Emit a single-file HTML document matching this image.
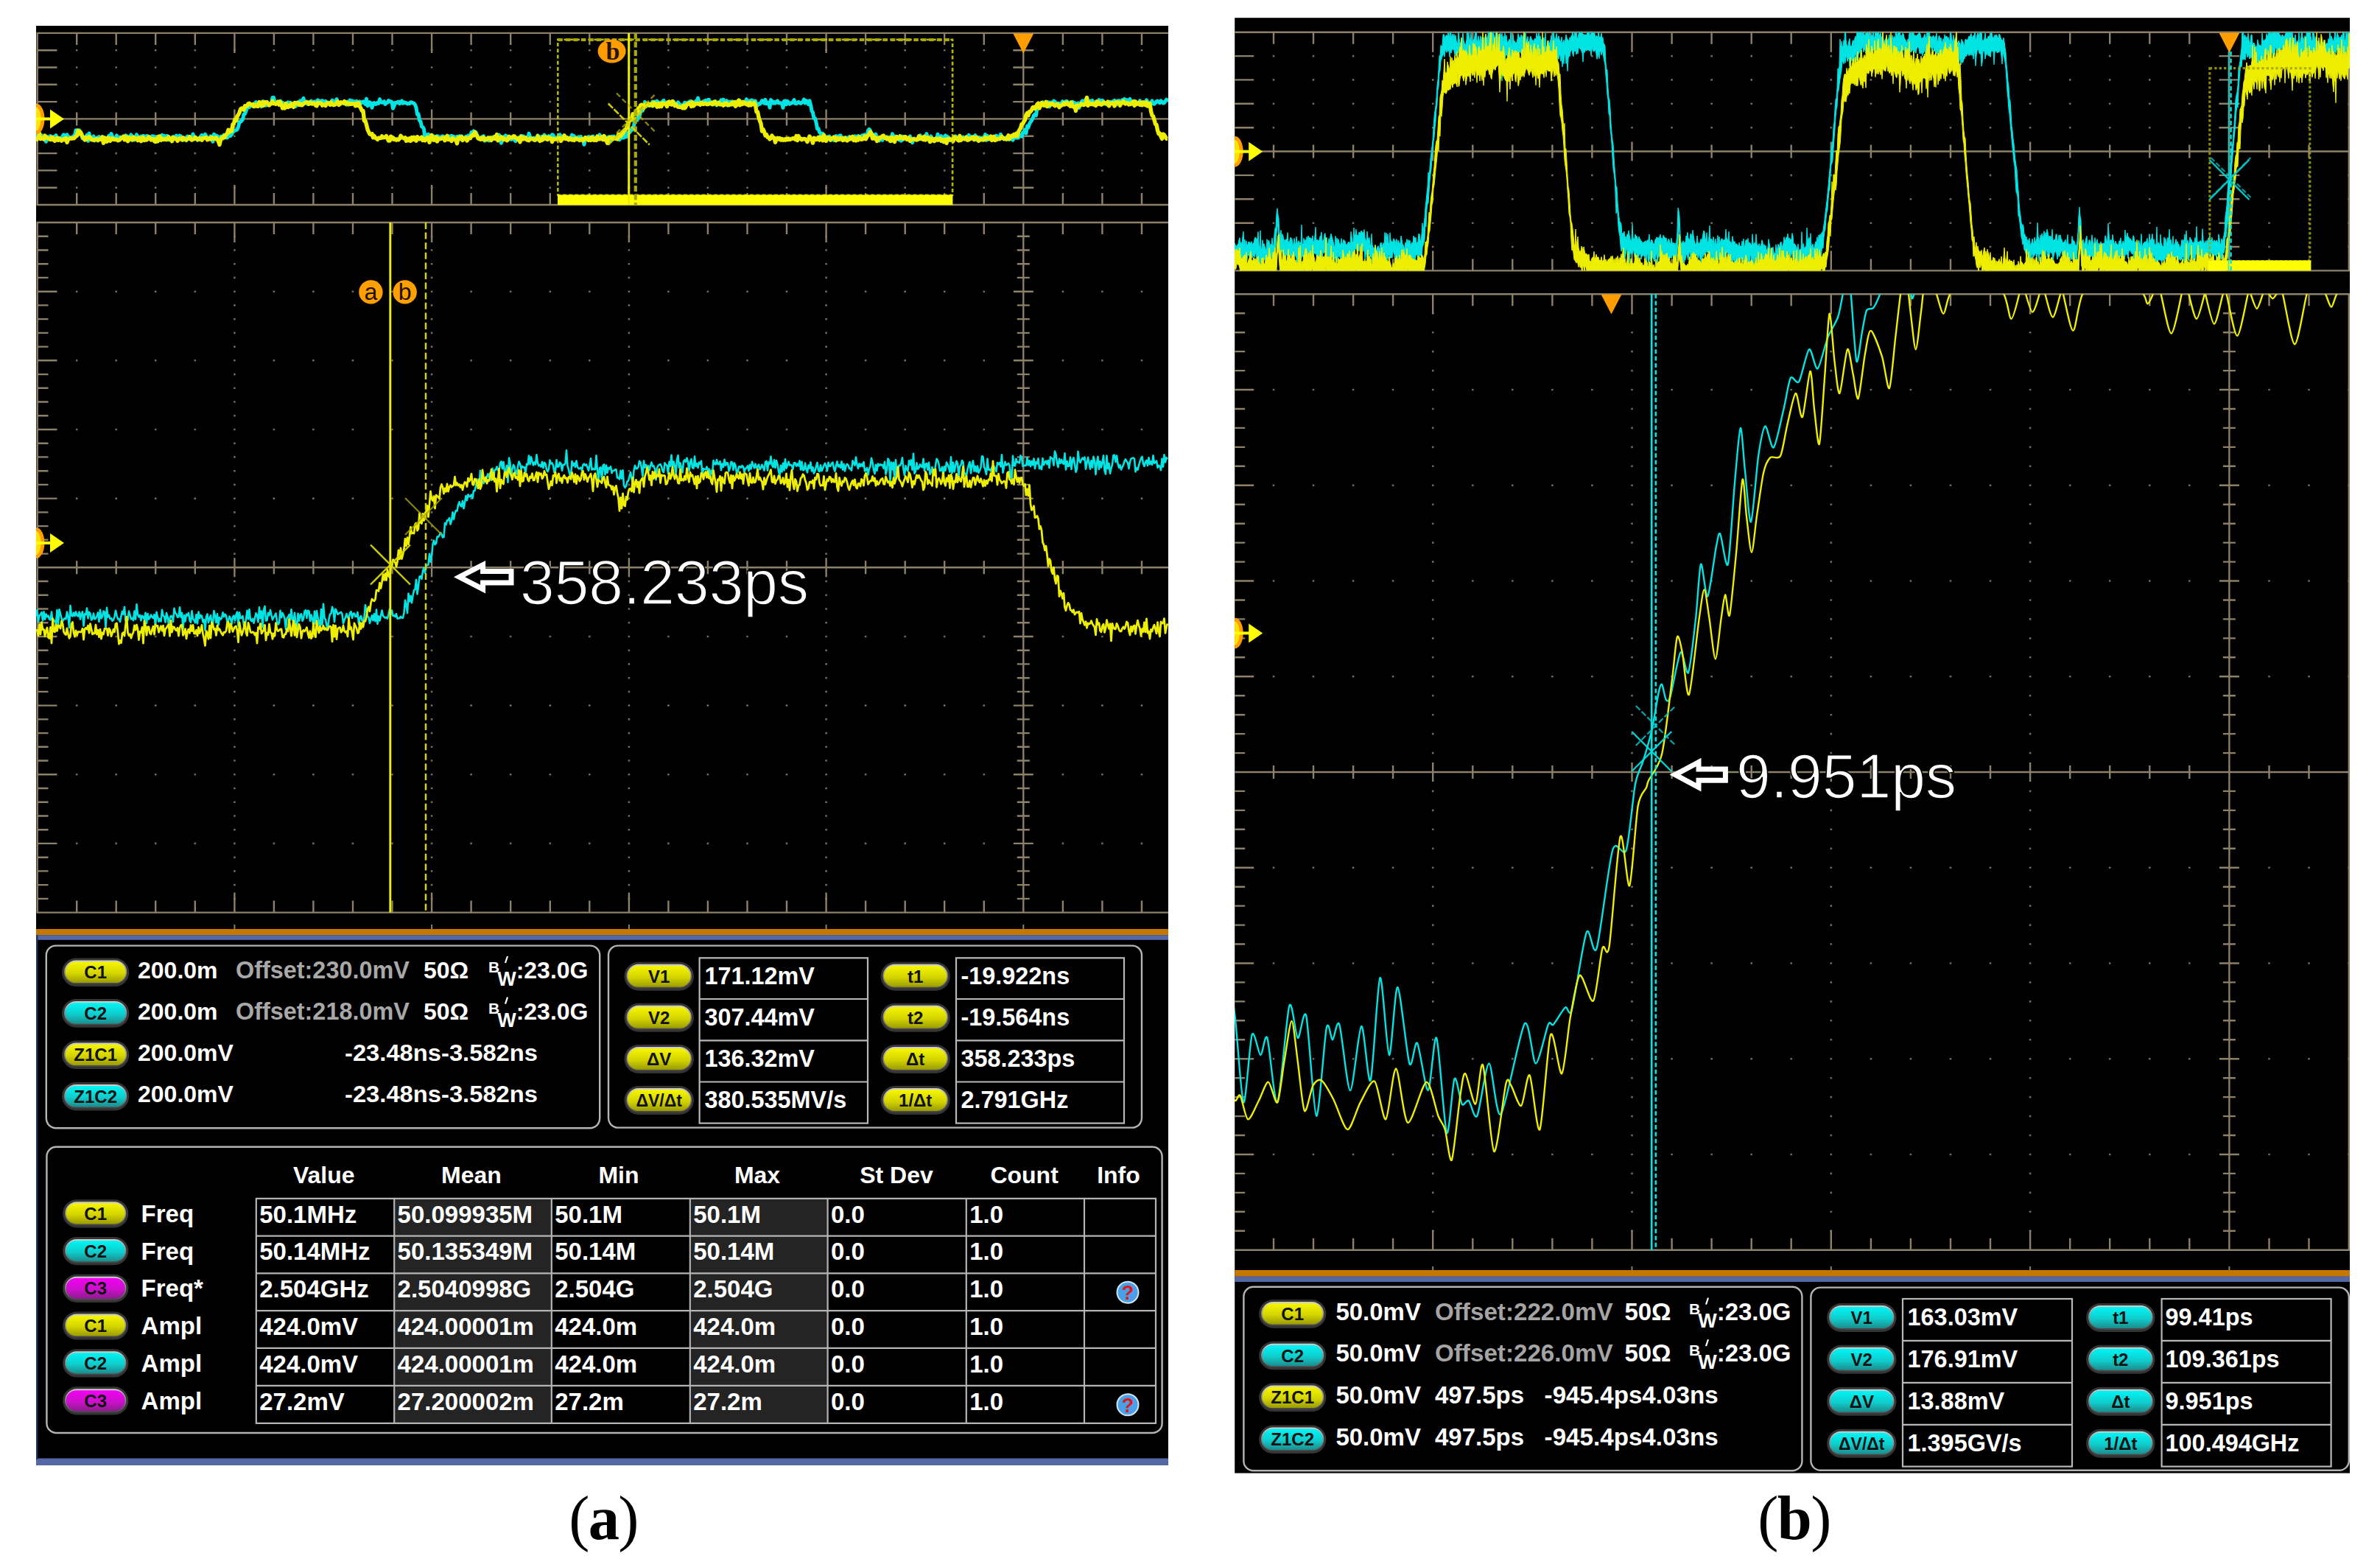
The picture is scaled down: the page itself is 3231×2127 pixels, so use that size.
<!DOCTYPE html><html><head><meta charset="utf-8"><title>Oscilloscope captures</title><style>html,body{margin:0;padding:0;background:#fff;overflow:hidden}svg{display:block}.fs{font-family:"Liberation Sans",Arial,sans-serif}.fr{font-family:"Liberation Serif","DejaVu Serif",serif}</style></head><body>
<svg width="3231" height="2127" viewBox="0 0 3231 2127">
<defs><linearGradient id="gb" x1="0" y1="0" x2="0" y2="1"><stop offset="0" stop-color="#d8d8d8"/><stop offset="0.5" stop-color="#8a8a8a"/><stop offset="1" stop-color="#3c3c3c"/></linearGradient><linearGradient id="gy" x1="0" y1="0" x2="0" y2="1"><stop offset="0" stop-color="#f6f600"/><stop offset="0.55" stop-color="#d4d400"/><stop offset="1" stop-color="#9a9a00"/></linearGradient><linearGradient id="gc" x1="0" y1="0" x2="0" y2="1"><stop offset="0" stop-color="#00f6f6"/><stop offset="0.55" stop-color="#10cccc"/><stop offset="1" stop-color="#1c8c8c"/></linearGradient><linearGradient id="gm" x1="0" y1="0" x2="0" y2="1"><stop offset="0" stop-color="#f400f4"/><stop offset="0.55" stop-color="#cc10cc"/><stop offset="1" stop-color="#8c1c8c"/></linearGradient><clipPath id="cA1"><rect x="49" y="44.9" width="1537" height="233.2"/></clipPath><clipPath id="cA2"><rect x="49" y="302" width="1537" height="936.6"/></clipPath><clipPath id="cB1"><rect x="1676" y="43.7" width="1514" height="323.7"/></clipPath><clipPath id="cB2"><rect x="1676" y="399.3" width="1514" height="1297.4"/></clipPath></defs>
<rect width="3231" height="2127" fill="#fff"/>
<rect x="49" y="35" width="1537" height="1954" fill="#000"/>
<path d="M104.2 66.9v2.6M104.2 90.2v2.6M104.2 113.5v2.6M104.2 136.8v2.6M104.2 183.5v2.6M104.2 206.8v2.6M104.2 230.1v2.6M104.2 253.4v2.6M157.7 66.9v2.6M157.7 90.2v2.6M157.7 113.5v2.6M157.7 136.8v2.6M157.7 183.5v2.6M157.7 206.8v2.6M157.7 230.1v2.6M157.7 253.4v2.6M211.2 66.9v2.6M211.2 90.2v2.6M211.2 113.5v2.6M211.2 136.8v2.6M211.2 183.5v2.6M211.2 206.8v2.6M211.2 230.1v2.6M211.2 253.4v2.6M264.8 66.9v2.6M264.8 90.2v2.6M264.8 113.5v2.6M264.8 136.8v2.6M264.8 183.5v2.6M264.8 206.8v2.6M264.8 230.1v2.6M264.8 253.4v2.6M318.4 66.9v2.6M318.4 90.2v2.6M318.4 113.5v2.6M318.4 136.8v2.6M318.4 183.5v2.6M318.4 206.8v2.6M318.4 230.1v2.6M318.4 253.4v2.6M371.9 66.9v2.6M371.9 90.2v2.6M371.9 113.5v2.6M371.9 136.8v2.6M371.9 183.5v2.6M371.9 206.8v2.6M371.9 230.1v2.6M371.9 253.4v2.6M425.4 66.9v2.6M425.4 90.2v2.6M425.4 113.5v2.6M425.4 136.8v2.6M425.4 183.5v2.6M425.4 206.8v2.6M425.4 230.1v2.6M425.4 253.4v2.6M479 66.9v2.6M479 90.2v2.6M479 113.5v2.6M479 136.8v2.6M479 183.5v2.6M479 206.8v2.6M479 230.1v2.6M479 253.4v2.6M532.5 66.9v2.6M532.5 90.2v2.6M532.5 113.5v2.6M532.5 136.8v2.6M532.5 183.5v2.6M532.5 206.8v2.6M532.5 230.1v2.6M532.5 253.4v2.6M586.1 66.9v2.6M586.1 90.2v2.6M586.1 113.5v2.6M586.1 136.8v2.6M586.1 183.5v2.6M586.1 206.8v2.6M586.1 230.1v2.6M586.1 253.4v2.6M639.6 66.9v2.6M639.6 90.2v2.6M639.6 113.5v2.6M639.6 136.8v2.6M639.6 183.5v2.6M639.6 206.8v2.6M639.6 230.1v2.6M639.6 253.4v2.6M693.2 66.9v2.6M693.2 90.2v2.6M693.2 113.5v2.6M693.2 136.8v2.6M693.2 183.5v2.6M693.2 206.8v2.6M693.2 230.1v2.6M693.2 253.4v2.6M746.8 66.9v2.6M746.8 90.2v2.6M746.8 113.5v2.6M746.8 136.8v2.6M746.8 183.5v2.6M746.8 206.8v2.6M746.8 230.1v2.6M746.8 253.4v2.6M800.3 66.9v2.6M800.3 90.2v2.6M800.3 113.5v2.6M800.3 136.8v2.6M800.3 183.5v2.6M800.3 206.8v2.6M800.3 230.1v2.6M800.3 253.4v2.6M853.9 66.9v2.6M853.9 90.2v2.6M853.9 113.5v2.6M853.9 136.8v2.6M853.9 183.5v2.6M853.9 206.8v2.6M853.9 230.1v2.6M853.9 253.4v2.6M907.4 66.9v2.6M907.4 90.2v2.6M907.4 113.5v2.6M907.4 136.8v2.6M907.4 183.5v2.6M907.4 206.8v2.6M907.4 230.1v2.6M907.4 253.4v2.6M960.9 66.9v2.6M960.9 90.2v2.6M960.9 113.5v2.6M960.9 136.8v2.6M960.9 183.5v2.6M960.9 206.8v2.6M960.9 230.1v2.6M960.9 253.4v2.6M1014.5 66.9v2.6M1014.5 90.2v2.6M1014.5 113.5v2.6M1014.5 136.8v2.6M1014.5 183.5v2.6M1014.5 206.8v2.6M1014.5 230.1v2.6M1014.5 253.4v2.6M1068 66.9v2.6M1068 90.2v2.6M1068 113.5v2.6M1068 136.8v2.6M1068 183.5v2.6M1068 206.8v2.6M1068 230.1v2.6M1068 253.4v2.6M1121.6 66.9v2.6M1121.6 90.2v2.6M1121.6 113.5v2.6M1121.6 136.8v2.6M1121.6 183.5v2.6M1121.6 206.8v2.6M1121.6 230.1v2.6M1121.6 253.4v2.6M1175.1 66.9v2.6M1175.1 90.2v2.6M1175.1 113.5v2.6M1175.1 136.8v2.6M1175.1 183.5v2.6M1175.1 206.8v2.6M1175.1 230.1v2.6M1175.1 253.4v2.6M1228.7 66.9v2.6M1228.7 90.2v2.6M1228.7 113.5v2.6M1228.7 136.8v2.6M1228.7 183.5v2.6M1228.7 206.8v2.6M1228.7 230.1v2.6M1228.7 253.4v2.6M1282.2 66.9v2.6M1282.2 90.2v2.6M1282.2 113.5v2.6M1282.2 136.8v2.6M1282.2 183.5v2.6M1282.2 206.8v2.6M1282.2 230.1v2.6M1282.2 253.4v2.6M1335.8 66.9v2.6M1335.8 90.2v2.6M1335.8 113.5v2.6M1335.8 136.8v2.6M1335.8 183.5v2.6M1335.8 206.8v2.6M1335.8 230.1v2.6M1335.8 253.4v2.6M1442.9 66.9v2.6M1442.9 90.2v2.6M1442.9 113.5v2.6M1442.9 136.8v2.6M1442.9 183.5v2.6M1442.9 206.8v2.6M1442.9 230.1v2.6M1442.9 253.4v2.6M1496.4 66.9v2.6M1496.4 90.2v2.6M1496.4 113.5v2.6M1496.4 136.8v2.6M1496.4 183.5v2.6M1496.4 206.8v2.6M1496.4 230.1v2.6M1496.4 253.4v2.6M1550 66.9v2.6M1550 90.2v2.6M1550 113.5v2.6M1550 136.8v2.6M1550 183.5v2.6M1550 206.8v2.6M1550 230.1v2.6M1550 253.4v2.6" stroke="#8c8068" stroke-width="2.6" fill="none" opacity="0.8"/>
<path d="M49.5 44.9H1586M49.5 278H1586M49.5 161.4H1586M50.7 44.9V278M1389.3 44.9V278M104.2 44.9V60.9M104.2 262V278M104.2 152.4V170.4M157.7 44.9V60.9M157.7 262V278M157.7 152.4V170.4M211.2 44.9V60.9M211.2 262V278M211.2 152.4V170.4M264.8 44.9V60.9M264.8 262V278M264.8 152.4V170.4M318.4 44.9V71.9M318.4 251V278M318.4 148.4V174.4M371.9 44.9V60.9M371.9 262V278M371.9 152.4V170.4M425.4 44.9V60.9M425.4 262V278M425.4 152.4V170.4M479 44.9V60.9M479 262V278M479 152.4V170.4M532.5 44.9V60.9M532.5 262V278M532.5 152.4V170.4M586.1 44.9V71.9M586.1 251V278M586.1 148.4V174.4M639.6 44.9V60.9M639.6 262V278M639.6 152.4V170.4M693.2 44.9V60.9M693.2 262V278M693.2 152.4V170.4M746.8 44.9V60.9M746.8 262V278M746.8 152.4V170.4M800.3 44.9V60.9M800.3 262V278M800.3 152.4V170.4M853.9 44.9V71.9M853.9 251V278M853.9 148.4V174.4M907.4 44.9V60.9M907.4 262V278M907.4 152.4V170.4M960.9 44.9V60.9M960.9 262V278M960.9 152.4V170.4M1014.5 44.9V60.9M1014.5 262V278M1014.5 152.4V170.4M1068 44.9V60.9M1068 262V278M1068 152.4V170.4M1121.6 44.9V71.9M1121.6 251V278M1121.6 148.4V174.4M1175.1 44.9V60.9M1175.1 262V278M1175.1 152.4V170.4M1228.7 44.9V60.9M1228.7 262V278M1228.7 152.4V170.4M1282.2 44.9V60.9M1282.2 262V278M1282.2 152.4V170.4M1335.8 44.9V60.9M1335.8 262V278M1335.8 152.4V170.4M1442.9 44.9V60.9M1442.9 262V278M1442.9 152.4V170.4M1496.4 44.9V60.9M1496.4 262V278M1496.4 152.4V170.4M1550 44.9V60.9M1550 262V278M1550 152.4V170.4M49.5 68.2H77.5M1375.3 68.2H1403.3M49.5 91.5H77.5M1375.3 91.5H1403.3M49.5 114.8H77.5M1375.3 114.8H1403.3M49.5 138.1H77.5M1375.3 138.1H1403.3M49.5 184.8H77.5M1375.3 184.8H1403.3M49.5 208.1H77.5M1375.3 208.1H1403.3M49.5 231.4H77.5M1375.3 231.4H1403.3M49.5 254.7H77.5M1375.3 254.7H1403.3" stroke="#8c8068" stroke-width="2.4" fill="none" />
<path d="M104.2 394.4v2.6M104.2 488v2.6M104.2 581.7v2.6M104.2 675.3v2.6M104.2 862.7v2.6M104.2 956.3v2.6M104.2 1050v2.6M104.2 1143.6v2.6M157.7 394.4v2.6M157.7 488v2.6M157.7 581.7v2.6M157.7 675.3v2.6M157.7 862.7v2.6M157.7 956.3v2.6M157.7 1050v2.6M157.7 1143.6v2.6M211.2 394.4v2.6M211.2 488v2.6M211.2 581.7v2.6M211.2 675.3v2.6M211.2 862.7v2.6M211.2 956.3v2.6M211.2 1050v2.6M211.2 1143.6v2.6M264.8 394.4v2.6M264.8 488v2.6M264.8 581.7v2.6M264.8 675.3v2.6M264.8 862.7v2.6M264.8 956.3v2.6M264.8 1050v2.6M264.8 1143.6v2.6M318.4 319.4v2.6M318.4 338.2v2.6M318.4 356.9v2.6M318.4 375.6v2.6M318.4 394.4v2.6M318.4 413.1v2.6M318.4 431.8v2.6M318.4 450.6v2.6M318.4 469.3v2.6M318.4 488v2.6M318.4 506.8v2.6M318.4 525.5v2.6M318.4 544.2v2.6M318.4 562.9v2.6M318.4 581.7v2.6M318.4 600.4v2.6M318.4 619.1v2.6M318.4 637.9v2.6M318.4 656.6v2.6M318.4 675.3v2.6M318.4 694.1v2.6M318.4 712.8v2.6M318.4 731.5v2.6M318.4 750.3v2.6M318.4 787.7v2.6M318.4 806.5v2.6M318.4 825.2v2.6M318.4 843.9v2.6M318.4 862.7v2.6M318.4 881.4v2.6M318.4 900.1v2.6M318.4 918.9v2.6M318.4 937.6v2.6M318.4 956.3v2.6M318.4 975.1v2.6M318.4 993.8v2.6M318.4 1012.5v2.6M318.4 1031.2v2.6M318.4 1050v2.6M318.4 1068.7v2.6M318.4 1087.4v2.6M318.4 1106.2v2.6M318.4 1124.9v2.6M318.4 1143.6v2.6M318.4 1162.4v2.6M318.4 1181.1v2.6M318.4 1199.8v2.6M318.4 1218.6v2.6M371.9 394.4v2.6M371.9 488v2.6M371.9 581.7v2.6M371.9 675.3v2.6M371.9 862.7v2.6M371.9 956.3v2.6M371.9 1050v2.6M371.9 1143.6v2.6M425.4 394.4v2.6M425.4 488v2.6M425.4 581.7v2.6M425.4 675.3v2.6M425.4 862.7v2.6M425.4 956.3v2.6M425.4 1050v2.6M425.4 1143.6v2.6M479 394.4v2.6M479 488v2.6M479 581.7v2.6M479 675.3v2.6M479 862.7v2.6M479 956.3v2.6M479 1050v2.6M479 1143.6v2.6M532.5 394.4v2.6M532.5 488v2.6M532.5 581.7v2.6M532.5 675.3v2.6M532.5 862.7v2.6M532.5 956.3v2.6M532.5 1050v2.6M532.5 1143.6v2.6M586.1 319.4v2.6M586.1 338.2v2.6M586.1 356.9v2.6M586.1 375.6v2.6M586.1 394.4v2.6M586.1 413.1v2.6M586.1 431.8v2.6M586.1 450.6v2.6M586.1 469.3v2.6M586.1 488v2.6M586.1 506.8v2.6M586.1 525.5v2.6M586.1 544.2v2.6M586.1 562.9v2.6M586.1 581.7v2.6M586.1 600.4v2.6M586.1 619.1v2.6M586.1 637.9v2.6M586.1 656.6v2.6M586.1 675.3v2.6M586.1 694.1v2.6M586.1 712.8v2.6M586.1 731.5v2.6M586.1 750.3v2.6M586.1 787.7v2.6M586.1 806.5v2.6M586.1 825.2v2.6M586.1 843.9v2.6M586.1 862.7v2.6M586.1 881.4v2.6M586.1 900.1v2.6M586.1 918.9v2.6M586.1 937.6v2.6M586.1 956.3v2.6M586.1 975.1v2.6M586.1 993.8v2.6M586.1 1012.5v2.6M586.1 1031.2v2.6M586.1 1050v2.6M586.1 1068.7v2.6M586.1 1087.4v2.6M586.1 1106.2v2.6M586.1 1124.9v2.6M586.1 1143.6v2.6M586.1 1162.4v2.6M586.1 1181.1v2.6M586.1 1199.8v2.6M586.1 1218.6v2.6M639.6 394.4v2.6M639.6 488v2.6M639.6 581.7v2.6M639.6 675.3v2.6M639.6 862.7v2.6M639.6 956.3v2.6M639.6 1050v2.6M639.6 1143.6v2.6M693.2 394.4v2.6M693.2 488v2.6M693.2 581.7v2.6M693.2 675.3v2.6M693.2 862.7v2.6M693.2 956.3v2.6M693.2 1050v2.6M693.2 1143.6v2.6M746.8 394.4v2.6M746.8 488v2.6M746.8 581.7v2.6M746.8 675.3v2.6M746.8 862.7v2.6M746.8 956.3v2.6M746.8 1050v2.6M746.8 1143.6v2.6M800.3 394.4v2.6M800.3 488v2.6M800.3 581.7v2.6M800.3 675.3v2.6M800.3 862.7v2.6M800.3 956.3v2.6M800.3 1050v2.6M800.3 1143.6v2.6M853.9 319.4v2.6M853.9 338.2v2.6M853.9 356.9v2.6M853.9 375.6v2.6M853.9 394.4v2.6M853.9 413.1v2.6M853.9 431.8v2.6M853.9 450.6v2.6M853.9 469.3v2.6M853.9 488v2.6M853.9 506.8v2.6M853.9 525.5v2.6M853.9 544.2v2.6M853.9 562.9v2.6M853.9 581.7v2.6M853.9 600.4v2.6M853.9 619.1v2.6M853.9 637.9v2.6M853.9 656.6v2.6M853.9 675.3v2.6M853.9 694.1v2.6M853.9 712.8v2.6M853.9 731.5v2.6M853.9 750.3v2.6M853.9 787.7v2.6M853.9 806.5v2.6M853.9 825.2v2.6M853.9 843.9v2.6M853.9 862.7v2.6M853.9 881.4v2.6M853.9 900.1v2.6M853.9 918.9v2.6M853.9 937.6v2.6M853.9 956.3v2.6M853.9 975.1v2.6M853.9 993.8v2.6M853.9 1012.5v2.6M853.9 1031.2v2.6M853.9 1050v2.6M853.9 1068.7v2.6M853.9 1087.4v2.6M853.9 1106.2v2.6M853.9 1124.9v2.6M853.9 1143.6v2.6M853.9 1162.4v2.6M853.9 1181.1v2.6M853.9 1199.8v2.6M853.9 1218.6v2.6M907.4 394.4v2.6M907.4 488v2.6M907.4 581.7v2.6M907.4 675.3v2.6M907.4 862.7v2.6M907.4 956.3v2.6M907.4 1050v2.6M907.4 1143.6v2.6M960.9 394.4v2.6M960.9 488v2.6M960.9 581.7v2.6M960.9 675.3v2.6M960.9 862.7v2.6M960.9 956.3v2.6M960.9 1050v2.6M960.9 1143.6v2.6M1014.5 394.4v2.6M1014.5 488v2.6M1014.5 581.7v2.6M1014.5 675.3v2.6M1014.5 862.7v2.6M1014.5 956.3v2.6M1014.5 1050v2.6M1014.5 1143.6v2.6M1068 394.4v2.6M1068 488v2.6M1068 581.7v2.6M1068 675.3v2.6M1068 862.7v2.6M1068 956.3v2.6M1068 1050v2.6M1068 1143.6v2.6M1121.6 319.4v2.6M1121.6 338.2v2.6M1121.6 356.9v2.6M1121.6 375.6v2.6M1121.6 394.4v2.6M1121.6 413.1v2.6M1121.6 431.8v2.6M1121.6 450.6v2.6M1121.6 469.3v2.6M1121.6 488v2.6M1121.6 506.8v2.6M1121.6 525.5v2.6M1121.6 544.2v2.6M1121.6 562.9v2.6M1121.6 581.7v2.6M1121.6 600.4v2.6M1121.6 619.1v2.6M1121.6 637.9v2.6M1121.6 656.6v2.6M1121.6 675.3v2.6M1121.6 694.1v2.6M1121.6 712.8v2.6M1121.6 731.5v2.6M1121.6 750.3v2.6M1121.6 787.7v2.6M1121.6 806.5v2.6M1121.6 825.2v2.6M1121.6 843.9v2.6M1121.6 862.7v2.6M1121.6 881.4v2.6M1121.6 900.1v2.6M1121.6 918.9v2.6M1121.6 937.6v2.6M1121.6 956.3v2.6M1121.6 975.1v2.6M1121.6 993.8v2.6M1121.6 1012.5v2.6M1121.6 1031.2v2.6M1121.6 1050v2.6M1121.6 1068.7v2.6M1121.6 1087.4v2.6M1121.6 1106.2v2.6M1121.6 1124.9v2.6M1121.6 1143.6v2.6M1121.6 1162.4v2.6M1121.6 1181.1v2.6M1121.6 1199.8v2.6M1121.6 1218.6v2.6M1175.1 394.4v2.6M1175.1 488v2.6M1175.1 581.7v2.6M1175.1 675.3v2.6M1175.1 862.7v2.6M1175.1 956.3v2.6M1175.1 1050v2.6M1175.1 1143.6v2.6M1228.7 394.4v2.6M1228.7 488v2.6M1228.7 581.7v2.6M1228.7 675.3v2.6M1228.7 862.7v2.6M1228.7 956.3v2.6M1228.7 1050v2.6M1228.7 1143.6v2.6M1282.2 394.4v2.6M1282.2 488v2.6M1282.2 581.7v2.6M1282.2 675.3v2.6M1282.2 862.7v2.6M1282.2 956.3v2.6M1282.2 1050v2.6M1282.2 1143.6v2.6M1335.8 394.4v2.6M1335.8 488v2.6M1335.8 581.7v2.6M1335.8 675.3v2.6M1335.8 862.7v2.6M1335.8 956.3v2.6M1335.8 1050v2.6M1335.8 1143.6v2.6M1442.9 394.4v2.6M1442.9 488v2.6M1442.9 581.7v2.6M1442.9 675.3v2.6M1442.9 862.7v2.6M1442.9 956.3v2.6M1442.9 1050v2.6M1442.9 1143.6v2.6M1496.4 394.4v2.6M1496.4 488v2.6M1496.4 581.7v2.6M1496.4 675.3v2.6M1496.4 862.7v2.6M1496.4 956.3v2.6M1496.4 1050v2.6M1496.4 1143.6v2.6M1550 394.4v2.6M1550 488v2.6M1550 581.7v2.6M1550 675.3v2.6M1550 862.7v2.6M1550 956.3v2.6M1550 1050v2.6M1550 1143.6v2.6" stroke="#8c8068" stroke-width="2.6" fill="none" opacity="0.8"/>
<path d="M49.5 302H1586M49.5 1238.6H1586M49.5 770.3H1586M50.7 302V1238.6M1389.3 302V1238.6M104.2 302V318M104.2 1222.6V1238.6M104.2 761.3V779.3M157.7 302V318M157.7 1222.6V1238.6M157.7 761.3V779.3M211.2 302V318M211.2 1222.6V1238.6M211.2 761.3V779.3M264.8 302V318M264.8 1222.6V1238.6M264.8 761.3V779.3M318.4 302V329M318.4 1211.6V1238.6M318.4 757.3V783.3M371.9 302V318M371.9 1222.6V1238.6M371.9 761.3V779.3M425.4 302V318M425.4 1222.6V1238.6M425.4 761.3V779.3M479 302V318M479 1222.6V1238.6M479 761.3V779.3M532.5 302V318M532.5 1222.6V1238.6M532.5 761.3V779.3M586.1 302V329M586.1 1211.6V1238.6M586.1 757.3V783.3M639.6 302V318M639.6 1222.6V1238.6M639.6 761.3V779.3M693.2 302V318M693.2 1222.6V1238.6M693.2 761.3V779.3M746.8 302V318M746.8 1222.6V1238.6M746.8 761.3V779.3M800.3 302V318M800.3 1222.6V1238.6M800.3 761.3V779.3M853.9 302V329M853.9 1211.6V1238.6M853.9 757.3V783.3M907.4 302V318M907.4 1222.6V1238.6M907.4 761.3V779.3M960.9 302V318M960.9 1222.6V1238.6M960.9 761.3V779.3M1014.5 302V318M1014.5 1222.6V1238.6M1014.5 761.3V779.3M1068 302V318M1068 1222.6V1238.6M1068 761.3V779.3M1121.6 302V329M1121.6 1211.6V1238.6M1121.6 757.3V783.3M1175.1 302V318M1175.1 1222.6V1238.6M1175.1 761.3V779.3M1228.7 302V318M1228.7 1222.6V1238.6M1228.7 761.3V779.3M1282.2 302V318M1282.2 1222.6V1238.6M1282.2 761.3V779.3M1335.8 302V318M1335.8 1222.6V1238.6M1335.8 761.3V779.3M1442.9 302V318M1442.9 1222.6V1238.6M1442.9 761.3V779.3M1496.4 302V318M1496.4 1222.6V1238.6M1496.4 761.3V779.3M1550 302V318M1550 1222.6V1238.6M1550 761.3V779.3M49.5 320.7H65.5M1380.8 320.7H1397.8M49.5 339.5H65.5M1380.8 339.5H1397.8M49.5 358.2H65.5M1380.8 358.2H1397.8M49.5 376.9H65.5M1380.8 376.9H1397.8M49.5 395.7H77.5M1375.8 395.7H1402.8M49.5 414.4H65.5M1380.8 414.4H1397.8M49.5 433.1H65.5M1380.8 433.1H1397.8M49.5 451.9H65.5M1380.8 451.9H1397.8M49.5 470.6H65.5M1380.8 470.6H1397.8M49.5 489.3H77.5M1375.8 489.3H1402.8M49.5 508.1H65.5M1380.8 508.1H1397.8M49.5 526.8H65.5M1380.8 526.8H1397.8M49.5 545.5H65.5M1380.8 545.5H1397.8M49.5 564.2H65.5M1380.8 564.2H1397.8M49.5 583H77.5M1375.8 583H1402.8M49.5 601.7H65.5M1380.8 601.7H1397.8M49.5 620.4H65.5M1380.8 620.4H1397.8M49.5 639.2H65.5M1380.8 639.2H1397.8M49.5 657.9H65.5M1380.8 657.9H1397.8M49.5 676.6H77.5M1375.8 676.6H1402.8M49.5 695.4H65.5M1380.8 695.4H1397.8M49.5 714.1H65.5M1380.8 714.1H1397.8M49.5 732.8H65.5M1380.8 732.8H1397.8M49.5 751.6H65.5M1380.8 751.6H1397.8M49.5 789H65.5M1380.8 789H1397.8M49.5 807.8H65.5M1380.8 807.8H1397.8M49.5 826.5H65.5M1380.8 826.5H1397.8M49.5 845.2H65.5M1380.8 845.2H1397.8M49.5 864H77.5M1375.8 864H1402.8M49.5 882.7H65.5M1380.8 882.7H1397.8M49.5 901.4H65.5M1380.8 901.4H1397.8M49.5 920.2H65.5M1380.8 920.2H1397.8M49.5 938.9H65.5M1380.8 938.9H1397.8M49.5 957.6H77.5M1375.8 957.6H1402.8M49.5 976.4H65.5M1380.8 976.4H1397.8M49.5 995.1H65.5M1380.8 995.1H1397.8M49.5 1013.8H65.5M1380.8 1013.8H1397.8M49.5 1032.5H65.5M1380.8 1032.5H1397.8M49.5 1051.3H77.5M1375.8 1051.3H1402.8M49.5 1070H65.5M1380.8 1070H1397.8M49.5 1088.7H65.5M1380.8 1088.7H1397.8M49.5 1107.5H65.5M1380.8 1107.5H1397.8M49.5 1126.2H65.5M1380.8 1126.2H1397.8M49.5 1144.9H77.5M1375.8 1144.9H1402.8M49.5 1163.7H65.5M1380.8 1163.7H1397.8M49.5 1182.4H65.5M1380.8 1182.4H1397.8M49.5 1201.1H65.5M1380.8 1201.1H1397.8M49.5 1219.9H65.5M1380.8 1219.9H1397.8" stroke="#8c8068" stroke-width="2.4" fill="none" />
<path d="M318.4 1255V1261M586.1 1255V1261M853.9 1255V1261M1121.6 1255V1261M1389.3 1255V1261" stroke="#8c8068" stroke-width="2" fill="none" />
<g clip-path="url(#cA1)">
<polyline points="49,186.2 50.5,184.1 52,186.3 53.5,182.9 55,187.7 56.5,183.6 58,186.6 59.5,187.4 61,185.2 62.5,192.3 64,185.7 65.5,187.8 67,189 68.5,184.6 70,189.5 71.5,189.9 73,186.6 74.5,185.2 76,183.7 77.5,189.3 79,186.9 80.5,187.3 82,188.2 83.5,188 85,184.8 86.5,182.8 88,183.8 89.5,183.6 91,182.8 92.5,185.8 94,186 95.5,186.5 97,187.2 98.5,185.6 100,184.8 101.5,183.5 103,176.8 104.5,176.7 106,177.1 107.5,176.8 109,179.5 110.5,183.1 112,187.8 113.5,187 115,186.2 116.5,185.8 118,183.4 119.5,191.3 121,181 122.5,188 124,187.4 125.5,188.6 127,184.8 128.5,191 130,188.9 131.5,186.9 133,187.3 134.5,185.6 136,187.1 137.5,186.7 139,188.8 140.5,189.5 142,186.8 143.5,188.3 145,188.1 146.5,187.4 148,184.1 149.5,189 151,181.5 152.5,185.1 154,186.8 155.5,188 157,189.7 158.5,183.8 160,189.8 161.5,190.1 163,186.1 164.5,186.6 166,185.9 167.5,185.9 169,184.5 170.5,183.8 172,184.5 173.5,187.5 175,190.5 176.5,185.1 178,183 179.5,187.3 181,186.1 182.5,190 184,186.2 185.5,182.7 187,185.7 188.5,188.5 190,187.5 191.5,185.2 193,188.7 194.5,184.3 196,186 197.5,187.4 199,184.4 200.5,184.7 202,187 203.5,186.8 205,186.5 206.5,184.8 208,184.9 209.5,185.5 211,192.8 212.5,185.8 214,189.9 215.5,185.9 217,189.6 218.5,190.5 220,183.3 221.5,185.8 223,184.4 224.5,188.8 226,184.6 227.5,184.6 229,189.9 230.5,189.8 232,188.2 233.5,186.5 235,185.7 236.5,187.7 238,186.1 239.5,184.1 241,185.5 242.5,187.5 244,184 245.5,185.1 247,187.2 248.5,190.2 250,187.3 251.5,187.1 253,190.7 254.5,185 256,185.6 257.5,188.6 259,189 260.5,187.9 262,182 263.5,188.4 265,188.3 266.5,187.1 268,190.3 269.5,189.7 271,187.1 272.5,185.2 274,183.5 275.5,187.1 277,185.6 278.5,182.2 280,184.8 281.5,187.5 283,188.4 284.5,187.8 286,184.9 287.5,188.7 289,192.2 290.5,182.2 292,188.1 293.5,183.9 295,184.7 296.5,188.9 298,188.1 299.5,185.5 301,185 302.5,187.2 304,183 305.5,187 307,185.4 308.5,187 310,185 311.5,182.6 313,184.3 314.5,182.4 316,179.2 317.5,178.3 319,176.9 320.5,176.8 322,175.9 323.5,172.2 325,165.3 326.5,165.4 328,164 329.5,161.8 331,155 332.5,154.6 334,150.9 335.5,145.4 337,145.3 338.5,145.6 340,144.1 341.5,143.3 343,142.1 344.5,141.3 346,140.2 347.5,138.6 349,142.2 350.5,139.8 352,142.2 353.5,139.3 355,144.6 356.5,137.8 358,137.7 359.5,141.2 361,143.1 362.5,138.2 364,142.6 365.5,142.4 367,141 368.5,139 370,132.4 371.5,132.3 373,137.8 374.5,140.3 376,139.1 377.5,138.3 379,140 380.5,137 382,141.3 383.5,139.2 385,143.1 386.5,142.1 388,140.6 389.5,141.1 391,138.8 392.5,144.1 394,139.2 395.5,140.4 397,142.3 398.5,141.9 400,140.4 401.5,144.3 403,140.5 404.5,138.6 406,142 407.5,136.8 409,139.5 410.5,136.8 412,133.3 413.5,140.1 415,139.6 416.5,137.9 418,141.5 419.5,139.8 421,138.1 422.5,137.2 424,141.2 425.5,138.2 427,138 428.5,138.1 430,137.5 431.5,135.8 433,137.6 434.5,137.3 436,140.3 437.5,136.5 439,140.3 440.5,138 442,137.4 443.5,138.7 445,139.1 446.5,139.2 448,140.1 449.5,139.4 451,136 452.5,137.7 454,142.1 455.5,138.8 457,134.5 458.5,139.3 460,142.2 461.5,141.2 463,139.1 464.5,139.4 466,140.2 467.5,137.7 469,138.1 470.5,142.1 472,138.2 473.5,140.9 475,136 476.5,137.5 478,136.8 479.5,139.8 481,137.8 482.5,137.8 484,137.2 485.5,139.3 487,140.9 488.5,137.9 490,140.2 491.5,139 493,137.8 494.5,139.7 496,141.5 497.5,134.1 499,143.7 500.5,142.4 502,138.7 503.5,140.5 505,146.2 506.5,140 508,139.5 509.5,141.5 511,141.1 512.5,139.4 514,140.3 515.5,134.6 517,138.7 518.5,139.3 520,138.9 521.5,137.7 523,141.4 524.5,139.7 526,139.2 527.5,136.5 529,138 530.5,137.7 532,138.7 533.5,147.3 535,143.8 536.5,139.4 538,139.7 539.5,138.6 541,138 542.5,140.7 544,138.2 545.5,137 547,140.2 548.5,138.7 550,139.6 551.5,139.6 553,140.9 554.5,140.2 556,140.8 557.5,138.8 559,138.9 560.5,139.8 562,140.1 563.5,142.2 565,146.2 566.5,155.4 568,154.7 569.5,163.5 571,164.9 572.5,172 574,172.5 575.5,175.2 577,189 578.5,183 580,183.2 581.5,182.3 583,186.9 584.5,185.9 586,184.3 587.5,190 589,184.8 590.5,188.9 592,186.1 593.5,184.6 595,185.5 596.5,188.9 598,188 599.5,185.5 601,184.7 602.5,185.8 604,187.5 605.5,186.2 607,185.9 608.5,187 610,185.1 611.5,184.9 613,184.3 614.5,185.2 616,185.2 617.5,187.5 619,187.1 620.5,185.4 622,189.1 623.5,184.7 625,188.8 626.5,184.8 628,186.4 629.5,188.6 631,188.6 632.5,185.3 634,188.1 635.5,184.2 637,184.9 638.5,184.1 640,179.5 641.5,182.8 643,177.9 644.5,179.3 646,179.5 647.5,183.1 649,185.9 650.5,188 652,188.2 653.5,186.2 655,185.4 656.5,184.7 658,191.1 659.5,189.2 661,189.8 662.5,186.7 664,190.9 665.5,188 667,187.5 668.5,186 670,187 671.5,188.3 673,187.1 674.5,184.6 676,184.4 677.5,183.2 679,184.9 680.5,194.3 682,190 683.5,185.8 685,186.4 686.5,184 688,185.1 689.5,190 691,185.5 692.5,187.2 694,189.3 695.5,186.6 697,184.8 698.5,190.2 700,191.5 701.5,187.4 703,187.6 704.5,186.6 706,188.3 707.5,184.4 709,187 710.5,184.8 712,186.9 713.5,188.2 715,186.7 716.5,190.3 718,181.1 719.5,185.7 721,187.6 722.5,187.5 724,187.6 725.5,187.1 727,190.4 728.5,188.8 730,183.9 731.5,188.4 733,185.9 734.5,186.8 736,185.3 737.5,189.4 739,183.1 740.5,184.7 742,186.2 743.5,188.3 745,184.5 746.5,188 748,189.1 749.5,182.7 751,183.5 752.5,188.4 754,186.7 755.5,186.8 757,189 758.5,188.4 760,182.7 761.5,187.3 763,185.3 764.5,187.8 766,186.9 767.5,188 769,185.8 770.5,187.4 772,187.6 773.5,188.1 775,187.2 776.5,183.1 778,188 779.5,184.7 781,188.9 782.5,187 784,188 785.5,185.8 787,190.3 788.5,185.5 790,189.6 791.5,190.1 793,196.1 794.5,189.6 796,186.9 797.5,187.6 799,185.6 800.5,186.1 802,189.7 803.5,187.7 805,185 806.5,188.5 808,187.3 809.5,189.1 811,185 812.5,185 814,182.8 815.5,188.8 817,187.3 818.5,187.3 820,184.7 821.5,185.9 823,187.2 824.5,188.6 826,186 827.5,185.9 829,191.1 830.5,185.2 832,186.5 833.5,185.1 835,186.9 836.5,188.3 838,188.3 839.5,187.3 841,189.6 842.5,186.1 844,187.1 845.5,183.5 847,186.9 848.5,183.1 850,185.9 851.5,180.4 853,181.6 854.5,180 856,178.1 857.5,175 859,175.8 860.5,170.9 862,162.4 863.5,163.1 865,163.2 866.5,156.1 868,158.4 869.5,151.7 871,146.7 872.5,150.1 874,145.1 875.5,138.4 877,144.5 878.5,141.1 880,143.2 881.5,143.6 883,143.3 884.5,140.9 886,138 887.5,143.2 889,138 890.5,140.4 892,137.2 893.5,138.7 895,140.2 896.5,139.4 898,140 899.5,137.7 901,136.3 902.5,140.1 904,139.1 905.5,141.4 907,141.9 908.5,139 910,138.7 911.5,141.9 913,141.3 914.5,138 916,143.6 917.5,140.9 919,140.6 920.5,138.8 922,141 923.5,143.1 925,142.8 926.5,144.7 928,143.6 929.5,139.4 931,140.4 932.5,139.6 934,140.7 935.5,138.2 937,137.6 938.5,137.4 940,138.9 941.5,139.7 943,141.4 944.5,137.4 946,138 947.5,133 949,138.7 950.5,139.3 952,139.7 953.5,139.1 955,137.4 956.5,137.5 958,136.3 959.5,136.9 961,135.4 962.5,135.3 964,140.5 965.5,139.1 967,138.7 968.5,141.8 970,140 971.5,137.7 973,142.9 974.5,139.6 976,139.5 977.5,139.8 979,135.8 980.5,137.5 982,135.2 983.5,139.6 985,138.2 986.5,136.6 988,143.2 989.5,141.5 991,138.1 992.5,140.6 994,137.8 995.5,140.8 997,140.5 998.5,138.1 1000,140.2 1001.5,140.1 1003,141 1004.5,136.8 1006,138.6 1007.5,140.6 1009,139.6 1010.5,139.4 1012,137.9 1013.5,134.7 1015,142.1 1016.5,137.1 1018,139 1019.5,136.3 1021,136 1022.5,137.2 1024,138.6 1025.5,137.2 1027,142 1028.5,142.9 1030,140.7 1031.5,141.2 1033,139.7 1034.5,136.6 1036,137.6 1037.5,140.2 1039,135.3 1040.5,140.8 1042,139.4 1043.5,139.1 1045,146.1 1046.5,135.6 1048,137.3 1049.5,140.2 1051,138.5 1052.5,140.2 1054,138 1055.5,136.9 1057,139.9 1058.5,139.5 1060,140.1 1061.5,140.1 1063,146.3 1064.5,137.2 1066,136.9 1067.5,141.8 1069,137.4 1070.5,139.3 1072,141.2 1073.5,139.8 1075,140 1076.5,138.9 1078,135.6 1079.5,140.4 1081,140.7 1082.5,139.9 1084,138.3 1085.5,139.5 1087,140.4 1088.5,139.4 1090,138.1 1091.5,134.9 1093,139.9 1094.5,136.7 1096,138.1 1097.5,141.6 1099,136.7 1100.5,142.3 1102,150.4 1103.5,152.9 1105,160.5 1106.5,160.8 1108,166.1 1109.5,174.8 1111,174.6 1112.5,179.5 1114,180.6 1115.5,187.6 1117,181.3 1118.5,184.4 1120,186.5 1121.5,187.8 1123,186 1124.5,187.6 1126,185.1 1127.5,190.2 1129,187.6 1130.5,188.3 1132,190.4 1133.5,187.5 1135,184.7 1136.5,188.5 1138,189.7 1139.5,184.2 1141,183.9 1142.5,188.4 1144,186.8 1145.5,189.9 1147,189 1148.5,186.8 1150,187 1151.5,189.5 1153,185.6 1154.5,187.4 1156,186.7 1157.5,187.4 1159,187.6 1160.5,184.8 1162,186.2 1163.5,185.9 1165,184.5 1166.5,187.8 1168,185.8 1169.5,184.7 1171,183.7 1172.5,185.4 1174,183 1175.5,184 1177,185.2 1178.5,177.1 1180,175.5 1181.5,177.2 1183,181.8 1184.5,181.9 1186,186.3 1187.5,185.1 1189,182.2 1190.5,190 1192,188.6 1193.5,190.9 1195,186.4 1196.5,187.3 1198,190.2 1199.5,186.4 1201,187.6 1202.5,186.5 1204,185.9 1205.5,187.9 1207,188 1208.5,186.1 1210,191.6 1211.5,181.6 1213,189.9 1214.5,184.9 1216,185.6 1217.5,188.3 1219,188.9 1220.5,189.7 1222,184.4 1223.5,191.1 1225,185.2 1226.5,189.1 1228,186.3 1229.5,187.3 1231,187.1 1232.5,188.8 1234,187.2 1235.5,185 1237,189.4 1238.5,193.7 1240,188.5 1241.5,188.1 1243,189.5 1244.5,189.3 1246,189.7 1247.5,188.2 1249,183.7 1250.5,188.7 1252,188.7 1253.5,189.1 1255,189.3 1256.5,184.7 1258,181.7 1259.5,189.3 1261,188.7 1262.5,187.4 1264,185 1265.5,190.7 1267,190.5 1268.5,191.4 1270,188 1271.5,189.5 1273,182.3 1274.5,188.4 1276,185.8 1277.5,184.7 1279,186.6 1280.5,192.6 1282,186 1283.5,183.8 1285,189.4 1286.5,185.5 1288,187 1289.5,190.4 1291,189.2 1292.5,188.5 1294,189.4 1295.5,187.1 1297,184.8 1298.5,186.9 1300,186.3 1301.5,187.1 1303,187 1304.5,188.1 1306,189 1307.5,186 1309,186.5 1310.5,187.7 1312,189.4 1313.5,186.4 1315,183.3 1316.5,189 1318,185.4 1319.5,187.5 1321,186.1 1322.5,188.3 1324,183.6 1325.5,189.7 1327,186.3 1328.5,189.4 1330,186.6 1331.5,190.1 1333,187.5 1334.5,186.6 1336,189.3 1337.5,182.5 1339,190.5 1340.5,184.4 1342,187.6 1343.5,188.9 1345,188.7 1346.5,187.1 1348,185.8 1349.5,188.4 1351,187 1352.5,184.1 1354,185.3 1355.5,188.4 1357,188.9 1358.5,182.4 1360,187.7 1361.5,186.6 1363,188.9 1364.5,187.2 1366,186.6 1367.5,188.9 1369,189.2 1370.5,189.2 1372,187 1373.5,187.8 1375,190.2 1376.5,186.4 1378,185 1379.5,187 1381,184 1382.5,187.1 1384,183.1 1385.5,183.3 1387,185.2 1388.5,180 1390,179.6 1391.5,176.4 1393,181 1394.5,171.1 1396,173.1 1397.5,168.1 1399,165.6 1400.5,163.5 1402,160.6 1403.5,156.6 1405,155.2 1406.5,156.5 1408,146.7 1409.5,143.3 1411,144.3 1412.5,143 1414,143.3 1415.5,138.7 1417,142.7 1418.5,143.4 1420,143 1421.5,141.2 1423,138.7 1424.5,144.8 1426,139 1427.5,139.3 1429,140.2 1430.5,137.1 1432,138 1433.5,139.8 1435,141.8 1436.5,140.1 1438,140.4 1439.5,140.6 1441,141 1442.5,137.7 1444,141.4 1445.5,139 1447,137.5 1448.5,137.4 1450,141.6 1451.5,140.2 1453,139 1454.5,142.7 1456,138.2 1457.5,141.7 1459,139.7 1460.5,141.9 1462,145 1463.5,140 1465,146.4 1466.5,140.8 1468,138.5 1469.5,137 1471,141.8 1472.5,139.3 1474,134.7 1475.5,137.8 1477,140.5 1478.5,139.8 1480,137 1481.5,138.2 1483,136.5 1484.5,139.9 1486,139 1487.5,140.8 1489,140.1 1490.5,140.6 1492,135.6 1493.5,137.6 1495,136.8 1496.5,136.2 1498,137.4 1499.5,141 1501,140.6 1502.5,141.9 1504,140.1 1505.5,140 1507,138.1 1508.5,138.4 1510,138.3 1511.5,137.4 1513,136.5 1514.5,139.2 1516,141.6 1517.5,137 1519,136.6 1520.5,139.5 1522,138.7 1523.5,135.8 1525,138.6 1526.5,134.4 1528,139.5 1529.5,135.6 1531,136.5 1532.5,139.3 1534,134.4 1535.5,141.7 1537,137.7 1538.5,139.9 1540,137.1 1541.5,139.8 1543,140.4 1544.5,140.6 1546,140.9 1547.5,136.7 1549,142.6 1550.5,142.3 1552,138.9 1553.5,139.5 1555,140.9 1556.5,135.8 1558,138.6 1559.5,139.9 1561,140 1562.5,140 1564,136.8 1565.5,140.9 1567,141.2 1568.5,139.9 1570,137.8 1571.5,137 1573,138.7 1574.5,139.7 1576,136.8 1577.5,138.1 1579,139.9 1580.5,139.8 1582,137.3 1583.5,135.1 1585,138.4" fill="none" stroke="#00e4e4" stroke-width="5" stroke-linejoin="round" />
<polyline points="49,191.5 50.5,188 52,187.7 53.5,180.9 55,188.5 56.5,188 58,187.6 59.5,189 61,184 62.5,186.7 64,187 65.5,187.7 67,189 68.5,189.5 70,186.3 71.5,186.6 73,189.8 74.5,191.2 76,188.4 77.5,187.3 79,190.4 80.5,188 82,189.7 83.5,191.1 85,189.6 86.5,188.6 88,189.7 89.5,187.4 91,193.3 92.5,189.6 94,188.2 95.5,187.7 97,188.1 98.5,187.6 100,187.9 101.5,186.6 103,184.9 104.5,184.3 106,177.3 107.5,181.8 109,178.9 110.5,181.5 112,185.6 113.5,187.5 115,189.9 116.5,186.6 118,188.8 119.5,186.2 121,185.6 122.5,186.5 124,189.5 125.5,189.7 127,190.3 128.5,189.4 130,189.2 131.5,188.7 133,190.6 134.5,189.5 136,188.3 137.5,189.2 139,185.8 140.5,194.2 142,187.2 143.5,188.4 145,192.2 146.5,187.1 148,187.6 149.5,191.2 151,188.3 152.5,187.8 154,189.4 155.5,189.3 157,189.5 158.5,189.1 160,190.8 161.5,190.2 163,189.5 164.5,187.3 166,187.3 167.5,185.3 169,189.7 170.5,185.4 172,190 173.5,191.6 175,186.7 176.5,187.3 178,187.7 179.5,189.9 181,186.1 182.5,188.3 184,187.6 185.5,188.1 187,190.7 188.5,186.9 190,188.6 191.5,191.6 193,187 194.5,186.4 196,190.4 197.5,189.2 199,190 200.5,188.6 202,185.7 203.5,187.4 205,189.9 206.5,188.6 208,188.4 209.5,191.5 211,192.2 212.5,188.4 214,191.8 215.5,185.1 217,185 218.5,190 220,188.1 221.5,189.5 223,189.4 224.5,188.3 226,189.7 227.5,188.8 229,185.9 230.5,188.9 232,188.8 233.5,191.6 235,186.6 236.5,188.5 238,187.8 239.5,188.3 241,191.3 242.5,189.1 244,187.7 245.5,188.8 247,189.8 248.5,186.8 250,188.1 251.5,189.5 253,190 254.5,188.4 256,187.7 257.5,185.7 259,188.8 260.5,190.1 262,189.1 263.5,188.7 265,186.3 266.5,188 268,189.4 269.5,188.9 271,187.6 272.5,189.4 274,190.1 275.5,187.3 277,187.6 278.5,187 280,186.5 281.5,189.8 283,189.3 284.5,187.5 286,188.9 287.5,186.6 289,188.2 290.5,187.6 292,188.4 293.5,186.9 295,189 296.5,191.9 298,196.4 299.5,189.9 301,186.8 302.5,187.7 304,184.8 305.5,186.1 307,182.7 308.5,181.1 310,176.3 311.5,179.4 313,176.4 314.5,178.2 316,168.7 317.5,167.8 319,162 320.5,163.7 322,158 323.5,155.9 325,152.9 326.5,148.3 328,146.9 329.5,147.8 331,149.1 332.5,143.7 334,143.6 335.5,144 337,140.7 338.5,140.2 340,142 341.5,142.4 343,141.5 344.5,144.6 346,144.2 347.5,142.2 349,144.2 350.5,144.3 352,138.6 353.5,140.5 355,143.1 356.5,138.7 358,143.1 359.5,138.7 361,138.6 362.5,138.9 364,141.1 365.5,142.9 367,140.9 368.5,140.7 370,137.4 371.5,140.6 373,140.2 374.5,141.4 376,140.7 377.5,138.1 379,142.1 380.5,138.4 382,141.3 383.5,146.9 385,144.3 386.5,146.9 388,140.5 389.5,145.1 391,145.5 392.5,143.3 394,144.3 395.5,140.7 397,143.1 398.5,145.3 400,139.5 401.5,139.7 403,140.4 404.5,139.5 406,142.3 407.5,140.8 409,142.8 410.5,142.5 412,140.6 413.5,140.2 415,138.9 416.5,139.1 418,139.1 419.5,141.1 421,139 422.5,140.6 424,140.8 425.5,139.7 427,140.2 428.5,143 430,143.8 431.5,139.2 433,140.2 434.5,139.9 436,140 437.5,143.1 439,141.7 440.5,142.6 442,143.5 443.5,139.8 445,140.2 446.5,140.6 448,142.2 449.5,138.7 451,141.6 452.5,142.5 454,142.5 455.5,141.3 457,139.2 458.5,137.9 460,142.4 461.5,141.3 463,138.9 464.5,139.6 466,139.7 467.5,137.7 469,140.9 470.5,139.2 472,140 473.5,141.8 475,140.3 476.5,141.4 478,140.9 479.5,140.6 481,140.6 482.5,143.7 484,140.2 485.5,143.3 487,139.5 488.5,144.4 490,147.2 491.5,150.5 493,150.5 494.5,164 496,164.1 497.5,169.3 499,175.6 500.5,179.1 502,182 503.5,182.6 505,181.7 506.5,186.7 508,184.4 509.5,186.9 511,187.9 512.5,189.3 514,187.2 515.5,187.2 517,187.5 518.5,184.9 520,186.9 521.5,186.5 523,186.3 524.5,184.5 526,187.8 527.5,191.1 529,191 530.5,185.2 532,188.7 533.5,186.8 535,189.4 536.5,188.7 538,190.1 539.5,189 541,189.8 542.5,188 544,184.2 545.5,186.5 547,187 548.5,187.7 550,186.8 551.5,191.3 553,188.2 554.5,190.7 556,187.9 557.5,191.3 559,186.5 560.5,189.5 562,186.2 563.5,189.3 565,191.2 566.5,185.7 568,187 569.5,188.9 571,188.2 572.5,186.2 574,190.5 575.5,188.6 577,190.7 578.5,189 580,186.5 581.5,187.7 583,193.2 584.5,186.1 586,183.4 587.5,187.3 589,190.2 590.5,189.9 592,186 593.5,192 595,188.2 596.5,188.5 598,188.5 599.5,188.1 601,186.9 602.5,187.9 604,190.7 605.5,186.2 607,184.4 608.5,189.4 610,189.1 611.5,189.7 613,191.4 614.5,187.3 616,188.8 617.5,189.4 619,190.6 620.5,194.8 622,187.1 623.5,186.2 625,188 626.5,185.8 628,190.4 629.5,187.8 631,187.9 632.5,187 634,191 635.5,188.7 637,187 638.5,187.5 640,184.3 641.5,182.9 643,184 644.5,179.2 646,182 647.5,184.4 649,187.8 650.5,188.4 652,189.3 653.5,187.3 655,189 656.5,186.7 658,189.6 659.5,188.6 661,189.4 662.5,187.6 664,187.1 665.5,186.9 667,190.4 668.5,188.1 670,188.1 671.5,185.5 673,188.4 674.5,182.6 676,190.8 677.5,188.1 679,188.5 680.5,186.1 682,186.6 683.5,189.5 685,188.1 686.5,189.2 688,190.7 689.5,189.6 691,185.3 692.5,186.8 694,186.6 695.5,187 697,185 698.5,185 700,187.2 701.5,187.5 703,189.4 704.5,187.9 706,192.8 707.5,185.4 709,186.1 710.5,188.9 712,188 713.5,186.8 715,189.8 716.5,190.3 718,190.7 719.5,187.8 721,188.5 722.5,188.9 724,188.6 725.5,190.2 727,189.1 728.5,189.1 730,184.7 731.5,189.4 733,191.3 734.5,188.5 736,190.3 737.5,185.7 739,187.9 740.5,185.9 742,189 743.5,189.4 745,186.2 746.5,187.1 748,187.5 749.5,192.6 751,188.4 752.5,188.7 754,189.1 755.5,189 757,188.1 758.5,187.1 760,187.3 761.5,191.3 763,188.9 764.5,187.9 766,183.8 767.5,188.4 769,188.6 770.5,187.4 772,190 773.5,187.5 775,188.2 776.5,189.9 778,188.9 779.5,190.4 781,188.1 782.5,187.8 784,189.3 785.5,188.9 787,190.5 788.5,189.2 790,188.5 791.5,190.9 793,189.6 794.5,186.6 796,188.3 797.5,187.9 799,190.5 800.5,187.7 802,190.3 803.5,186.3 805,188.4 806.5,190.3 808,188 809.5,190.4 811,185 812.5,188.5 814,188.8 815.5,188.3 817,185.9 818.5,189.6 820,184.5 821.5,190 823,188.9 824.5,194.3 826,187.8 827.5,186.3 829,187.2 830.5,187.2 832,188.8 833.5,187 835,188 836.5,187.7 838,188.8 839.5,182.3 841,184.2 842.5,185 844,182.7 845.5,181.1 847,178.5 848.5,176.6 850,174.5 851.5,170.7 853,167.6 854.5,163.6 856,161.7 857.5,161.6 859,154.8 860.5,155.5 862,155 863.5,150.2 865,152.3 866.5,147.1 868,148.8 869.5,143 871,142.3 872.5,144.4 874,146.5 875.5,141.9 877,143.4 878.5,140.6 880,140.6 881.5,142.7 883,141.4 884.5,141.1 886,143.6 887.5,139.4 889,140.1 890.5,142.1 892,145.1 893.5,140.5 895,144.8 896.5,140.8 898,144.5 899.5,139.9 901,140.4 902.5,140.9 904,142.1 905.5,144.5 907,138.7 908.5,138 910,141.2 911.5,141.9 913,137.4 914.5,140.4 916,143.5 917.5,141.5 919,143.8 920.5,145.1 922,145.3 923.5,145.3 925,145.1 926.5,146.7 928,143.2 929.5,146.7 931,144.9 932.5,141.4 934,141.2 935.5,140.1 937,139.5 938.5,144.4 940,138.8 941.5,143.9 943,142 944.5,140.8 946,140.2 947.5,141.1 949,140.6 950.5,142.2 952,139.2 953.5,141 955,141.5 956.5,140.3 958,140.3 959.5,141.6 961,141.6 962.5,140.5 964,140.7 965.5,139.7 967,141.6 968.5,140.5 970,138 971.5,140.1 973,141.7 974.5,141.1 976,139.2 977.5,141.9 979,141.7 980.5,141.7 982,143.2 983.5,140.1 985,141.7 986.5,140.2 988,142.3 989.5,142.6 991,141.4 992.5,141.9 994,139.4 995.5,141.7 997,138.6 998.5,144.3 1000,142.6 1001.5,138 1003,136.1 1004.5,142.8 1006,139.1 1007.5,141.5 1009,138.4 1010.5,140.7 1012,139.5 1013.5,141.6 1015,140 1016.5,143.1 1018,139.3 1019.5,142.7 1021,140.5 1022.5,141.4 1024,139.4 1025.5,142.3 1027,151.9 1028.5,151.9 1030,159.1 1031.5,164 1033,167.8 1034.5,178.1 1036,175.6 1037.5,178.9 1039,184.1 1040.5,182.5 1042,186.2 1043.5,186.8 1045,188.9 1046.5,187.6 1048,184.1 1049.5,186.4 1051,187 1052.5,193.2 1054,188.6 1055.5,187.3 1057,188.9 1058.5,187.7 1060,189.9 1061.5,188.6 1063,190.3 1064.5,189 1066,190.1 1067.5,188.4 1069,189.7 1070.5,188.2 1072,189.6 1073.5,188.9 1075,188.3 1076.5,187.8 1078,188 1079.5,189.3 1081,184.6 1082.5,190.6 1084,184.5 1085.5,188.2 1087,187.9 1088.5,189.8 1090,188.9 1091.5,188.4 1093,188.6 1094.5,190.1 1096,192.5 1097.5,189.1 1099,185 1100.5,187.8 1102,189.2 1103.5,194.1 1105,187.2 1106.5,187.9 1108,189.5 1109.5,189 1111,186.2 1112.5,190.1 1114,186.3 1115.5,188 1117,190.8 1118.5,183.3 1120,187.9 1121.5,191.3 1123,188.1 1124.5,186.7 1126,187.5 1127.5,189.9 1129,187.9 1130.5,187.4 1132,186 1133.5,186.5 1135,190.7 1136.5,187.5 1138,187.8 1139.5,189.2 1141,187.3 1142.5,187.6 1144,190.4 1145.5,190 1147,187.1 1148.5,189.7 1150,191 1151.5,189.3 1153,189.4 1154.5,186.4 1156,188.3 1157.5,185.3 1159,190.4 1160.5,188.2 1162,190.8 1163.5,187.2 1165,190 1166.5,185.8 1168,187.8 1169.5,189.4 1171,189 1172.5,188.1 1174,184.9 1175.5,188.7 1177,185.5 1178.5,183.8 1180,181.9 1181.5,179 1183,181.8 1184.5,188.1 1186,184.4 1187.5,188.1 1189,187.2 1190.5,191.4 1192,189.5 1193.5,186.7 1195,187.5 1196.5,186.1 1198,184.6 1199.5,184.1 1201,187.2 1202.5,186.6 1204,188.8 1205.5,187.1 1207,188.9 1208.5,191.5 1210,186.5 1211.5,186.4 1213,190.2 1214.5,192.5 1216,187 1217.5,185.6 1219,188 1220.5,187.8 1222,185.2 1223.5,186.7 1225,188 1226.5,188 1228,185.8 1229.5,185.8 1231,189.3 1232.5,189.4 1234,187.1 1235.5,191.2 1237,190.1 1238.5,189.3 1240,188.4 1241.5,189.1 1243,189.7 1244.5,190 1246,188.6 1247.5,184.9 1249,188.5 1250.5,187.1 1252,186.4 1253.5,189.5 1255,185.4 1256.5,189.9 1258,187.4 1259.5,186.4 1261,187 1262.5,192.5 1264,191 1265.5,188 1267,190.3 1268.5,191.6 1270,188.2 1271.5,188 1273,190.1 1274.5,189.2 1276,187.8 1277.5,191.3 1279,189.4 1280.5,189.9 1282,192.6 1283.5,189.3 1285,194.3 1286.5,189 1288,188.2 1289.5,188.7 1291,190 1292.5,190.1 1294,191.6 1295.5,185.9 1297,186.6 1298.5,188 1300,189.7 1301.5,191 1303,184.3 1304.5,190.4 1306,187.7 1307.5,188.3 1309,188.8 1310.5,188.5 1312,186.2 1313.5,190.2 1315,189.8 1316.5,187.7 1318,188.3 1319.5,187.3 1321,186 1322.5,189.6 1324,187.3 1325.5,186.5 1327,187.4 1328.5,191.3 1330,189.2 1331.5,188.9 1333,188.6 1334.5,190 1336,189.7 1337.5,186.2 1339,188 1340.5,187.3 1342,188.8 1343.5,188.3 1345,185 1346.5,190.4 1348,188.9 1349.5,185.4 1351,190.4 1352.5,188.6 1354,189.2 1355.5,188.4 1357,188.6 1358.5,187.4 1360,185.4 1361.5,187.2 1363,188.5 1364.5,188.1 1366,189.1 1367.5,187.6 1369,183.7 1370.5,188.6 1372,185.5 1373.5,184.1 1375,185.3 1376.5,182.7 1378,184.7 1379.5,181.2 1381,184.7 1382.5,179.1 1384,176.4 1385.5,173.9 1387,168.6 1388.5,168 1390,165.1 1391.5,162.7 1393,156.2 1394.5,153.4 1396,156.8 1397.5,151.5 1399,151.6 1400.5,149.4 1402,145.9 1403.5,145.4 1405,147.5 1406.5,144.8 1408,141.7 1409.5,140.2 1411,146.9 1412.5,143.3 1414,139.5 1415.5,142.3 1417,143 1418.5,141.9 1420,138.3 1421.5,144.5 1423,142.3 1424.5,140.9 1426,142.3 1427.5,140.7 1429,140.4 1430.5,142.5 1432,143.7 1433.5,142.6 1435,141.5 1436.5,142.1 1438,145.7 1439.5,143.4 1441,143.2 1442.5,142.2 1444,140.1 1445.5,141.9 1447,140 1448.5,139.3 1450,142 1451.5,142.2 1453,144.2 1454.5,139 1456,144.3 1457.5,145.1 1459,144.6 1460.5,150.5 1462,143 1463.5,144.8 1465,143.1 1466.5,143.1 1468,140.8 1469.5,141.6 1471,142.6 1472.5,141.3 1474,141.5 1475.5,132.4 1477,143.4 1478.5,139.4 1480,140.6 1481.5,141.6 1483,140.3 1484.5,141.9 1486,140.9 1487.5,143.5 1489,137.8 1490.5,141.3 1492,139.2 1493.5,141.4 1495,142.3 1496.5,141.3 1498,139 1499.5,139.6 1501,140.2 1502.5,140.6 1504,138.2 1505.5,143.8 1507,140.4 1508.5,140.8 1510,139.8 1511.5,140.5 1513,143.9 1514.5,138.9 1516,139.7 1517.5,138.8 1519,139.3 1520.5,143.2 1522,139.5 1523.5,139.8 1525,137.4 1526.5,139.9 1528,140.9 1529.5,139.7 1531,139.8 1532.5,141.9 1534,141.4 1535.5,140.4 1537,139.2 1538.5,138 1540,143.4 1541.5,137.9 1543,141.6 1544.5,140.2 1546,139.3 1547.5,142.1 1549,139.3 1550.5,142.7 1552,138.8 1553.5,141.4 1555,142.7 1556.5,138.9 1558,144.1 1559.5,143.1 1561,140.5 1562.5,150.9 1564,156.6 1565.5,157.7 1567,162.6 1568.5,168.4 1570,169.3 1571.5,177 1573,181.6 1574.5,181.1 1576,185.4 1577.5,188.4 1579,182.1 1580.5,183.1 1582,185.5 1583.5,188.2 1585,188" fill="none" stroke="#eeee00" stroke-width="5.4" stroke-linejoin="round" />
</g>
<rect x="757.3" y="53.7" width="535.8" height="211" fill="none" stroke="#d8d800" stroke-width="2.6" stroke-dasharray="5 3.2" opacity="0.85"/>
<path d="M757.3 54H1293" stroke="#a8a800" stroke-width="4.2" stroke-dasharray="6.5 4" />
<rect x="757" y="264.4" width="536.4" height="13.8" fill="#ffff00"/>
<path d="M853.7 45V278" stroke="#eeee00" stroke-width="3"/>
<path d="M862.8 45V278" stroke="#a8a800" stroke-width="4.2" stroke-dasharray="8 3.5"/>
<path d="M825.7 140.5L881.7 196.5M825.7 196.5L881.7 140.5" stroke="#d6d600" stroke-width="2.6" opacity="0.95" stroke-dasharray="9 2"/>
<path d="M837 126.5L891 180.5M837 180.5L891 126.5" stroke="#b0b000" stroke-width="2.4" opacity="0.75" stroke-dasharray="7 4"/>
<ellipse cx="830.6" cy="69.5" rx="19" ry="16" fill="#ff9c00"/>
<text x="832" y="80.5" font-size="34" fill="#241400" text-anchor="middle" font-weight="bold" class="fr" >b</text>
<polygon points="1375.3,45.5 1403.3,45.5 1389.3,72.5" fill="#ff9c00"/>
<path d="M49 140.4a11.5 21 0 0 1 0 42z" fill="#ff9c00"/>
<path d="M49 145.4a6.5 16 0 0 1 0 32z" fill="#ffe400"/>
<path d="M49 161.4H69" stroke="#ffff00" stroke-width="4"/>
<polygon points="68,148.4 87,161.4 68,174.4" fill="#ffff00"/>
<g clip-path="url(#cA2)">
<polyline points="49,836.4 50.5,828.2 52,843.5 53.5,835.6 55,834.1 56.5,831 58,842.5 59.5,830.4 61,840.8 62.5,833.6 64,837.2 65.5,835.6 67,840.5 68.5,841.5 70,830.6 71.5,843.3 73,841.5 74.5,843.4 76,846.1 77.5,828.1 79,848.2 80.5,827.4 82,833.1 83.5,839 85,843.3 86.5,840.8 88,839.2 89.5,840.3 91,830.5 92.5,837.1 94,852 95.5,822.1 97,835.6 98.5,836.4 100,831.7 101.5,836.2 103,830.4 104.5,835.5 106,836.5 107.5,830.5 109,840.6 110.5,833.2 112,830.4 113.5,849.6 115,833.6 116.5,834.1 118,825.5 119.5,839.4 121,830.7 122.5,832.8 124,841.5 125.5,840.2 127,832.6 128.5,840.3 130,839.6 131.5,836.2 133,831.4 134.5,844 136,827.8 137.5,839.4 139,837.1 140.5,829.6 142,830.7 143.5,852.1 145,824.8 146.5,837.6 148,835.1 149.5,839.9 151,839.1 152.5,842.7 154,841.6 155.5,837.1 157,828.7 158.5,835.4 160,840.3 161.5,840.2 163,844 164.5,836 166,829.9 167.5,833.7 169,823.7 170.5,842.9 172,843 173.5,841.7 175,829.5 176.5,834.5 178,840.3 179.5,839 181,842.2 182.5,829.6 184,840.7 185.5,820.4 187,834 188.5,837.4 190,834.9 191.5,842.2 193,835.7 194.5,837.1 196,841.1 197.5,831.7 199,846 200.5,833.1 202,840.6 203.5,838.3 205,834.5 206.5,837.6 208,838.9 209.5,834.2 211,850.2 212.5,830.9 214,837 215.5,843.8 217,840 218.5,843.5 220,827.8 221.5,835.6 223,837.2 224.5,844.6 226,832.1 227.5,836.7 229,848.3 230.5,839.3 232,836 233.5,836.6 235,844.1 236.5,825.8 238,832.1 239.5,833.6 241,837.8 242.5,837 244,824.2 245.5,837.7 247,831.9 248.5,854 250,835.4 251.5,843.4 253,833.7 254.5,835.5 256,831.9 257.5,842.1 259,845 260.5,829.4 262,840.1 263.5,841.7 265,845.3 266.5,834.2 268,846.5 269.5,830.5 271,839.2 272.5,835 274,836.2 275.5,844.5 277,841.2 278.5,855.5 280,837.5 281.5,833.5 283,845.1 284.5,839.5 286,835.3 287.5,845.9 289,846.8 290.5,829.1 292,835.8 293.5,845.2 295,833.4 296.5,848.3 298,838.1 299.5,840.6 301,839.1 302.5,831.4 304,837.1 305.5,833.8 307,835.5 308.5,844.6 310,842 311.5,836.6 313,839.7 314.5,847.2 316,837.8 317.5,835.6 319,842.4 320.5,834.6 322,830.6 323.5,849.3 325,831.2 326.5,838.9 328,838.8 329.5,836.1 331,849.4 332.5,849.7 334,840.6 335.5,828.7 337,840.3 338.5,827.4 340,841.4 341.5,843.1 343,839.9 344.5,845.7 346,839.1 347.5,832.3 349,835.1 350.5,844.5 352,824.3 353.5,839.1 355,829.5 356.5,851.3 358,827.8 359.5,822.9 361,842.5 362.5,842.1 364,832 365.5,835.3 367,827.9 368.5,835 370,841.3 371.5,837.9 373,835.8 374.5,832.5 376,843.2 377.5,847.7 379,845.6 380.5,828.8 382,838.2 383.5,832 385,835.1 386.5,839.9 388,854.1 389.5,839.4 391,837.6 392.5,834.4 394,841.2 395.5,827.4 397,842 398.5,843.1 400,831.8 401.5,847.6 403,854.2 404.5,832.8 406,842.6 407.5,834.7 409,833.3 410.5,842.8 412,839.8 413.5,829.6 415,828.2 416.5,838.9 418,828.7 419.5,829.6 421,842.9 422.5,834.6 424,840 425.5,850 427,829.7 428.5,846.9 430,829 431.5,837.9 433,844.3 434.5,852.5 436,827.1 437.5,848.2 439,819.7 440.5,838.7 442,841.1 443.5,849.5 445,852.9 446.5,840.3 448,833.9 449.5,832.8 451,823.9 452.5,827.8 454,844.2 455.5,826.7 457,829.7 458.5,833.8 460,832.9 461.5,831.8 463,830.9 464.5,833.5 466,846.4 467.5,841.8 469,838.2 470.5,833 472,838.2 473.5,839.1 475,832 476.5,830.2 478,838.9 479.5,832.7 481,832.5 482.5,837 484,836.7 485.5,831 487,847.2 488.5,839.1 490,836.1 491.5,841.7 493,845.8 494.5,837.3 496,821.2 497.5,829.5 499,836.7 500.5,838 502,845.9 503.5,840.3 505,835.4 506.5,842.3 508,833.3 509.5,843.3 511,827.5 512.5,846.9 514,836.2 515.5,842.5 517,835.8 518.5,828.5 520,835.9 521.5,837.5 523,838.7 524.5,837.9 526,839.7 527.5,833.7 529,826.7 530.5,834.4 532,828.6 533.5,836 535,835.3 536.5,837.2 538,833.2 539.5,839.8 541,839.1 542.5,839.2 544,836.8 545.5,838.6 547,838.7 548.5,831.7 550,814.8 551.5,821.5 553,832.1 554.5,805.6 556,816.4 557.5,808.7 559,818.2 560.5,808.4 562,801.3 563.5,800.1 565,786.8 566.5,806.4 568,795.7 569.5,782.7 571,781.8 572.5,785.9 574,775.1 575.5,770.8 577,777.6 578.5,767.7 580,767.1 581.5,766.5 583,751.9 584.5,762.7 586,755 587.5,738.9 589,733.7 590.5,739.2 592,737.7 593.5,728.6 595,728.9 596.5,726.5 598,723.1 599.5,725 601,729.5 602.5,729.1 604,710.1 605.5,712.1 607,706.3 608.5,706.2 610,703 611.5,711.6 613,706.9 614.5,695.3 616,704.9 617.5,696.9 619,693.1 620.5,693.6 622,685.7 623.5,681.3 625,686.1 626.5,687.5 628,680.1 629.5,690.3 631,682.2 632.5,673 634,679.1 635.5,671.2 637,674.3 638.5,674 640,671.5 641.5,676.3 643,666.2 644.5,666.3 646,659.7 647.5,650.6 649,654.5 650.5,657 652,638.8 653.5,654.7 655,653.4 656.5,656.2 658,650.6 659.5,654.2 661,646.7 662.5,643.3 664,648.5 665.5,641.9 667,651.8 668.5,635.9 670,651.1 671.5,638 673,637.8 674.5,633.5 676,637.9 677.5,639.1 679,628.7 680.5,626.3 682,636.2 683.5,627 685,639.6 686.5,642.7 688,632.1 689.5,654.6 691,621.6 692.5,628.2 694,645.9 695.5,637.1 697,630.9 698.5,633.6 700,642.2 701.5,643.4 703,633.2 704.5,626.6 706,629.6 707.5,637 709,632.8 710.5,634.4 712,634.3 713.5,641.6 715,629.7 716.5,630.8 718,618.5 719.5,630.2 721,620.4 722.5,626.4 724,631.5 725.5,627.4 727,630.4 728.5,617.4 730,628.6 731.5,632.2 733,631.2 734.5,633.7 736,626.9 737.5,635.3 739,627.8 740.5,629.6 742,637.4 743.5,640.1 745,636.5 746.5,624.6 748,629.4 749.5,628.5 751,632 752.5,641.3 754,638.5 755.5,624.3 757,633.7 758.5,633.2 760,627.6 761.5,629.3 763,638.8 764.5,630.8 766,630.8 767.5,629 769,611.3 770.5,632.5 772,637.4 773.5,644.3 775,646.3 776.5,626 778,632 779.5,628.8 781,633.9 782.5,625.6 784,633.8 785.5,636.1 787,636 788.5,634.6 790,638.4 791.5,630.9 793,629.6 794.5,631.9 796,630.5 797.5,634.6 799,638.7 800.5,631.8 802,622.3 803.5,637.7 805,635.9 806.5,637.3 808,637.2 809.5,618.4 811,639.4 812.5,651.7 814,635.2 815.5,634.3 817,652.2 818.5,632 820,630.3 821.5,644.3 823,631.6 824.5,641.8 826,634.8 827.5,636.5 829,633.2 830.5,642.1 832,639 833.5,638.7 835,637.4 836.5,637.4 838,648.6 839.5,648.2 841,650.4 842.5,638.8 844,649.7 845.5,638.2 847,659.1 848.5,661.8 850,659.8 851.5,653.7 853,652.7 854.5,646.7 856,641.2 857.5,650 859,655.4 860.5,639 862,631.9 863.5,636.1 865,636.1 866.5,633.7 868,625.9 869.5,627.5 871,635.9 872.5,646.4 874,625.6 875.5,634.7 877,631 878.5,634.3 880,632.3 881.5,638.5 883,632 884.5,627.6 886,633 887.5,632.4 889,636.9 890.5,651.3 892,635.4 893.5,632 895,630.8 896.5,630.2 898,633.1 899.5,639.3 901,641.1 902.5,628.3 904,630.8 905.5,631.9 907,643.2 908.5,626.9 910,632.7 911.5,617.9 913,634.4 914.5,626.5 916,632.2 917.5,643.5 919,623.9 920.5,618.1 922,634.7 923.5,628.4 925,635.4 926.5,641.4 928,626.3 929.5,624.3 931,627 932.5,621.7 934,627.3 935.5,638.9 937,627.3 938.5,623.1 940,634.8 941.5,635.6 943,619.5 944.5,632.9 946,629.3 947.5,634.9 949,627.6 950.5,629.7 952,625.6 953.5,646.1 955,636.1 956.5,637.3 958,637.2 959.5,633.6 961,640.9 962.5,636.4 964,649 965.5,638.5 967,643 968.5,625 970,629.8 971.5,630.4 973,624.1 974.5,629.9 976,630.1 977.5,626.2 979,638.1 980.5,629.6 982,633.8 983.5,623.8 985,631.8 986.5,628.4 988,628.5 989.5,639.5 991,635.6 992.5,626.9 994,627.5 995.5,638 997,628.5 998.5,632 1000,641.8 1001.5,640.9 1003,633.5 1004.5,633.1 1006,634.8 1007.5,632.2 1009,633.6 1010.5,640.9 1012,635.9 1013.5,635 1015,632.4 1016.5,639.2 1018,630.7 1019.5,636.5 1021,626.9 1022.5,631.5 1024,635.3 1025.5,629.7 1027,635 1028.5,634 1030,630.5 1031.5,637.3 1033,635 1034.5,630.8 1036,634.4 1037.5,638.6 1039,627.3 1040.5,625.9 1042,638.7 1043.5,627.3 1045,629.7 1046.5,619.6 1048,631.2 1049.5,634.2 1051,624.2 1052.5,635 1054,625 1055.5,630.2 1057,639.7 1058.5,645.2 1060,631.9 1061.5,640.5 1063,628.9 1064.5,638.4 1066,623.2 1067.5,635.6 1069,631.3 1070.5,626.7 1072,631.6 1073.5,630.8 1075,632 1076.5,636.8 1078,628.2 1079.5,628.3 1081,632.6 1082.5,629.5 1084,632.4 1085.5,625.4 1087,637.6 1088.5,626.9 1090,638.2 1091.5,637.9 1093,628.6 1094.5,636.9 1096,641.2 1097.5,631.5 1099,635.6 1100.5,627.6 1102,639.5 1103.5,634.3 1105,642.6 1106.5,638.9 1108,633.2 1109.5,627.9 1111,638.6 1112.5,640.1 1114,631.4 1115.5,639.1 1117,636 1118.5,631.8 1120,628.9 1121.5,632.9 1123,639.2 1124.5,627.7 1126,632.6 1127.5,632.7 1129,629.1 1130.5,627.6 1132,635.8 1133.5,639.7 1135,631.8 1136.5,626.4 1138,633.4 1139.5,631.2 1141,634.7 1142.5,626.6 1144,637.7 1145.5,629.9 1147,639.4 1148.5,632.4 1150,629.8 1151.5,631.4 1153,636 1154.5,635.9 1156,638.7 1157.5,625.2 1159,628.9 1160.5,631.7 1162,620.5 1163.5,630.7 1165,635.9 1166.5,629.2 1168,633 1169.5,629.8 1171,633 1172.5,627.1 1174,639.4 1175.5,638.5 1177,635 1178.5,644.4 1180,636.5 1181.5,632.9 1183,621.7 1184.5,627.6 1186,637.7 1187.5,643 1189,630.7 1190.5,638.9 1192,629.6 1193.5,632.1 1195,630 1196.5,631.6 1198,631 1199.5,635.6 1201,626.8 1202.5,643.6 1204,637.9 1205.5,622.6 1207,624.9 1208.5,652.4 1210,627.6 1211.5,637.3 1213,627.8 1214.5,652.3 1216,624.4 1217.5,644.1 1219,636.6 1220.5,631.6 1222,631.9 1223.5,628.2 1225,621.2 1226.5,637.2 1228,645.5 1229.5,632.2 1231,636.8 1232.5,639.4 1234,625.2 1235.5,631 1237,624.4 1238.5,637.8 1240,615.8 1241.5,642.8 1243,639.6 1244.5,628.4 1246,636.7 1247.5,635.2 1249,630.3 1250.5,632.9 1252,634.4 1253.5,622.8 1255,638.9 1256.5,630 1258,629 1259.5,637.7 1261,627.9 1262.5,643.7 1264,640.8 1265.5,634.1 1267,642.5 1268.5,643.6 1270,631.8 1271.5,622.9 1273,624.8 1274.5,630 1276,639.1 1277.5,638.1 1279,634 1280.5,646.6 1282,633.2 1283.5,638.7 1285,627.6 1286.5,630.5 1288,634.7 1289.5,640.6 1291,620.4 1292.5,642.2 1294,627.7 1295.5,640.4 1297,633 1298.5,625.8 1300,628.9 1301.5,646.6 1303,633.2 1304.5,631.2 1306,625 1307.5,627.3 1309,641.6 1310.5,643.2 1312,646 1313.5,637 1315,631.2 1316.5,627 1318,642.4 1319.5,630.8 1321,625.4 1322.5,639.5 1324,632.9 1325.5,640.3 1327,632.5 1328.5,641.8 1330,638.6 1331.5,634.6 1333,619.3 1334.5,620 1336,633.7 1337.5,637.6 1339,643.9 1340.5,622.9 1342,637.6 1343.5,637 1345,639.5 1346.5,634.5 1348,632.2 1349.5,633.1 1351,635.6 1352.5,640.2 1354,628.1 1355.5,630.1 1357,628.1 1358.5,633.4 1360,617.4 1361.5,641.6 1363,633.8 1364.5,626.7 1366,631.4 1367.5,630.6 1369,628.8 1370.5,631.7 1372,647.9 1373.5,649.5 1375,618.9 1376.5,631.9 1378,632.3 1379.5,622.7 1381,627.6 1382.5,627.2 1384,628.4 1385.5,618.4 1387,620.5 1388.5,633 1390,631.5 1391.5,632.1 1393,631.8 1394.5,621.2 1396,631.4 1397.5,625.3 1399,633.1 1400.5,625.9 1402,631.1 1403.5,622.6 1405,636 1406.5,627 1408,629.4 1409.5,622.2 1411,636 1412.5,633.2 1414,637.1 1415.5,622 1417,631.2 1418.5,627.1 1420,625.7 1421.5,630.1 1423,624.9 1424.5,635 1426,620.2 1427.5,622.1 1429,622.4 1430.5,631.6 1432,612.5 1433.5,616.8 1435,628.9 1436.5,634.2 1438,622.7 1439.5,628.8 1441,624 1442.5,628.5 1444,629.7 1445.5,615.3 1447,637.4 1448.5,626.1 1450,633 1451.5,632.3 1453,620.5 1454.5,636.8 1456,624.6 1457.5,621.3 1459,630.3 1460.5,640.8 1462,636.8 1463.5,612.7 1465,624.9 1466.5,627.9 1468,624.1 1469.5,621.6 1471,623.6 1472.5,620.5 1474,636.7 1475.5,628.5 1477,620.9 1478.5,628.5 1480,636.6 1481.5,625.2 1483,634.5 1484.5,619.8 1486,625.3 1487.5,643.9 1489,628.1 1490.5,619.8 1492,637 1493.5,626.4 1495,634.5 1496.5,627.6 1498,618.4 1499.5,638.9 1501,643.4 1502.5,618.5 1504,636 1505.5,629.1 1507,642.7 1508.5,635.8 1510,630.3 1511.5,618 1513,617.9 1514.5,627.1 1516,618.5 1517.5,628.9 1519,634.7 1520.5,631.2 1522,637.4 1523.5,634.3 1525,631.1 1526.5,625.9 1528,623.4 1529.5,626.4 1531,628.3 1532.5,636.1 1534,626.6 1535.5,622.6 1537,622 1538.5,621.5 1540,622.6 1541.5,640.3 1543,635.3 1544.5,637.7 1546,631.7 1547.5,626.7 1549,622.1 1550.5,619.9 1552,629.4 1553.5,633 1555,627.1 1556.5,624.8 1558,631.9 1559.5,621.2 1561,630.1 1562.5,626.4 1564,630.8 1565.5,618.4 1567,628.8 1568.5,627.6 1570,625.5 1571.5,634.7 1573,631.9 1574.5,633.1 1576,638.2 1577.5,622.8 1579,633.7 1580.5,617.4 1582,627.5 1583.5,621.1 1585,623.4" fill="none" stroke="#00e4e4" stroke-width="2.6" stroke-linejoin="round" />
<polyline points="49,855.7 50.5,855.3 52,862.9 53.5,847.7 55,860.9 56.5,844.7 58,854.6 59.5,854.5 61,863.4 62.5,855.9 64,852 65.5,865.1 67,866.6 68.5,851.5 70,873 71.5,839.7 73,857.1 74.5,857.7 76,847.6 77.5,856.4 79,849 80.5,849.5 82,853 83.5,842.9 85,846.3 86.5,857.5 88,860.3 89.5,861.6 91,852.9 92.5,860.6 94,866.3 95.5,863.8 97,846.9 98.5,844.5 100,858.7 101.5,864.2 103,855.8 104.5,862.3 106,857.6 107.5,857.5 109,858 110.5,857.5 112,853.2 113.5,868.2 115,854 116.5,852.3 118,854.1 119.5,849.1 121,859.2 122.5,846.6 124,853.8 125.5,860.9 127,859.7 128.5,859.8 130,848.2 131.5,861 133,855.1 134.5,864.7 136,854.2 137.5,867.1 139,858.7 140.5,860.9 142,853.4 143.5,853.3 145,853.5 146.5,862.6 148,853 149.5,855.2 151,863.7 152.5,859.4 154,854.3 155.5,857.9 157,846.7 158.5,846 160,858.9 161.5,874.2 163,869.3 164.5,872.6 166,859.8 167.5,858.6 169,863.1 170.5,848.1 172,837.1 173.5,858.8 175,862.8 176.5,860.7 178,866.2 179.5,861.1 181,858.3 182.5,849 184,855.1 185.5,848.2 187,853.6 188.5,868.6 190,857.4 191.5,858.5 193,851.4 194.5,873.2 196,842.9 197.5,849.9 199,862.2 200.5,851 202,850.8 203.5,859.4 205,860.9 206.5,854.2 208,850.3 209.5,861 211,848 212.5,849.9 214,849.4 215.5,858.2 217,853.7 218.5,849.7 220,856.2 221.5,849.2 223,862.8 224.5,853.9 226,852.3 227.5,849.4 229,847.8 230.5,863.3 232,842.4 233.5,858 235,850.7 236.5,851.3 238,854.7 239.5,855.8 241,852.3 242.5,863 244,852.3 245.5,848.8 247,848.1 248.5,862.3 250,859.7 251.5,853.7 253,866.9 254.5,857.8 256,854.1 257.5,859.4 259,848.7 260.5,856.7 262,848.5 263.5,859.8 265,860.2 266.5,855.3 268,863.1 269.5,851.4 271,859.6 272.5,855.2 274,848.4 275.5,860.5 277,867.2 278.5,876.4 280,856.6 281.5,859.2 283,867.3 284.5,849.1 286,866 287.5,845 289,848.4 290.5,854.5 292,853.5 293.5,862.4 295,849 296.5,855.2 298,853.7 299.5,857.1 301,860 302.5,862.2 304,858.1 305.5,858.5 307,856.3 308.5,845.7 310,843.9 311.5,858.4 313,846.8 314.5,850.8 316,857.4 317.5,853.7 319,850.7 320.5,850 322,856.2 323.5,871.6 325,844.8 326.5,854.4 328,862.3 329.5,857.7 331,852.1 332.5,844.4 334,858.7 335.5,862.7 337,845.5 338.5,850.3 340,857.8 341.5,858.9 343,857.6 344.5,858.7 346,861.8 347.5,859 349,873 350.5,851.6 352,853.6 353.5,846.4 355,859.9 356.5,857.6 358,855 359.5,848.4 361,869 362.5,858.8 364,861.5 365.5,847.1 367,858.2 368.5,859.3 370,867.4 371.5,859.9 373,863.1 374.5,845.7 376,854.6 377.5,856.6 379,855.4 380.5,854.1 382,853.9 383.5,864.6 385,865.3 386.5,860.9 388,860.6 389.5,853.7 391,856.9 392.5,840.3 394,852 395.5,863.2 397,851.8 398.5,842.4 400,862.4 401.5,847.4 403,864.9 404.5,855.8 406,847.4 407.5,851.4 409,866.3 410.5,857.2 412,855.4 413.5,857 415,854.8 416.5,851.7 418,860.1 419.5,865.7 421,856.6 422.5,866.5 424,863.3 425.5,846 427,860.6 428.5,864.8 430,842.7 431.5,852.3 433,859 434.5,850.1 436,855.9 437.5,853.7 439,849.4 440.5,854.6 442,852.6 443.5,855 445,855.1 446.5,850.7 448,849.9 449.5,851.1 451,870.8 452.5,848.4 454,864 455.5,849.2 457,867.6 458.5,853.6 460,852.1 461.5,851.6 463,858.3 464.5,856.4 466,849.2 467.5,856.5 469,858.5 470.5,856.7 472,864 473.5,839 475,854 476.5,851.3 478,858.5 479.5,868.1 481,846 482.5,849.4 484,852.8 485.5,859.5 487,858.5 488.5,845 490,853.6 491.5,845.8 493,851.1 494.5,842.8 496,843.2 497.5,836.6 499,827.4 500.5,823.7 502,829.8 503.5,818.4 505,813.1 506.5,814.8 508,815.8 509.5,813.5 511,801.1 512.5,801.2 514,802.4 515.5,791.1 517,798.5 518.5,790.2 520,779.6 521.5,787.4 523,778.4 524.5,787.7 526,773.4 527.5,781.5 529,783.7 530.5,770.1 532,767.5 533.5,759.7 535,760.9 536.5,763.5 538,769.5 539.5,762.4 541,747 542.5,758.8 544,743.8 545.5,758.5 547,752.3 548.5,745.3 550,731.4 551.5,741 553,729.7 554.5,738.7 556,728 557.5,715.5 559,724 560.5,723.3 562,724 563.5,711.6 565,710.1 566.5,720.2 568,717.7 569.5,696.5 571,709.4 572.5,710.5 574,697.4 575.5,706.6 577,696.6 578.5,693.8 580,686.4 581.5,701.5 583,684 584.5,667 586,677.1 587.5,679.6 589,673.7 590.5,690.2 592,672.1 593.5,673.4 595,675 596.5,677 598,661.6 599.5,657.4 601,661.4 602.5,670 604,662.9 605.5,667.4 607,656.9 608.5,667.1 610,661.2 611.5,658.8 613,661.3 614.5,659.8 616,658.9 617.5,647.1 619,658.7 620.5,655.5 622,659 623.5,657.4 625,661.4 626.5,658.2 628,665 629.5,658.2 631,654.5 632.5,654.9 634,660.6 635.5,649.1 637,653.4 638.5,650.6 640,643.1 641.5,657.4 643,658.2 644.5,649.9 646,650.7 647.5,655.5 649,662.9 650.5,650.5 652,663.5 653.5,659.6 655,638 656.5,649.2 658,653 659.5,647.8 661,656.2 662.5,651.5 664,652.5 665.5,647.4 667,637.2 668.5,651 670,641.5 671.5,653.7 673,649.7 674.5,667.1 676,650.5 677.5,636.1 679,662.7 680.5,651.1 682,655.4 683.5,656.9 685,641.4 686.5,640.7 688,647.6 689.5,640.1 691,634.9 692.5,642.3 694,645.3 695.5,650.8 697,643.3 698.5,641.7 700,648.9 701.5,647 703,651.3 704.5,638.1 706,659.9 707.5,638.9 709,653.6 710.5,652.7 712,641.6 713.5,646.2 715,643.4 716.5,651.2 718,653.2 719.5,647 721,648.6 722.5,642.7 724,652 725.5,651.7 727,646 728.5,641 730,654.3 731.5,641.6 733,644.2 734.5,642.7 736,649.7 737.5,647.5 739,639.4 740.5,644.7 742,644.1 743.5,654.1 745,663.7 746.5,659.4 748,653.1 749.5,658.8 751,645.5 752.5,646.3 754,641 755.5,655.6 757,645.8 758.5,643 760,652.4 761.5,648.9 763,655.5 764.5,647.8 766,645.3 767.5,649.4 769,648.8 770.5,655.2 772,647.5 773.5,646.7 775,650.4 776.5,641.5 778,646.2 779.5,654.4 781,643.6 782.5,656.5 784,645.7 785.5,648.1 787,653.1 788.5,650.5 790,641.6 791.5,639.3 793,651.2 794.5,643.5 796,647.8 797.5,653.9 799,648.5 800.5,646.5 802,643.1 803.5,651.7 805,666.6 806.5,645.6 808,642.6 809.5,650 811,660.9 812.5,651.5 814,653 815.5,653.7 817,655.7 818.5,648.8 820,647.2 821.5,655.8 823,661.7 824.5,647.2 826,657.8 827.5,659 829,659.2 830.5,664.3 832,660.3 833.5,671.4 835,662.1 836.5,659.3 838,669 839.5,676.1 841,693.4 842.5,675.5 844,690 845.5,670 847,685.7 848.5,687 850,674.4 851.5,678.3 853,667.6 854.5,663.6 856,663.3 857.5,666.9 859,648.4 860.5,668.1 862,655.5 863.5,651.4 865,661.2 866.5,654 868,669.1 869.5,652.8 871,650.6 872.5,648.7 874,660.6 875.5,646.6 877,642 878.5,634.7 880,640.9 881.5,651.2 883,645.5 884.5,658.7 886,640.3 887.5,649.5 889,640.7 890.5,648.8 892,644.8 893.5,646.4 895,637 896.5,655.5 898,644.7 899.5,645.8 901,645.3 902.5,645.7 904,657.4 905.5,656.3 907,650.5 908.5,642.2 910,650.2 911.5,646.2 913,633.9 914.5,644.8 916,650.2 917.5,644.4 919,646.9 920.5,655.6 922,656.2 923.5,637 925,652 926.5,650.5 928,652.2 929.5,646.1 931,651.1 932.5,635.6 934,647.3 935.5,654.4 937,641.2 938.5,646.2 940,644.7 941.5,650.9 943,657.2 944.5,646.7 946,662.9 947.5,646.2 949,655.5 950.5,653.6 952,642.2 953.5,643.8 955,650.4 956.5,642.7 958,640.5 959.5,648.2 961,640 962.5,649.1 964,646.9 965.5,653.6 967,657.1 968.5,638.6 970,647.7 971.5,655.2 973,667.6 974.5,650.6 976,651.6 977.5,646.3 979,666.2 980.5,647.8 982,653.9 983.5,656.2 985,641.7 986.5,641.1 988,641.8 989.5,650.3 991,655.4 992.5,645.2 994,662.8 995.5,645.7 997,652.4 998.5,649.1 1000,643.2 1001.5,647.8 1003,649.5 1004.5,641 1006,649.6 1007.5,643.6 1009,656.7 1010.5,642.8 1012,642.7 1013.5,644 1015,652.8 1016.5,659.1 1018,642.3 1019.5,654.6 1021,655.4 1022.5,648 1024,655 1025.5,654.3 1027,647.1 1028.5,637 1030,651.2 1031.5,647.9 1033,651.6 1034.5,654.2 1036,664.2 1037.5,648.6 1039,657.5 1040.5,652.5 1042,647.6 1043.5,644.7 1045,641.8 1046.5,637.6 1048,654 1049.5,654.7 1051,646 1052.5,656.5 1054,652 1055.5,650.8 1057,645.7 1058.5,646.5 1060,656.1 1061.5,654.4 1063,648.5 1064.5,657.3 1066,654.5 1067.5,642.9 1069,661.1 1070.5,651.1 1072,665.3 1073.5,646.6 1075,637.9 1076.5,656.2 1078,663.8 1079.5,650.5 1081,653.5 1082.5,666.5 1084,659.1 1085.5,658 1087,649.2 1088.5,648 1090,643.8 1091.5,645.4 1093,651.7 1094.5,655.8 1096,664.9 1097.5,662.8 1099,654.4 1100.5,653.9 1102,655.6 1103.5,651.9 1105,663.1 1106.5,648.3 1108,650.7 1109.5,643.2 1111,643.6 1112.5,655.5 1114,659.3 1115.5,658.7 1117,659 1118.5,646.4 1120,665 1121.5,656.3 1123,650.5 1124.5,652.8 1126,647.1 1127.5,647.9 1129,654.5 1130.5,650.2 1132,654 1133.5,654.1 1135,642.3 1136.5,661.4 1138,666.4 1139.5,648.3 1141,656 1142.5,659.4 1144,653 1145.5,654.3 1147,648.5 1148.5,649.8 1150,654.8 1151.5,661.4 1153,665 1154.5,659.7 1156,655.1 1157.5,652.3 1159,658.6 1160.5,650.8 1162,660.9 1163.5,663.1 1165,656.5 1166.5,656.5 1168,660 1169.5,650.4 1171,651.8 1172.5,659.2 1174,645.8 1175.5,642.2 1177,647.3 1178.5,657.3 1180,654.9 1181.5,652.6 1183,653 1184.5,646.6 1186,653 1187.5,648.9 1189,659.3 1190.5,653 1192,657.6 1193.5,656.3 1195,652.4 1196.5,650.4 1198,649.3 1199.5,657.1 1201,657.3 1202.5,646.9 1204,650.9 1205.5,654.9 1207,653.4 1208.5,659.3 1210,654.1 1211.5,661.8 1213,648.7 1214.5,656.5 1216,651 1217.5,647 1219,633.6 1220.5,650.7 1222,652.9 1223.5,655.4 1225,660.2 1226.5,654.8 1228,650.7 1229.5,646.5 1231,649.4 1232.5,654.5 1234,641.5 1235.5,644 1237,651.8 1238.5,661.6 1240,653.1 1241.5,657.4 1243,650.5 1244.5,644.9 1246,648.6 1247.5,645.2 1249,648.7 1250.5,652.2 1252,653.7 1253.5,665 1255,661.3 1256.5,640.2 1258,643.7 1259.5,656.8 1261,651.6 1262.5,655.2 1264,656.4 1265.5,659.4 1267,637.3 1268.5,645.1 1270,637 1271.5,661.3 1273,652.3 1274.5,649.1 1276,651.9 1277.5,657.1 1279,653 1280.5,641.7 1282,655.2 1283.5,659.4 1285,649 1286.5,653.4 1288,645.2 1289.5,662.5 1291,644.2 1292.5,648.7 1294,663.5 1295.5,652.9 1297,654.5 1298.5,643.5 1300,654.5 1301.5,647.2 1303,651.2 1304.5,653.6 1306,646.3 1307.5,633.1 1309,660.8 1310.5,650.2 1312,646.1 1313.5,660.5 1315,660.5 1316.5,652.5 1318,661.4 1319.5,654.2 1321,648.4 1322.5,648.6 1324,658 1325.5,651.3 1327,645.9 1328.5,652.8 1330,654.7 1331.5,649.7 1333,654.1 1334.5,660.1 1336,651.7 1337.5,659.5 1339,652.4 1340.5,656.5 1342,650.9 1343.5,651.3 1345,642.6 1346.5,653 1348,625.9 1349.5,645.6 1351,645.9 1352.5,645.9 1354,658.2 1355.5,643.2 1357,651 1358.5,653 1360,656 1361.5,654.1 1363,653.1 1364.5,653.9 1366,662.4 1367.5,642 1369,640.6 1370.5,651 1372,651.5 1373.5,656.4 1375,650.7 1376.5,657.6 1378,637.7 1379.5,646.6 1381,654.2 1382.5,648.6 1384,655.5 1385.5,648.6 1387,648.4 1388.5,657.7 1390,659.5 1391.5,657.2 1393,672 1394.5,664 1396,672.9 1397.5,658.4 1399,683.9 1400.5,692.3 1402,690.9 1403.5,686.8 1405,702.6 1406.5,702.1 1408,700.3 1409.5,704.2 1411,718 1412.5,714.4 1414,719.8 1415.5,736.2 1417,739.3 1418.5,746.9 1420,741.2 1421.5,752.8 1423,768.3 1424.5,758.6 1426,761.5 1427.5,774.9 1429,778.8 1430.5,770.1 1432,786 1433.5,792.2 1435,781.4 1436.5,782.5 1438,809.5 1439.5,801.9 1441,805.6 1442.5,812.5 1444,805.2 1445.5,824.6 1447,828.7 1448.5,822.2 1450,818.4 1451.5,820.1 1453,827.8 1454.5,828.3 1456,831 1457.5,827.7 1459,834.2 1460.5,832 1462,830.7 1463.5,831.5 1465,830.2 1466.5,846.1 1468,832.4 1469.5,840.7 1471,844.6 1472.5,848.4 1474,843.6 1475.5,852.3 1477,845.9 1478.5,847 1480,846 1481.5,842.7 1483,846.8 1484.5,849.1 1486,851.3 1487.5,861.9 1489,840.4 1490.5,847.7 1492,845.7 1493.5,856.1 1495,857.9 1496.5,849.7 1498,847.3 1499.5,858.4 1501,853 1502.5,841.7 1504,848.1 1505.5,853.4 1507,846.7 1508.5,869.8 1510,846.4 1511.5,851.4 1513,853.6 1514.5,853.8 1516,846.4 1517.5,849.3 1519,854.4 1520.5,856.8 1522,856.9 1523.5,853.1 1525,851 1526.5,853.6 1528,850.2 1529.5,844 1531,845.4 1532.5,856.4 1534,862 1535.5,850.5 1537,857.2 1538.5,850.1 1540,848.9 1541.5,860.3 1543,849.1 1544.5,842.1 1546,848.6 1547.5,853.3 1549,863.2 1550.5,853.6 1552,857.6 1553.5,844.9 1555,857.8 1556.5,839.9 1558,859.1 1559.5,857 1561,867.1 1562.5,854.3 1564,857.1 1565.5,851.6 1567,848.1 1568.5,854.2 1570,859.8 1571.5,844.7 1573,856.6 1574.5,864 1576,844 1577.5,846 1579,845.8 1580.5,839.6 1582,859.4 1583.5,850.9 1585,846.5" fill="none" stroke="#eeee00" stroke-width="2.8" stroke-linejoin="round" />
</g>
<path d="M529.8 302V1238.6" stroke="#eeee00" stroke-width="2.9"/>
<path d="M578 302V1238.6" stroke="#d4d400" stroke-width="2.5" stroke-dasharray="9 4.6"/>
<path d="M503 739.5L557 793.5M503 793.5L557 739.5" stroke="#d8d800" stroke-width="2.4" opacity="0.95" />
<path d="M550 676L600 726M550 726L600 676" stroke="#a8a800" stroke-width="2.2" opacity="0.8" />
<circle cx="503.4" cy="396.4" r="16.2" fill="#ffa000"/>
<text x="503.4" y="407" font-size="32" fill="#1c1000" text-anchor="middle" font-weight="normal" class="fs" >a</text>
<circle cx="549.7" cy="396.4" r="16.2" fill="#ffa000"/>
<text x="549.7" y="407" font-size="32" fill="#1c1000" text-anchor="middle" font-weight="normal" class="fs" >b</text>
<path d="M49 716a11.5 21 0 0 1 0 42z" fill="#ff9c00"/>
<path d="M49 721a6.5 16 0 0 1 0 32z" fill="#ffe400"/>
<path d="M49 737H69" stroke="#ffff00" stroke-width="4"/>
<polygon points="68,724 87,737 68,750" fill="#ffff00"/>
<polygon points="623.6,783.2 655.6,766.7 655.6,775.5 694,775.5 694,790.9 655.6,790.9 655.6,799.7" fill="#000" stroke="#fff" stroke-width="7" stroke-linejoin="miter"/>
<text x="706" y="819.8" font-size="86" fill="#fff" text-anchor="start" font-weight="normal" class="fs" textLength="392" lengthAdjust="spacingAndGlyphs" stroke="#000" stroke-width="1.6">358.233ps</text>
<rect x="49" y="1261" width="1537" height="8.4" fill="#c47800"/>
<rect x="49" y="1269.2" width="1537" height="6.6" fill="#5468a8"/>
<rect x="49" y="1979.5" width="1537" height="9.5" fill="#5468a8"/>
<rect x="49" y="1269" width="2.4" height="712" fill="#26315e"/>
<rect x="62.8" y="1283.6" width="751.4" height="247.6" rx="13" fill="none" stroke="#b4b4b4" stroke-width="2.4"/>
<rect x="85.6" y="1302" width="88.2" height="35.6" rx="17.8" fill="url(#gb)" stroke="#343434" stroke-width="3"/>
<rect x="88.6" y="1305.5" width="82.2" height="28.6" rx="14.3" fill="url(#gy)"/>
<text x="129.7" y="1328.4" font-size="24" fill="#111" text-anchor="middle" font-weight="bold" class="fs" >C1</text>
<rect x="85.6" y="1357.6" width="88.2" height="35.6" rx="17.8" fill="url(#gb)" stroke="#343434" stroke-width="3"/>
<rect x="88.6" y="1361.1" width="82.2" height="28.6" rx="14.3" fill="url(#gc)"/>
<text x="129.7" y="1384" font-size="24" fill="#111" text-anchor="middle" font-weight="bold" class="fs" >C2</text>
<rect x="85.6" y="1414" width="88.2" height="35.6" rx="17.8" fill="url(#gb)" stroke="#343434" stroke-width="3"/>
<rect x="88.6" y="1417.5" width="82.2" height="28.6" rx="14.3" fill="url(#gy)"/>
<text x="129.7" y="1440.4" font-size="24" fill="#111" text-anchor="middle" font-weight="bold" class="fs" >Z1C1</text>
<rect x="85.6" y="1470.4" width="88.2" height="35.6" rx="17.8" fill="url(#gb)" stroke="#343434" stroke-width="3"/>
<rect x="88.6" y="1473.9" width="82.2" height="28.6" rx="14.3" fill="url(#gc)"/>
<text x="129.7" y="1496.8" font-size="24" fill="#111" text-anchor="middle" font-weight="bold" class="fs" >Z1C2</text>
<text x="187" y="1328" font-size="32" fill="#fff" text-anchor="start" font-weight="bold" class="fs" >200.0m</text>
<text x="320" y="1328" font-size="32.4" fill="#a8a8a8" text-anchor="start" font-weight="bold" class="fs" >Offset:230.0mV</text>
<text x="575" y="1328" font-size="32" fill="#fff" text-anchor="start" font-weight="bold" class="fs" >50Ω</text>
<text x="663" y="1328" font-size="32" fill="#fff" font-weight="bold" class="fs"><tspan font-size="21" dy="-8">B</tspan><tspan font-size="27" dy="18" dx="-3">W</tspan><tspan dy="-10">:23.0G</tspan></text>
<path d="M689 1298l-3 9" stroke="#fff" stroke-width="2.2"/>
<text x="187" y="1383.6" font-size="32" fill="#fff" text-anchor="start" font-weight="bold" class="fs" >200.0m</text>
<text x="320" y="1383.6" font-size="32.4" fill="#a8a8a8" text-anchor="start" font-weight="bold" class="fs" >Offset:218.0mV</text>
<text x="575" y="1383.6" font-size="32" fill="#fff" text-anchor="start" font-weight="bold" class="fs" >50Ω</text>
<text x="663" y="1383.6" font-size="32" fill="#fff" font-weight="bold" class="fs"><tspan font-size="21" dy="-8">B</tspan><tspan font-size="27" dy="18" dx="-3">W</tspan><tspan dy="-10">:23.0G</tspan></text>
<path d="M689 1353.6l-3 9" stroke="#fff" stroke-width="2.2"/>
<text x="187" y="1440" font-size="32" fill="#fff" text-anchor="start" font-weight="bold" class="fs" >200.0mV</text>
<text x="468" y="1440" font-size="32" fill="#fff" text-anchor="start" font-weight="bold" class="fs" textLength="262" lengthAdjust="spacingAndGlyphs">-23.48ns-3.582ns</text>
<text x="187" y="1496.4" font-size="32" fill="#fff" text-anchor="start" font-weight="bold" class="fs" >200.0mV</text>
<text x="468" y="1496.4" font-size="32" fill="#fff" text-anchor="start" font-weight="bold" class="fs" textLength="262" lengthAdjust="spacingAndGlyphs">-23.48ns-3.582ns</text>
<rect x="826" y="1283.6" width="724" height="247" rx="13" fill="none" stroke="#b4b4b4" stroke-width="2.4"/>
<rect x="949.6" y="1300.3" width="228.4" height="224.3" fill="none" stroke="#b8b8b8" stroke-width="2.2"/>
<path d="M949.6 1356H1178M949.6 1412.3H1178M949.6 1468.5H1178" stroke="#b8b8b8" stroke-width="2.2" fill="none" />
<rect x="1298" y="1300.3" width="228" height="224.3" fill="none" stroke="#b8b8b8" stroke-width="2.2"/>
<path d="M1298 1356H1526M1298 1412.3H1526M1298 1468.5H1526" stroke="#b8b8b8" stroke-width="2.2" fill="none" />
<rect x="849" y="1307.2" width="91.4" height="36" rx="18" fill="url(#gb)" stroke="#343434" stroke-width="3"/>
<rect x="852" y="1310.7" width="85.4" height="29" rx="14.5" fill="url(#gy)"/>
<text x="894.7" y="1333.8" font-size="24" fill="#111" text-anchor="middle" font-weight="bold" class="fs" >V1</text>
<rect x="1197" y="1307.2" width="91.4" height="36" rx="18" fill="url(#gb)" stroke="#343434" stroke-width="3"/>
<rect x="1200" y="1310.7" width="85.4" height="29" rx="14.5" fill="url(#gy)"/>
<text x="1242.7" y="1333.8" font-size="24" fill="#111" text-anchor="middle" font-weight="bold" class="fs" >t1</text>
<text x="956.5" y="1335.6" font-size="32.4" fill="#fff" text-anchor="start" font-weight="bold" class="fs" >171.12mV</text>
<text x="1304.5" y="1335.6" font-size="32.4" fill="#fff" text-anchor="start" font-weight="bold" class="fs" >-19.922ns</text>
<rect x="849" y="1363.2" width="91.4" height="36" rx="18" fill="url(#gb)" stroke="#343434" stroke-width="3"/>
<rect x="852" y="1366.7" width="85.4" height="29" rx="14.5" fill="url(#gy)"/>
<text x="894.7" y="1389.8" font-size="24" fill="#111" text-anchor="middle" font-weight="bold" class="fs" >V2</text>
<rect x="1197" y="1363.2" width="91.4" height="36" rx="18" fill="url(#gb)" stroke="#343434" stroke-width="3"/>
<rect x="1200" y="1366.7" width="85.4" height="29" rx="14.5" fill="url(#gy)"/>
<text x="1242.7" y="1389.8" font-size="24" fill="#111" text-anchor="middle" font-weight="bold" class="fs" >t2</text>
<text x="956.5" y="1391.6" font-size="32.4" fill="#fff" text-anchor="start" font-weight="bold" class="fs" >307.44mV</text>
<text x="1304.5" y="1391.6" font-size="32.4" fill="#fff" text-anchor="start" font-weight="bold" class="fs" >-19.564ns</text>
<rect x="849" y="1419.4" width="91.4" height="36" rx="18" fill="url(#gb)" stroke="#343434" stroke-width="3"/>
<rect x="852" y="1422.9" width="85.4" height="29" rx="14.5" fill="url(#gy)"/>
<text x="894.7" y="1446" font-size="24" fill="#111" text-anchor="middle" font-weight="bold" class="fs" >ΔV</text>
<rect x="1197" y="1419.4" width="91.4" height="36" rx="18" fill="url(#gb)" stroke="#343434" stroke-width="3"/>
<rect x="1200" y="1422.9" width="85.4" height="29" rx="14.5" fill="url(#gy)"/>
<text x="1242.7" y="1446" font-size="24" fill="#111" text-anchor="middle" font-weight="bold" class="fs" >Δt</text>
<text x="956.5" y="1447.8" font-size="32.4" fill="#fff" text-anchor="start" font-weight="bold" class="fs" >136.32mV</text>
<text x="1304.5" y="1447.8" font-size="32.4" fill="#fff" text-anchor="start" font-weight="bold" class="fs" >358.233ps</text>
<rect x="849" y="1475.5" width="91.4" height="36" rx="18" fill="url(#gb)" stroke="#343434" stroke-width="3"/>
<rect x="852" y="1479" width="85.4" height="29" rx="14.5" fill="url(#gy)"/>
<text x="894.7" y="1501.8" font-size="23" fill="#111" text-anchor="middle" font-weight="bold" class="fs" >ΔV/Δt</text>
<rect x="1197" y="1475.5" width="91.4" height="36" rx="18" fill="url(#gb)" stroke="#343434" stroke-width="3"/>
<rect x="1200" y="1479" width="85.4" height="29" rx="14.5" fill="url(#gy)"/>
<text x="1242.7" y="1502.2" font-size="24" fill="#111" text-anchor="middle" font-weight="bold" class="fs" >1/Δt</text>
<text x="956.5" y="1504" font-size="32.4" fill="#fff" text-anchor="start" font-weight="bold" class="fs" >380.535MV/s</text>
<text x="1304.5" y="1504" font-size="32.4" fill="#fff" text-anchor="start" font-weight="bold" class="fs" >2.791GHz</text>
<rect x="63.4" y="1556.8" width="1514.2" height="388.2" rx="13" fill="none" stroke="#b4b4b4" stroke-width="2.4"/>
<rect x="535.2" y="1626.8" width="213.6" height="305" fill="#242424"/>
<rect x="936.8" y="1626.8" width="186.8" height="305" fill="#242424"/>
<path d="M346.8 1626.8H1570M346.8 1677.7H1570M346.8 1728.4H1570M346.8 1779.1H1570M346.8 1829.9H1570M346.8 1880.8H1570M346.8 1931.8H1570M347.8 1626.8V1931.8M535.2 1626.8V1931.8M748.8 1626.8V1931.8M936.8 1626.8V1931.8M1123.6 1626.8V1931.8M1311.8 1626.8V1931.8M1472 1626.8V1931.8M1569 1626.8V1931.8" stroke="#b4b4b4" stroke-width="2.2" fill="none" />
<text x="439.7" y="1606" font-size="32" fill="#fff" text-anchor="middle" font-weight="bold" class="fs" >Value</text>
<text x="640" y="1606" font-size="32" fill="#fff" text-anchor="middle" font-weight="bold" class="fs" >Mean</text>
<text x="840" y="1606" font-size="32" fill="#fff" text-anchor="middle" font-weight="bold" class="fs" >Min</text>
<text x="1028" y="1606" font-size="32" fill="#fff" text-anchor="middle" font-weight="bold" class="fs" >Max</text>
<text x="1217" y="1606" font-size="32" fill="#fff" text-anchor="middle" font-weight="bold" class="fs" >St Dev</text>
<text x="1390.6" y="1606" font-size="32" fill="#fff" text-anchor="middle" font-weight="bold" class="fs" >Count</text>
<text x="1518.5" y="1606" font-size="32" fill="#fff" text-anchor="middle" font-weight="bold" class="fs" >Info</text>
<rect x="86.6" y="1629.7" width="86.2" height="35.2" rx="17.6" fill="url(#gb)" stroke="#343434" stroke-width="3"/>
<rect x="89.6" y="1633.2" width="80.2" height="28.2" rx="14.1" fill="url(#gy)"/>
<text x="129.7" y="1655.9" font-size="24" fill="#111" text-anchor="middle" font-weight="bold" class="fs" >C1</text>
<text x="191.6" y="1658.9" font-size="33" fill="#fff" text-anchor="start" font-weight="bold" class="fs" >Freq</text>
<text x="352.2" y="1659.5" font-size="33" fill="#fff" text-anchor="start" font-weight="bold" class="fs" >50.1MHz</text>
<text x="539.6" y="1659.5" font-size="33" fill="#fff" text-anchor="start" font-weight="bold" class="fs" >50.099935M</text>
<text x="753.2" y="1659.5" font-size="33" fill="#fff" text-anchor="start" font-weight="bold" class="fs" >50.1M</text>
<text x="941.2" y="1659.5" font-size="33" fill="#fff" text-anchor="start" font-weight="bold" class="fs" >50.1M</text>
<text x="1128" y="1659.5" font-size="33" fill="#fff" text-anchor="start" font-weight="bold" class="fs" >0.0</text>
<text x="1316.2" y="1659.5" font-size="33" fill="#fff" text-anchor="start" font-weight="bold" class="fs" >1.0</text>
<rect x="86.6" y="1680.5" width="86.2" height="35.2" rx="17.6" fill="url(#gb)" stroke="#343434" stroke-width="3"/>
<rect x="89.6" y="1684" width="80.2" height="28.2" rx="14.1" fill="url(#gc)"/>
<text x="129.7" y="1706.7" font-size="24" fill="#111" text-anchor="middle" font-weight="bold" class="fs" >C2</text>
<text x="191.6" y="1709.7" font-size="33" fill="#fff" text-anchor="start" font-weight="bold" class="fs" >Freq</text>
<text x="352.2" y="1710.3" font-size="33" fill="#fff" text-anchor="start" font-weight="bold" class="fs" >50.14MHz</text>
<text x="539.6" y="1710.3" font-size="33" fill="#fff" text-anchor="start" font-weight="bold" class="fs" >50.135349M</text>
<text x="753.2" y="1710.3" font-size="33" fill="#fff" text-anchor="start" font-weight="bold" class="fs" >50.14M</text>
<text x="941.2" y="1710.3" font-size="33" fill="#fff" text-anchor="start" font-weight="bold" class="fs" >50.14M</text>
<text x="1128" y="1710.3" font-size="33" fill="#fff" text-anchor="start" font-weight="bold" class="fs" >0.0</text>
<text x="1316.2" y="1710.3" font-size="33" fill="#fff" text-anchor="start" font-weight="bold" class="fs" >1.0</text>
<rect x="86.6" y="1731.2" width="86.2" height="35.2" rx="17.6" fill="url(#gb)" stroke="#343434" stroke-width="3"/>
<rect x="89.6" y="1734.7" width="80.2" height="28.2" rx="14.1" fill="url(#gm)"/>
<text x="129.7" y="1757.4" font-size="24" fill="#111" text-anchor="middle" font-weight="bold" class="fs" >C3</text>
<text x="191.6" y="1760.4" font-size="33" fill="#fff" text-anchor="start" font-weight="bold" class="fs" >Freq*</text>
<text x="352.2" y="1761" font-size="33" fill="#fff" text-anchor="start" font-weight="bold" class="fs" >2.504GHz</text>
<text x="539.6" y="1761" font-size="33" fill="#fff" text-anchor="start" font-weight="bold" class="fs" >2.5040998G</text>
<text x="753.2" y="1761" font-size="33" fill="#fff" text-anchor="start" font-weight="bold" class="fs" >2.504G</text>
<text x="941.2" y="1761" font-size="33" fill="#fff" text-anchor="start" font-weight="bold" class="fs" >2.504G</text>
<text x="1128" y="1761" font-size="33" fill="#fff" text-anchor="start" font-weight="bold" class="fs" >0.0</text>
<text x="1316.2" y="1761" font-size="33" fill="#fff" text-anchor="start" font-weight="bold" class="fs" >1.0</text>
<circle cx="1531" cy="1754.2" r="14.5" fill="#4aa0e8" stroke="#d0e4f4" stroke-width="2"/>
<text x="1531" y="1764.2" font-size="27" fill="#e01818" text-anchor="middle" font-weight="bold" class="fs" >?</text>
<rect x="86.6" y="1781.9" width="86.2" height="35.2" rx="17.6" fill="url(#gb)" stroke="#343434" stroke-width="3"/>
<rect x="89.6" y="1785.4" width="80.2" height="28.2" rx="14.1" fill="url(#gy)"/>
<text x="129.7" y="1808.1" font-size="24" fill="#111" text-anchor="middle" font-weight="bold" class="fs" >C1</text>
<text x="191.6" y="1811.1" font-size="33" fill="#fff" text-anchor="start" font-weight="bold" class="fs" >Ampl</text>
<text x="352.2" y="1811.7" font-size="33" fill="#fff" text-anchor="start" font-weight="bold" class="fs" >424.0mV</text>
<text x="539.6" y="1811.7" font-size="33" fill="#fff" text-anchor="start" font-weight="bold" class="fs" >424.00001m</text>
<text x="753.2" y="1811.7" font-size="33" fill="#fff" text-anchor="start" font-weight="bold" class="fs" >424.0m</text>
<text x="941.2" y="1811.7" font-size="33" fill="#fff" text-anchor="start" font-weight="bold" class="fs" >424.0m</text>
<text x="1128" y="1811.7" font-size="33" fill="#fff" text-anchor="start" font-weight="bold" class="fs" >0.0</text>
<text x="1316.2" y="1811.7" font-size="33" fill="#fff" text-anchor="start" font-weight="bold" class="fs" >1.0</text>
<rect x="86.6" y="1832.8" width="86.2" height="35.2" rx="17.6" fill="url(#gb)" stroke="#343434" stroke-width="3"/>
<rect x="89.6" y="1836.2" width="80.2" height="28.2" rx="14.1" fill="url(#gc)"/>
<text x="129.7" y="1859" font-size="24" fill="#111" text-anchor="middle" font-weight="bold" class="fs" >C2</text>
<text x="191.6" y="1862" font-size="33" fill="#fff" text-anchor="start" font-weight="bold" class="fs" >Ampl</text>
<text x="352.2" y="1862.5" font-size="33" fill="#fff" text-anchor="start" font-weight="bold" class="fs" >424.0mV</text>
<text x="539.6" y="1862.5" font-size="33" fill="#fff" text-anchor="start" font-weight="bold" class="fs" >424.00001m</text>
<text x="753.2" y="1862.5" font-size="33" fill="#fff" text-anchor="start" font-weight="bold" class="fs" >424.0m</text>
<text x="941.2" y="1862.5" font-size="33" fill="#fff" text-anchor="start" font-weight="bold" class="fs" >424.0m</text>
<text x="1128" y="1862.5" font-size="33" fill="#fff" text-anchor="start" font-weight="bold" class="fs" >0.0</text>
<text x="1316.2" y="1862.5" font-size="33" fill="#fff" text-anchor="start" font-weight="bold" class="fs" >1.0</text>
<rect x="86.6" y="1883.7" width="86.2" height="35.2" rx="17.6" fill="url(#gb)" stroke="#343434" stroke-width="3"/>
<rect x="89.6" y="1887.2" width="80.2" height="28.2" rx="14.1" fill="url(#gm)"/>
<text x="129.7" y="1909.9" font-size="24" fill="#111" text-anchor="middle" font-weight="bold" class="fs" >C3</text>
<text x="191.6" y="1912.9" font-size="33" fill="#fff" text-anchor="start" font-weight="bold" class="fs" >Ampl</text>
<text x="352.2" y="1913.5" font-size="33" fill="#fff" text-anchor="start" font-weight="bold" class="fs" >27.2mV</text>
<text x="539.6" y="1913.5" font-size="33" fill="#fff" text-anchor="start" font-weight="bold" class="fs" >27.200002m</text>
<text x="753.2" y="1913.5" font-size="33" fill="#fff" text-anchor="start" font-weight="bold" class="fs" >27.2m</text>
<text x="941.2" y="1913.5" font-size="33" fill="#fff" text-anchor="start" font-weight="bold" class="fs" >27.2m</text>
<text x="1128" y="1913.5" font-size="33" fill="#fff" text-anchor="start" font-weight="bold" class="fs" >0.0</text>
<text x="1316.2" y="1913.5" font-size="33" fill="#fff" text-anchor="start" font-weight="bold" class="fs" >1.0</text>
<circle cx="1531" cy="1906.8" r="14.5" fill="#4aa0e8" stroke="#d0e4f4" stroke-width="2"/>
<text x="1531" y="1916.8" font-size="27" fill="#e01818" text-anchor="middle" font-weight="bold" class="fs" >?</text>
<text x="819" y="2088.8" font-size="84.5" letter-spacing="-1.6" text-anchor="middle" class="fr" fill="#000">(<tspan font-weight="bold">a</tspan>)</text>
<rect x="1676.2" y="24.2" width="1513.8" height="1975.4" fill="#000"/>
<path d="M1729 74.8v2.6M1729 107.1v2.6M1729 139.5v2.6M1729 171.9v2.6M1729 236.6v2.6M1729 269v2.6M1729 301.4v2.6M1729 333.7v2.6M1783 74.8v2.6M1783 107.1v2.6M1783 139.5v2.6M1783 171.9v2.6M1783 236.6v2.6M1783 269v2.6M1783 301.4v2.6M1783 333.7v2.6M1837.1 74.8v2.6M1837.1 107.1v2.6M1837.1 139.5v2.6M1837.1 171.9v2.6M1837.1 236.6v2.6M1837.1 269v2.6M1837.1 301.4v2.6M1837.1 333.7v2.6M1891.1 74.8v2.6M1891.1 107.1v2.6M1891.1 139.5v2.6M1891.1 171.9v2.6M1891.1 236.6v2.6M1891.1 269v2.6M1891.1 301.4v2.6M1891.1 333.7v2.6M1945.2 74.8v2.6M1945.2 107.1v2.6M1945.2 139.5v2.6M1945.2 171.9v2.6M1945.2 236.6v2.6M1945.2 269v2.6M1945.2 301.4v2.6M1945.2 333.7v2.6M1999.3 74.8v2.6M1999.3 107.1v2.6M1999.3 139.5v2.6M1999.3 171.9v2.6M1999.3 236.6v2.6M1999.3 269v2.6M1999.3 301.4v2.6M1999.3 333.7v2.6M2053.3 74.8v2.6M2053.3 107.1v2.6M2053.3 139.5v2.6M2053.3 171.9v2.6M2053.3 236.6v2.6M2053.3 269v2.6M2053.3 301.4v2.6M2053.3 333.7v2.6M2107.4 74.8v2.6M2107.4 107.1v2.6M2107.4 139.5v2.6M2107.4 171.9v2.6M2107.4 236.6v2.6M2107.4 269v2.6M2107.4 301.4v2.6M2107.4 333.7v2.6M2161.4 74.8v2.6M2161.4 107.1v2.6M2161.4 139.5v2.6M2161.4 171.9v2.6M2161.4 236.6v2.6M2161.4 269v2.6M2161.4 301.4v2.6M2161.4 333.7v2.6M2215.5 74.8v2.6M2215.5 107.1v2.6M2215.5 139.5v2.6M2215.5 171.9v2.6M2215.5 236.6v2.6M2215.5 269v2.6M2215.5 301.4v2.6M2215.5 333.7v2.6M2269.6 74.8v2.6M2269.6 107.1v2.6M2269.6 139.5v2.6M2269.6 171.9v2.6M2269.6 236.6v2.6M2269.6 269v2.6M2269.6 301.4v2.6M2269.6 333.7v2.6M2323.6 74.8v2.6M2323.6 107.1v2.6M2323.6 139.5v2.6M2323.6 171.9v2.6M2323.6 236.6v2.6M2323.6 269v2.6M2323.6 301.4v2.6M2323.6 333.7v2.6M2377.7 74.8v2.6M2377.7 107.1v2.6M2377.7 139.5v2.6M2377.7 171.9v2.6M2377.7 236.6v2.6M2377.7 269v2.6M2377.7 301.4v2.6M2377.7 333.7v2.6M2431.7 74.8v2.6M2431.7 107.1v2.6M2431.7 139.5v2.6M2431.7 171.9v2.6M2431.7 236.6v2.6M2431.7 269v2.6M2431.7 301.4v2.6M2431.7 333.7v2.6M2485.8 74.8v2.6M2485.8 107.1v2.6M2485.8 139.5v2.6M2485.8 171.9v2.6M2485.8 236.6v2.6M2485.8 269v2.6M2485.8 301.4v2.6M2485.8 333.7v2.6M2539.9 74.8v2.6M2539.9 107.1v2.6M2539.9 139.5v2.6M2539.9 171.9v2.6M2539.9 236.6v2.6M2539.9 269v2.6M2539.9 301.4v2.6M2539.9 333.7v2.6M2593.9 74.8v2.6M2593.9 107.1v2.6M2593.9 139.5v2.6M2593.9 171.9v2.6M2593.9 236.6v2.6M2593.9 269v2.6M2593.9 301.4v2.6M2593.9 333.7v2.6M2648 74.8v2.6M2648 107.1v2.6M2648 139.5v2.6M2648 171.9v2.6M2648 236.6v2.6M2648 269v2.6M2648 301.4v2.6M2648 333.7v2.6M2702 74.8v2.6M2702 107.1v2.6M2702 139.5v2.6M2702 171.9v2.6M2702 236.6v2.6M2702 269v2.6M2702 301.4v2.6M2702 333.7v2.6M2756.1 74.8v2.6M2756.1 107.1v2.6M2756.1 139.5v2.6M2756.1 171.9v2.6M2756.1 236.6v2.6M2756.1 269v2.6M2756.1 301.4v2.6M2756.1 333.7v2.6M2810.2 74.8v2.6M2810.2 107.1v2.6M2810.2 139.5v2.6M2810.2 171.9v2.6M2810.2 236.6v2.6M2810.2 269v2.6M2810.2 301.4v2.6M2810.2 333.7v2.6M2864.2 74.8v2.6M2864.2 107.1v2.6M2864.2 139.5v2.6M2864.2 171.9v2.6M2864.2 236.6v2.6M2864.2 269v2.6M2864.2 301.4v2.6M2864.2 333.7v2.6M2918.3 74.8v2.6M2918.3 107.1v2.6M2918.3 139.5v2.6M2918.3 171.9v2.6M2918.3 236.6v2.6M2918.3 269v2.6M2918.3 301.4v2.6M2918.3 333.7v2.6M2972.3 74.8v2.6M2972.3 107.1v2.6M2972.3 139.5v2.6M2972.3 171.9v2.6M2972.3 236.6v2.6M2972.3 269v2.6M2972.3 301.4v2.6M2972.3 333.7v2.6M3080.5 74.8v2.6M3080.5 107.1v2.6M3080.5 139.5v2.6M3080.5 171.9v2.6M3080.5 236.6v2.6M3080.5 269v2.6M3080.5 301.4v2.6M3080.5 333.7v2.6M3134.5 74.8v2.6M3134.5 107.1v2.6M3134.5 139.5v2.6M3134.5 171.9v2.6M3134.5 236.6v2.6M3134.5 269v2.6M3134.5 301.4v2.6M3134.5 333.7v2.6M3188.6 74.8v2.6M3188.6 107.1v2.6M3188.6 139.5v2.6M3188.6 171.9v2.6M3188.6 236.6v2.6M3188.6 269v2.6M3188.6 301.4v2.6M3188.6 333.7v2.6" stroke="#8c8068" stroke-width="2.6" fill="none" opacity="0.8"/>
<path d="M1676.2 43.7H3190M1676.2 367.4H3190M1676.2 205.5H3190M3188.8 43.7V367.4M3026.4 43.7V367.4M1729 43.7V59.7M1729 351.4V367.4M1729 196.5V214.5M1783 43.7V59.7M1783 351.4V367.4M1783 196.5V214.5M1837.1 43.7V59.7M1837.1 351.4V367.4M1837.1 196.5V214.5M1891.1 43.7V59.7M1891.1 351.4V367.4M1891.1 196.5V214.5M1945.2 43.7V70.7M1945.2 340.4V367.4M1945.2 192.5V218.5M1999.3 43.7V59.7M1999.3 351.4V367.4M1999.3 196.5V214.5M2053.3 43.7V59.7M2053.3 351.4V367.4M2053.3 196.5V214.5M2107.4 43.7V59.7M2107.4 351.4V367.4M2107.4 196.5V214.5M2161.4 43.7V59.7M2161.4 351.4V367.4M2161.4 196.5V214.5M2215.5 43.7V70.7M2215.5 340.4V367.4M2215.5 192.5V218.5M2269.6 43.7V59.7M2269.6 351.4V367.4M2269.6 196.5V214.5M2323.6 43.7V59.7M2323.6 351.4V367.4M2323.6 196.5V214.5M2377.7 43.7V59.7M2377.7 351.4V367.4M2377.7 196.5V214.5M2431.7 43.7V59.7M2431.7 351.4V367.4M2431.7 196.5V214.5M2485.8 43.7V70.7M2485.8 340.4V367.4M2485.8 192.5V218.5M2539.9 43.7V59.7M2539.9 351.4V367.4M2539.9 196.5V214.5M2593.9 43.7V59.7M2593.9 351.4V367.4M2593.9 196.5V214.5M2648 43.7V59.7M2648 351.4V367.4M2648 196.5V214.5M2702 43.7V59.7M2702 351.4V367.4M2702 196.5V214.5M2756.1 43.7V70.7M2756.1 340.4V367.4M2756.1 192.5V218.5M2810.2 43.7V59.7M2810.2 351.4V367.4M2810.2 196.5V214.5M2864.2 43.7V59.7M2864.2 351.4V367.4M2864.2 196.5V214.5M2918.3 43.7V59.7M2918.3 351.4V367.4M2918.3 196.5V214.5M2972.3 43.7V59.7M2972.3 351.4V367.4M2972.3 196.5V214.5M3080.5 43.7V59.7M3080.5 351.4V367.4M3080.5 196.5V214.5M3134.5 43.7V59.7M3134.5 351.4V367.4M3134.5 196.5V214.5M1676.2 76.1H1702.2M3012.4 76.1H3040.4M1676.2 108.4H1702.2M3012.4 108.4H3040.4M1676.2 140.8H1702.2M3012.4 140.8H3040.4M1676.2 173.2H1702.2M3012.4 173.2H3040.4M1676.2 237.9H1702.2M3012.4 237.9H3040.4M1676.2 270.3H1702.2M3012.4 270.3H3040.4M1676.2 302.7H1702.2M3012.4 302.7H3040.4M1676.2 335H1702.2M3012.4 335H3040.4" stroke="#8c8068" stroke-width="2.4" fill="none" />
<path d="M1729 527.7v2.6M1729 657.5v2.6M1729 787.2v2.6M1729 917v2.6M1729 1176.4v2.6M1729 1306.2v2.6M1729 1435.9v2.6M1729 1565.7v2.6M1783 527.7v2.6M1783 657.5v2.6M1783 787.2v2.6M1783 917v2.6M1783 1176.4v2.6M1783 1306.2v2.6M1783 1435.9v2.6M1783 1565.7v2.6M1837.1 527.7v2.6M1837.1 657.5v2.6M1837.1 787.2v2.6M1837.1 917v2.6M1837.1 1176.4v2.6M1837.1 1306.2v2.6M1837.1 1435.9v2.6M1837.1 1565.7v2.6M1891.1 527.7v2.6M1891.1 657.5v2.6M1891.1 787.2v2.6M1891.1 917v2.6M1891.1 1176.4v2.6M1891.1 1306.2v2.6M1891.1 1435.9v2.6M1891.1 1565.7v2.6M1945.2 423.9v2.6M1945.2 449.9v2.6M1945.2 475.8v2.6M1945.2 501.8v2.6M1945.2 527.7v2.6M1945.2 553.7v2.6M1945.2 579.6v2.6M1945.2 605.6v2.6M1945.2 631.5v2.6M1945.2 657.5v2.6M1945.2 683.4v2.6M1945.2 709.4v2.6M1945.2 735.3v2.6M1945.2 761.3v2.6M1945.2 787.2v2.6M1945.2 813.2v2.6M1945.2 839.1v2.6M1945.2 865.1v2.6M1945.2 891v2.6M1945.2 917v2.6M1945.2 942.9v2.6M1945.2 968.9v2.6M1945.2 994.8v2.6M1945.2 1020.8v2.6M1945.2 1072.6v2.6M1945.2 1098.6v2.6M1945.2 1124.5v2.6M1945.2 1150.5v2.6M1945.2 1176.4v2.6M1945.2 1202.4v2.6M1945.2 1228.3v2.6M1945.2 1254.3v2.6M1945.2 1280.2v2.6M1945.2 1306.2v2.6M1945.2 1332.1v2.6M1945.2 1358.1v2.6M1945.2 1384v2.6M1945.2 1410v2.6M1945.2 1435.9v2.6M1945.2 1461.9v2.6M1945.2 1487.8v2.6M1945.2 1513.8v2.6M1945.2 1539.7v2.6M1945.2 1565.7v2.6M1945.2 1591.6v2.6M1945.2 1617.6v2.6M1945.2 1643.5v2.6M1945.2 1669.5v2.6M1999.3 527.7v2.6M1999.3 657.5v2.6M1999.3 787.2v2.6M1999.3 917v2.6M1999.3 1176.4v2.6M1999.3 1306.2v2.6M1999.3 1435.9v2.6M1999.3 1565.7v2.6M2053.3 527.7v2.6M2053.3 657.5v2.6M2053.3 787.2v2.6M2053.3 917v2.6M2053.3 1176.4v2.6M2053.3 1306.2v2.6M2053.3 1435.9v2.6M2053.3 1565.7v2.6M2107.4 527.7v2.6M2107.4 657.5v2.6M2107.4 787.2v2.6M2107.4 917v2.6M2107.4 1176.4v2.6M2107.4 1306.2v2.6M2107.4 1435.9v2.6M2107.4 1565.7v2.6M2161.4 527.7v2.6M2161.4 657.5v2.6M2161.4 787.2v2.6M2161.4 917v2.6M2161.4 1176.4v2.6M2161.4 1306.2v2.6M2161.4 1435.9v2.6M2161.4 1565.7v2.6M2215.5 423.9v2.6M2215.5 449.9v2.6M2215.5 475.8v2.6M2215.5 501.8v2.6M2215.5 527.7v2.6M2215.5 553.7v2.6M2215.5 579.6v2.6M2215.5 605.6v2.6M2215.5 631.5v2.6M2215.5 657.5v2.6M2215.5 683.4v2.6M2215.5 709.4v2.6M2215.5 735.3v2.6M2215.5 761.3v2.6M2215.5 787.2v2.6M2215.5 813.2v2.6M2215.5 839.1v2.6M2215.5 865.1v2.6M2215.5 891v2.6M2215.5 917v2.6M2215.5 942.9v2.6M2215.5 968.9v2.6M2215.5 994.8v2.6M2215.5 1020.8v2.6M2215.5 1072.6v2.6M2215.5 1098.6v2.6M2215.5 1124.5v2.6M2215.5 1150.5v2.6M2215.5 1176.4v2.6M2215.5 1202.4v2.6M2215.5 1228.3v2.6M2215.5 1254.3v2.6M2215.5 1280.2v2.6M2215.5 1306.2v2.6M2215.5 1332.1v2.6M2215.5 1358.1v2.6M2215.5 1384v2.6M2215.5 1410v2.6M2215.5 1435.9v2.6M2215.5 1461.9v2.6M2215.5 1487.8v2.6M2215.5 1513.8v2.6M2215.5 1539.7v2.6M2215.5 1565.7v2.6M2215.5 1591.6v2.6M2215.5 1617.6v2.6M2215.5 1643.5v2.6M2215.5 1669.5v2.6M2269.6 527.7v2.6M2269.6 657.5v2.6M2269.6 787.2v2.6M2269.6 917v2.6M2269.6 1176.4v2.6M2269.6 1306.2v2.6M2269.6 1435.9v2.6M2269.6 1565.7v2.6M2323.6 527.7v2.6M2323.6 657.5v2.6M2323.6 787.2v2.6M2323.6 917v2.6M2323.6 1176.4v2.6M2323.6 1306.2v2.6M2323.6 1435.9v2.6M2323.6 1565.7v2.6M2377.7 527.7v2.6M2377.7 657.5v2.6M2377.7 787.2v2.6M2377.7 917v2.6M2377.7 1176.4v2.6M2377.7 1306.2v2.6M2377.7 1435.9v2.6M2377.7 1565.7v2.6M2431.7 527.7v2.6M2431.7 657.5v2.6M2431.7 787.2v2.6M2431.7 917v2.6M2431.7 1176.4v2.6M2431.7 1306.2v2.6M2431.7 1435.9v2.6M2431.7 1565.7v2.6M2485.8 423.9v2.6M2485.8 449.9v2.6M2485.8 475.8v2.6M2485.8 501.8v2.6M2485.8 527.7v2.6M2485.8 553.7v2.6M2485.8 579.6v2.6M2485.8 605.6v2.6M2485.8 631.5v2.6M2485.8 657.5v2.6M2485.8 683.4v2.6M2485.8 709.4v2.6M2485.8 735.3v2.6M2485.8 761.3v2.6M2485.8 787.2v2.6M2485.8 813.2v2.6M2485.8 839.1v2.6M2485.8 865.1v2.6M2485.8 891v2.6M2485.8 917v2.6M2485.8 942.9v2.6M2485.8 968.9v2.6M2485.8 994.8v2.6M2485.8 1020.8v2.6M2485.8 1072.6v2.6M2485.8 1098.6v2.6M2485.8 1124.5v2.6M2485.8 1150.5v2.6M2485.8 1176.4v2.6M2485.8 1202.4v2.6M2485.8 1228.3v2.6M2485.8 1254.3v2.6M2485.8 1280.2v2.6M2485.8 1306.2v2.6M2485.8 1332.1v2.6M2485.8 1358.1v2.6M2485.8 1384v2.6M2485.8 1410v2.6M2485.8 1435.9v2.6M2485.8 1461.9v2.6M2485.8 1487.8v2.6M2485.8 1513.8v2.6M2485.8 1539.7v2.6M2485.8 1565.7v2.6M2485.8 1591.6v2.6M2485.8 1617.6v2.6M2485.8 1643.5v2.6M2485.8 1669.5v2.6M2539.9 527.7v2.6M2539.9 657.5v2.6M2539.9 787.2v2.6M2539.9 917v2.6M2539.9 1176.4v2.6M2539.9 1306.2v2.6M2539.9 1435.9v2.6M2539.9 1565.7v2.6M2593.9 527.7v2.6M2593.9 657.5v2.6M2593.9 787.2v2.6M2593.9 917v2.6M2593.9 1176.4v2.6M2593.9 1306.2v2.6M2593.9 1435.9v2.6M2593.9 1565.7v2.6M2648 527.7v2.6M2648 657.5v2.6M2648 787.2v2.6M2648 917v2.6M2648 1176.4v2.6M2648 1306.2v2.6M2648 1435.9v2.6M2648 1565.7v2.6M2702 527.7v2.6M2702 657.5v2.6M2702 787.2v2.6M2702 917v2.6M2702 1176.4v2.6M2702 1306.2v2.6M2702 1435.9v2.6M2702 1565.7v2.6M2756.1 423.9v2.6M2756.1 449.9v2.6M2756.1 475.8v2.6M2756.1 501.8v2.6M2756.1 527.7v2.6M2756.1 553.7v2.6M2756.1 579.6v2.6M2756.1 605.6v2.6M2756.1 631.5v2.6M2756.1 657.5v2.6M2756.1 683.4v2.6M2756.1 709.4v2.6M2756.1 735.3v2.6M2756.1 761.3v2.6M2756.1 787.2v2.6M2756.1 813.2v2.6M2756.1 839.1v2.6M2756.1 865.1v2.6M2756.1 891v2.6M2756.1 917v2.6M2756.1 942.9v2.6M2756.1 968.9v2.6M2756.1 994.8v2.6M2756.1 1020.8v2.6M2756.1 1072.6v2.6M2756.1 1098.6v2.6M2756.1 1124.5v2.6M2756.1 1150.5v2.6M2756.1 1176.4v2.6M2756.1 1202.4v2.6M2756.1 1228.3v2.6M2756.1 1254.3v2.6M2756.1 1280.2v2.6M2756.1 1306.2v2.6M2756.1 1332.1v2.6M2756.1 1358.1v2.6M2756.1 1384v2.6M2756.1 1410v2.6M2756.1 1435.9v2.6M2756.1 1461.9v2.6M2756.1 1487.8v2.6M2756.1 1513.8v2.6M2756.1 1539.7v2.6M2756.1 1565.7v2.6M2756.1 1591.6v2.6M2756.1 1617.6v2.6M2756.1 1643.5v2.6M2756.1 1669.5v2.6M2810.2 527.7v2.6M2810.2 657.5v2.6M2810.2 787.2v2.6M2810.2 917v2.6M2810.2 1176.4v2.6M2810.2 1306.2v2.6M2810.2 1435.9v2.6M2810.2 1565.7v2.6M2864.2 527.7v2.6M2864.2 657.5v2.6M2864.2 787.2v2.6M2864.2 917v2.6M2864.2 1176.4v2.6M2864.2 1306.2v2.6M2864.2 1435.9v2.6M2864.2 1565.7v2.6M2918.3 527.7v2.6M2918.3 657.5v2.6M2918.3 787.2v2.6M2918.3 917v2.6M2918.3 1176.4v2.6M2918.3 1306.2v2.6M2918.3 1435.9v2.6M2918.3 1565.7v2.6M2972.3 527.7v2.6M2972.3 657.5v2.6M2972.3 787.2v2.6M2972.3 917v2.6M2972.3 1176.4v2.6M2972.3 1306.2v2.6M2972.3 1435.9v2.6M2972.3 1565.7v2.6M3080.5 527.7v2.6M3080.5 657.5v2.6M3080.5 787.2v2.6M3080.5 917v2.6M3080.5 1176.4v2.6M3080.5 1306.2v2.6M3080.5 1435.9v2.6M3080.5 1565.7v2.6M3134.5 527.7v2.6M3134.5 657.5v2.6M3134.5 787.2v2.6M3134.5 917v2.6M3134.5 1176.4v2.6M3134.5 1306.2v2.6M3134.5 1435.9v2.6M3134.5 1565.7v2.6M3188.6 527.7v2.6M3188.6 657.5v2.6M3188.6 787.2v2.6M3188.6 917v2.6M3188.6 1176.4v2.6M3188.6 1306.2v2.6M3188.6 1435.9v2.6M3188.6 1565.7v2.6" stroke="#8c8068" stroke-width="2.6" fill="none" opacity="0.8"/>
<path d="M1676.2 399.3H3190M1676.2 1696.7H3190M1676.2 1048H3190M3188.8 399.3V1696.7M3026.4 399.3V1696.7M1729 399.3V415.3M1729 1680.7V1696.7M1729 1039V1057M1783 399.3V415.3M1783 1680.7V1696.7M1783 1039V1057M1837.1 399.3V415.3M1837.1 1680.7V1696.7M1837.1 1039V1057M1891.1 399.3V415.3M1891.1 1680.7V1696.7M1891.1 1039V1057M1945.2 399.3V426.3M1945.2 1669.7V1696.7M1945.2 1035V1061M1999.3 399.3V415.3M1999.3 1680.7V1696.7M1999.3 1039V1057M2053.3 399.3V415.3M2053.3 1680.7V1696.7M2053.3 1039V1057M2107.4 399.3V415.3M2107.4 1680.7V1696.7M2107.4 1039V1057M2161.4 399.3V415.3M2161.4 1680.7V1696.7M2161.4 1039V1057M2215.5 399.3V426.3M2215.5 1669.7V1696.7M2215.5 1035V1061M2269.6 399.3V415.3M2269.6 1680.7V1696.7M2269.6 1039V1057M2323.6 399.3V415.3M2323.6 1680.7V1696.7M2323.6 1039V1057M2377.7 399.3V415.3M2377.7 1680.7V1696.7M2377.7 1039V1057M2431.7 399.3V415.3M2431.7 1680.7V1696.7M2431.7 1039V1057M2485.8 399.3V426.3M2485.8 1669.7V1696.7M2485.8 1035V1061M2539.9 399.3V415.3M2539.9 1680.7V1696.7M2539.9 1039V1057M2593.9 399.3V415.3M2593.9 1680.7V1696.7M2593.9 1039V1057M2648 399.3V415.3M2648 1680.7V1696.7M2648 1039V1057M2702 399.3V415.3M2702 1680.7V1696.7M2702 1039V1057M2756.1 399.3V426.3M2756.1 1669.7V1696.7M2756.1 1035V1061M2810.2 399.3V415.3M2810.2 1680.7V1696.7M2810.2 1039V1057M2864.2 399.3V415.3M2864.2 1680.7V1696.7M2864.2 1039V1057M2918.3 399.3V415.3M2918.3 1680.7V1696.7M2918.3 1039V1057M2972.3 399.3V415.3M2972.3 1680.7V1696.7M2972.3 1039V1057M3080.5 399.3V415.3M3080.5 1680.7V1696.7M3080.5 1039V1057M3134.5 399.3V415.3M3134.5 1680.7V1696.7M3134.5 1039V1057M1676.2 425.2H1690.2M3017.9 425.2H3034.9M1676.2 451.2H1690.2M3017.9 451.2H3034.9M1676.2 477.1H1690.2M3017.9 477.1H3034.9M1676.2 503.1H1690.2M3017.9 503.1H3034.9M1676.2 529H1702.2M3012.9 529H3039.9M1676.2 555H1690.2M3017.9 555H3034.9M1676.2 580.9H1690.2M3017.9 580.9H3034.9M1676.2 606.9H1690.2M3017.9 606.9H3034.9M1676.2 632.8H1690.2M3017.9 632.8H3034.9M1676.2 658.8H1702.2M3012.9 658.8H3039.9M1676.2 684.7H1690.2M3017.9 684.7H3034.9M1676.2 710.7H1690.2M3017.9 710.7H3034.9M1676.2 736.6H1690.2M3017.9 736.6H3034.9M1676.2 762.6H1690.2M3017.9 762.6H3034.9M1676.2 788.5H1702.2M3012.9 788.5H3039.9M1676.2 814.5H1690.2M3017.9 814.5H3034.9M1676.2 840.4H1690.2M3017.9 840.4H3034.9M1676.2 866.4H1690.2M3017.9 866.4H3034.9M1676.2 892.3H1690.2M3017.9 892.3H3034.9M1676.2 918.3H1702.2M3012.9 918.3H3039.9M1676.2 944.2H1690.2M3017.9 944.2H3034.9M1676.2 970.2H1690.2M3017.9 970.2H3034.9M1676.2 996.1H1690.2M3017.9 996.1H3034.9M1676.2 1022.1H1690.2M3017.9 1022.1H3034.9M1676.2 1073.9H1690.2M3017.9 1073.9H3034.9M1676.2 1099.9H1690.2M3017.9 1099.9H3034.9M1676.2 1125.8H1690.2M3017.9 1125.8H3034.9M1676.2 1151.8H1690.2M3017.9 1151.8H3034.9M1676.2 1177.7H1702.2M3012.9 1177.7H3039.9M1676.2 1203.7H1690.2M3017.9 1203.7H3034.9M1676.2 1229.6H1690.2M3017.9 1229.6H3034.9M1676.2 1255.6H1690.2M3017.9 1255.6H3034.9M1676.2 1281.5H1690.2M3017.9 1281.5H3034.9M1676.2 1307.5H1702.2M3012.9 1307.5H3039.9M1676.2 1333.4H1690.2M3017.9 1333.4H3034.9M1676.2 1359.4H1690.2M3017.9 1359.4H3034.9M1676.2 1385.3H1690.2M3017.9 1385.3H3034.9M1676.2 1411.3H1690.2M3017.9 1411.3H3034.9M1676.2 1437.2H1702.2M3012.9 1437.2H3039.9M1676.2 1463.2H1690.2M3017.9 1463.2H3034.9M1676.2 1489.1H1690.2M3017.9 1489.1H3034.9M1676.2 1515.1H1690.2M3017.9 1515.1H3034.9M1676.2 1541H1690.2M3017.9 1541H3034.9M1676.2 1567H1702.2M3012.9 1567H3039.9M1676.2 1592.9H1690.2M3017.9 1592.9H3034.9M1676.2 1618.9H1690.2M3017.9 1618.9H3034.9M1676.2 1644.8H1690.2M3017.9 1644.8H3034.9M1676.2 1670.8H1690.2M3017.9 1670.8H3034.9" stroke="#8c8068" stroke-width="2.4" fill="none" />
<path d="M1945.2 1719V1724M2215.5 1719V1724M2485.8 1719V1724M2756.1 1719V1724M3026.4 1719V1724" stroke="#8c8068" stroke-width="2" fill="none" />
<g clip-path="url(#cB1)">
<polygon points="1676,330 1677,332.2 1678,333.4 1679,336.1 1680,331.9 1681,331.2 1682,325.3 1683,322.6 1684,331.9 1685,328.7 1686,331.2 1687,320.8 1688,314.1 1689,332.9 1690,325.1 1691,338.2 1692,326.8 1693,333.3 1694,331.8 1695,328 1696,328.7 1697,329.1 1698,331.7 1699,327.5 1700,334.6 1701,330.3 1702,330.1 1703,325 1704,321.8 1705,323.2 1706,325.5 1707,324 1708,314.5 1709,332.3 1710,337.4 1711,312.9 1712,339.3 1713,336.7 1714,325.7 1715,333 1716,330.6 1717,334.8 1718,337.9 1719,339.4 1720,324.6 1721,335 1722,325.9 1723,327.3 1724,334.5 1725,331.3 1726,332.3 1727,323.1 1728,333.6 1729,332.3 1730,318.2 1731,310 1732,308.5 1733,289.8 1734,282.8 1735,291.7 1736,296.6 1737,323.1 1738,316.4 1739,312.4 1740,325 1741,317.7 1742,320.3 1743,331 1744,325 1745,327.8 1746,324.7 1747,324.3 1748,315.6 1749,329.3 1750,328.5 1751,326.9 1752,322.1 1753,323.6 1754,324.6 1755,332.7 1756,331.4 1757,323.4 1758,330.1 1759,331.3 1760,321.3 1761,329 1762,330.8 1763,326.7 1764,332.9 1765,328.6 1766,333.5 1767,305.3 1768,331 1769,332.1 1770,323.4 1771,331.6 1772,325.2 1773,330.8 1774,321.5 1775,327.3 1776,320 1777,323.3 1778,322.4 1779,322.7 1780,324.1 1781,324.7 1782,319.7 1783,329.4 1784,327.2 1785,320 1786,308.3 1787,328.6 1788,324.9 1789,327.3 1790,326.2 1791,326.3 1792,321 1793,319.7 1794,315 1795,328.3 1796,325.9 1797,325.7 1798,317.9 1799,316.5 1800,328 1801,322 1802,330.4 1803,331.1 1804,323.6 1805,331.7 1806,321.1 1807,317.2 1808,320.7 1809,324.7 1810,327.9 1811,333.9 1812,334.9 1813,320.4 1814,331.6 1815,323 1816,329 1817,324.5 1818,329.3 1819,332.3 1820,331.2 1821,323.6 1822,330 1823,331 1824,325 1825,327.2 1826,327.1 1827,332.2 1828,331.2 1829,334.2 1830,328.9 1831,328.7 1832,329.1 1833,333.7 1834,314.4 1835,320.3 1836,329.2 1837,327.8 1838,309.1 1839,321.4 1840,317.9 1841,311.2 1842,319.6 1843,319 1844,320.6 1845,314.9 1846,316.5 1847,315.8 1848,313 1849,314.5 1850,316.4 1851,315.8 1852,311.5 1853,322.7 1854,326.1 1855,327.7 1856,314 1857,323.1 1858,325.5 1859,322.4 1860,333.1 1861,332.3 1862,317.3 1863,332.3 1864,335.2 1865,337.1 1866,336.6 1867,332.2 1868,339.7 1869,338 1870,335 1871,333.6 1872,337.7 1873,336.9 1874,329.9 1875,329 1876,333 1877,333.2 1878,329.4 1879,335.7 1880,315.4 1881,329 1882,316.2 1883,330.1 1884,317.6 1885,330.6 1886,330.8 1887,315.8 1888,325.8 1889,327.6 1890,329.2 1891,327.4 1892,323.7 1893,325.4 1894,332.4 1895,326.9 1896,324.3 1897,335.6 1898,326.1 1899,328.4 1900,331.3 1901,330.1 1902,320.2 1903,325.2 1904,331.6 1905,332.3 1906,335.6 1907,337.1 1908,328.8 1909,330.6 1910,324.5 1911,331.2 1912,325.5 1913,330.6 1914,326.2 1915,333.5 1916,330.7 1917,328.7 1918,332.4 1919,320.1 1920,322 1921,325.3 1922,322.1 1923,331.5 1924,328.9 1925,327.5 1926,317.2 1927,317.7 1928,325.4 1929,328.3 1930,318 1931,302.8 1932,319.1 1933,305.5 1934,295.3 1935,281.7 1936,272.7 1937,262.3 1938,253.7 1939,233.9 1940,239.5 1941,229 1942,215.4 1943,207.3 1944,199.2 1945,189.7 1946,173.8 1947,158.4 1948,150.6 1949,143.9 1950,132.7 1951,116.6 1952,108.4 1953,94.7 1954,75.4 1955,75.7 1956,61.4 1957,63.1 1958,61.7 1959,47.4 1960,46.2 1961,49.3 1962,53.1 1963,47.9 1964,47.9 1965,49 1966,44.2 1967,47.3 1968,52.7 1969,19.9 1970,51.8 1971,48.3 1972,46.1 1973,53.2 1974,46.4 1975,55.6 1976,47.8 1977,55.1 1978,58.6 1979,58.6 1980,40.3 1981,52.3 1982,58.2 1983,58.3 1984,53.9 1985,53 1986,44.7 1987,54.5 1988,58.1 1989,62.2 1990,59.5 1991,53.8 1992,27 1993,55.8 1994,44.5 1995,59.7 1996,51 1997,45.1 1998,57.6 1999,55.9 2000,53 2001,56.1 2002,48.7 2003,44 2004,40 2005,55.7 2006,56.6 2007,48.7 2008,58 2009,54.2 2010,48.7 2011,59.5 2012,50.1 2013,53 2014,50.8 2015,54.3 2016,49.7 2017,46.1 2018,52.7 2019,50.6 2020,47.8 2021,22.2 2022,38.1 2023,48.4 2024,47.7 2025,39.8 2026,48.1 2027,41.2 2028,46.8 2029,52.9 2030,48.9 2031,42.3 2032,43.5 2033,45.6 2034,58.4 2035,50.3 2036,45.3 2037,45.4 2038,54 2039,45.2 2040,56.8 2041,48.8 2042,56.9 2043,44.6 2044,55.7 2045,47.8 2046,57.3 2047,57.5 2048,55.3 2049,53.1 2050,56.7 2051,42.9 2052,59.3 2053,60.9 2054,47.1 2055,54.7 2056,55.5 2057,58 2058,58.1 2059,58.1 2060,53.3 2061,45.7 2062,49.6 2063,50.4 2064,52.3 2065,47.1 2066,48.1 2067,54.4 2068,48.1 2069,43.9 2070,53.8 2071,42.9 2072,55.2 2073,53.2 2074,49.6 2075,60.9 2076,58.4 2077,52 2078,49.2 2079,52.3 2080,54.8 2081,54.5 2082,58.4 2083,53.1 2084,52 2085,54.7 2086,45 2087,49.5 2088,50 2089,44.5 2090,49.7 2091,48.9 2092,56.5 2093,53 2094,56.6 2095,52.4 2096,50.9 2097,57.9 2098,44.9 2099,63.3 2100,64.2 2101,59.2 2102,54.9 2103,59.5 2104,57.4 2105,54.2 2106,48.2 2107,58 2108,57.3 2109,35.3 2110,51.1 2111,56.3 2112,51 2113,45.5 2114,51.9 2115,53.5 2116,48.7 2117,53.3 2118,54.9 2119,58.9 2120,50.1 2121,59.1 2122,57 2123,54.1 2124,61.2 2125,53.6 2126,46.9 2127,50.9 2128,53.7 2129,54.1 2130,59 2131,50.7 2132,54.5 2133,48.7 2134,47.8 2135,42.6 2136,50.2 2137,48.7 2138,42.7 2139,49.6 2140,43 2141,53.1 2142,50.9 2143,46.4 2144,44.3 2145,42 2146,47.2 2147,42.9 2148,43.7 2149,50.8 2150,46 2151,48.5 2152,47 2153,46.9 2154,49 2155,42.4 2156,45.8 2157,39.7 2158,46.9 2159,48.8 2160,45 2161,43.4 2162,44.4 2163,44.2 2164,43.9 2165,45.5 2166,53.3 2167,48.5 2168,48.6 2169,53.4 2170,40.8 2171,50 2172,51 2173,50.1 2174,45.1 2175,52.4 2176,50.7 2177,59 2178,60 2179,62.4 2180,85.5 2181,94.1 2182,95 2183,119.3 2184,132.4 2185,135.7 2186,147.4 2187,167.2 2188,180.3 2189,189.8 2190,195.1 2191,212.8 2192,227.8 2193,240.8 2194,252.6 2195,253.9 2196,273.9 2197,286.2 2198,295 2199,301.5 2200,301.7 2201,304.7 2202,321.3 2203,316 2204,317.1 2205,314.1 2206,321.6 2207,321 2208,324.5 2209,317.8 2210,318.5 2211,312.9 2212,319 2213,324 2214,328.3 2215,325.3 2216,304.3 2217,322.7 2218,324.5 2219,323.9 2220,317.9 2221,320.5 2222,320.5 2223,323.1 2224,329.2 2225,320.9 2226,323.8 2227,325.4 2228,326.7 2229,328.6 2230,331.5 2231,328.5 2232,329.5 2233,327.3 2234,327.1 2235,330.3 2236,325.9 2237,326.5 2238,325.2 2239,318 2240,332 2241,328.2 2242,325.2 2243,326.1 2244,330.5 2245,331.1 2246,331 2247,325.2 2248,324.4 2249,321.8 2250,324.2 2251,322.1 2252,327.2 2253,320.9 2254,318.2 2255,324.3 2256,322.9 2257,328 2258,319.1 2259,321.4 2260,322.1 2261,324.3 2262,322.8 2263,327.2 2264,332.8 2265,324.2 2266,325.3 2267,329.4 2268,331.8 2269,323.2 2270,330.4 2271,329.5 2272,329.9 2273,331.9 2274,329.7 2275,337.3 2276,326.9 2277,315 2278,282.1 2279,285.8 2280,293.5 2281,317 2282,328.8 2283,331.3 2284,329 2285,326.8 2286,332.1 2287,328.5 2288,330.4 2289,319.9 2290,320.8 2291,315.3 2292,323.7 2293,324.3 2294,326.2 2295,317.1 2296,317.5 2297,326.3 2298,312.4 2299,319.3 2300,326.2 2301,330.9 2302,331.4 2303,329.9 2304,319.9 2305,328.6 2306,330.8 2307,330.4 2308,328.9 2309,324.3 2310,328.7 2311,323.8 2312,317.5 2313,313 2314,314.4 2315,325.5 2316,323.3 2317,315.7 2318,329.2 2319,328.4 2320,320.6 2321,306.2 2322,326.8 2323,324 2324,325 2325,332.3 2326,321.4 2327,327.6 2328,336.1 2329,324 2330,331.4 2331,331.4 2332,319.4 2333,330.3 2334,321.3 2335,332.1 2336,326.5 2337,324.2 2338,323.9 2339,327.1 2340,325.7 2341,325.8 2342,324.3 2343,311.1 2344,322.8 2345,326 2346,325.2 2347,314.2 2348,327.9 2349,327.8 2350,331.2 2351,328.8 2352,320.6 2353,326.9 2354,329.3 2355,327.6 2356,333.2 2357,330.5 2358,332.3 2359,331.9 2360,338.7 2361,329.1 2362,334.2 2363,334.1 2364,335.1 2365,327.2 2366,334.8 2367,324 2368,336.7 2369,332.6 2370,326 2371,325 2372,331.5 2373,323.4 2374,332.7 2375,328.9 2376,329.7 2377,333.1 2378,332.7 2379,317.7 2380,330.5 2381,333.8 2382,329.1 2383,332.6 2384,317.7 2385,330.9 2386,332.7 2387,335.4 2388,330.5 2389,334.8 2390,334.2 2391,331.2 2392,325.7 2393,329.2 2394,336.6 2395,331.7 2396,335.9 2397,333.1 2398,339.1 2399,340.1 2400,335.2 2401,324.6 2402,330.4 2403,336.4 2404,341.9 2405,336.4 2406,338.8 2407,335.3 2408,343 2409,343.4 2410,344.5 2411,331.8 2412,341.9 2413,336.1 2414,331.2 2415,337.2 2416,333.1 2417,329.3 2418,328 2419,335 2420,333.9 2421,330.5 2422,321.7 2423,326.4 2424,325.7 2425,321.8 2426,323.2 2427,317.2 2428,326.6 2429,322.7 2430,325.2 2431,324.8 2432,325.3 2433,316.5 2434,320 2435,332 2436,330.5 2437,331.9 2438,333.2 2439,337.6 2440,336.2 2441,331.2 2442,341.9 2443,338.4 2444,338.4 2445,338.8 2446,314.8 2447,336.6 2448,330.4 2449,335.6 2450,339 2451,334.9 2452,334 2453,309.1 2454,326.6 2455,325 2456,322.3 2457,330 2458,316.8 2459,334 2460,333.9 2461,331.1 2462,336.4 2463,336.5 2464,331.2 2465,327.8 2466,328.5 2467,321.6 2468,332.7 2469,318.9 2470,322.9 2471,317.7 2472,322.9 2473,315.8 2474,315.7 2475,312.9 2476,305.3 2477,298.3 2478,289 2479,281.2 2480,272.5 2481,263 2482,252.7 2483,240.4 2484,229.6 2485,219.4 2486,202.7 2487,197.3 2488,190.8 2489,173.8 2490,166 2491,148.4 2492,135 2493,133 2494,119.5 2495,92.7 2496,100.1 2497,89 2498,53.1 2499,72.6 2500,56.1 2501,63.5 2502,63.8 2503,54.6 2504,56.9 2505,22 2506,54 2507,60.4 2508,64.4 2509,61.9 2510,55.5 2511,52.4 2512,63 2513,62.5 2514,63.1 2515,55.8 2516,54.4 2517,61.4 2518,51.6 2519,49 2520,57.4 2521,41.2 2522,45.7 2523,42.7 2524,49.3 2525,41.9 2526,29 2527,49.8 2528,43.7 2529,49.2 2530,42.9 2531,47.3 2532,48.3 2533,44.8 2534,46.3 2535,43.7 2536,45.1 2537,46.7 2538,35.4 2539,50.5 2540,50.3 2541,47.5 2542,49.5 2543,43.4 2544,51 2545,50.8 2546,43 2547,41.8 2548,44.3 2549,38.9 2550,41.4 2551,47.8 2552,47.3 2553,44.6 2554,51.1 2555,50.2 2556,45.6 2557,55.3 2558,56.4 2559,54.2 2560,52.2 2561,49.2 2562,53.6 2563,55.6 2564,51.8 2565,47 2566,58.8 2567,59.2 2568,57.4 2569,47.6 2570,56.9 2571,49.8 2572,49.9 2573,53.8 2574,17.2 2575,46.4 2576,50.8 2577,43.6 2578,43.4 2579,39 2580,51.2 2581,47.5 2582,50 2583,45.2 2584,45.8 2585,50.7 2586,54.2 2587,53.8 2588,58 2589,57 2590,53.2 2591,53.5 2592,45.3 2593,41.7 2594,49.1 2595,50.5 2596,40.6 2597,40.5 2598,45.4 2599,48.3 2600,48.6 2601,47.8 2602,49.8 2603,46.9 2604,47 2605,44.5 2606,44 2607,46.6 2608,51.3 2609,52.8 2610,50.8 2611,52.8 2612,48.4 2613,46.2 2614,52.1 2615,50.2 2616,43.6 2617,41.6 2618,47.9 2619,34.2 2620,50.8 2621,49.2 2622,50.1 2623,51.6 2624,48.6 2625,48.2 2626,53.8 2627,50.2 2628,49 2629,45.1 2630,54.6 2631,57.4 2632,48.7 2633,48.7 2634,55.4 2635,51.1 2636,56 2637,59.2 2638,52.5 2639,57.2 2640,46.8 2641,50.1 2642,49.3 2643,49.2 2644,51.8 2645,50.6 2646,55.4 2647,53.7 2648,40.4 2649,48.4 2650,56 2651,55.3 2652,47.4 2653,52.9 2654,56.5 2655,51 2656,55.5 2657,58.2 2658,57.6 2659,55.1 2660,57.8 2661,58.5 2662,65.1 2663,53.2 2664,55.6 2665,56.9 2666,63 2667,60 2668,53.2 2669,53.4 2670,54.5 2671,54 2672,52 2673,49 2674,50.4 2675,47.4 2676,45.5 2677,50.8 2678,51.1 2679,47.9 2680,48.8 2681,40.2 2682,54.2 2683,52.1 2684,47.5 2685,44.8 2686,45.9 2687,53.6 2688,36.1 2689,39.1 2690,41.5 2691,56.5 2692,54.2 2693,55.8 2694,52.1 2695,44.5 2696,53.6 2697,52.4 2698,53.3 2699,49.2 2700,49.5 2701,48.4 2702,53.5 2703,40.6 2704,44.5 2705,50.9 2706,50.9 2707,50.4 2708,47.2 2709,51.3 2710,46.7 2711,48.3 2712,52.3 2713,50.5 2714,46 2715,47.4 2716,50.7 2717,53.9 2718,54.2 2719,55.3 2720,51.2 2721,56.9 2722,64.6 2723,71 2724,87.7 2725,97.3 2726,110.2 2727,117.4 2728,134.4 2729,137.1 2730,152.2 2731,170.7 2732,177.4 2733,188.5 2734,195 2735,207.6 2736,217.5 2737,224.6 2738,230.1 2739,245.8 2740,258.2 2741,274.6 2742,285.9 2743,292.7 2744,301.2 2745,307.2 2746,304.5 2747,307.3 2748,318 2749,318.2 2750,323.5 2751,321.1 2752,330.4 2753,325.2 2754,332.2 2755,323.4 2756,331.1 2757,333.4 2758,329 2759,324.1 2760,329.3 2761,331.7 2762,322.1 2763,327.1 2764,329 2765,323.1 2766,302.3 2767,321.2 2768,323.9 2769,331.4 2770,319 2771,324.7 2772,316.8 2773,325.4 2774,319.4 2775,313.7 2776,324.1 2777,315.7 2778,319.7 2779,311.3 2780,315.3 2781,324.6 2782,320 2783,321 2784,320.8 2785,324.3 2786,311.3 2787,327.3 2788,325.9 2789,325.3 2790,325.5 2791,318.6 2792,317.5 2793,326.7 2794,327.3 2795,319 2796,324.9 2797,318.7 2798,323.9 2799,325.1 2800,329.7 2801,329.1 2802,329.1 2803,327.3 2804,325.1 2805,336.2 2806,327.6 2807,318.4 2808,333.4 2809,331 2810,334.1 2811,330.5 2812,335.5 2813,320.6 2814,325.4 2815,327.1 2816,327.4 2817,331.3 2818,334.3 2819,332.6 2820,327 2821,314.7 2822,292.4 2823,281.1 2824,293.3 2825,298.1 2826,330.5 2827,327 2828,325.1 2829,329.8 2830,332.6 2831,327.8 2832,323.1 2833,320.2 2834,334.8 2835,331.6 2836,325.5 2837,326.1 2838,334.1 2839,327.8 2840,318.9 2841,326.9 2842,333.3 2843,330 2844,322.6 2845,327.9 2846,331.7 2847,324.7 2848,330.2 2849,331.7 2850,330.1 2851,334.5 2852,327.8 2853,332.2 2854,330.9 2855,330.3 2856,330 2857,330.4 2858,319.7 2859,322.8 2860,332.7 2861,324.6 2862,303.2 2863,316.7 2864,329.5 2865,325.6 2866,325.4 2867,329.2 2868,318.5 2869,325.2 2870,329.7 2871,332.2 2872,327.2 2873,330.5 2874,331.1 2875,333.1 2876,331.4 2877,326.8 2878,327.6 2879,322.8 2880,332.8 2881,330.6 2882,327.1 2883,329.8 2884,328.6 2885,312.1 2886,323.2 2887,320.6 2888,316 2889,321.9 2890,321.8 2891,325.7 2892,323.7 2893,325.4 2894,326.7 2895,327.7 2896,319.5 2897,321.8 2898,330.8 2899,327.6 2900,330.5 2901,329 2902,334.7 2903,326.5 2904,327 2905,335.2 2906,330.6 2907,317.5 2908,334.8 2909,332.9 2910,330.1 2911,329.1 2912,327.9 2913,330 2914,326.9 2915,323.4 2916,330.7 2917,331.1 2918,317.5 2919,328.1 2920,325.3 2921,323.5 2922,317.4 2923,330.8 2924,324.5 2925,334.1 2926,331.1 2927,333 2928,307.9 2929,334.4 2930,328.8 2931,330.2 2932,335.6 2933,318.3 2934,329.3 2935,333.1 2936,334.5 2937,335.4 2938,321.9 2939,330.7 2940,323.6 2941,334.7 2942,327.2 2943,322.3 2944,328.6 2945,311.2 2946,329.7 2947,325.1 2948,332 2949,331.9 2950,320.5 2951,334.6 2952,331.9 2953,329.6 2954,324.6 2955,330.4 2956,327.7 2957,331.2 2958,331.5 2959,337.8 2960,334.9 2961,332.9 2962,325.2 2963,331.7 2964,325.3 2965,330.8 2966,318.1 2967,332.7 2968,313.1 2969,329.3 2970,326.2 2971,331.2 2972,329.7 2973,321.9 2974,324.5 2975,325.3 2976,328.9 2977,329.6 2978,329.2 2979,328.5 2980,322.4 2981,328.4 2982,307.5 2983,327.8 2984,330.1 2985,328 2986,329.2 2987,326.4 2988,327.7 2989,330.9 2990,310.6 2991,325.4 2992,331.1 2993,329.4 2994,327.1 2995,334.1 2996,325.9 2997,329.5 2998,322.8 2999,323.3 3000,318.2 3001,327.9 3002,325.6 3003,322.2 3004,330.4 3005,327.3 3006,325.8 3007,327.8 3008,328.3 3009,326 3010,328.1 3011,330.4 3012,317.9 3013,323.8 3014,332 3015,331.7 3016,323.8 3017,329.4 3018,325.3 3019,319.8 3020,314.2 3021,294 3022,287 3023,279.1 3024,260.9 3025,249 3026,243.9 3027,238.1 3028,224.3 3029,208.5 3030,197.9 3031,194.3 3032,178.2 3033,170.3 3034,153.2 3035,134.9 3036,128.8 3037,124.8 3038,116.1 3039,93.2 3040,88.9 3041,83 3042,73 3043,65.1 3044,41.1 3045,25.2 3046,55.7 3047,47.9 3048,47.8 3049,55.9 3050,49.8 3051,55.5 3052,45.2 3053,53.4 3054,60.2 3055,56.6 3056,47.3 3057,47 3058,59.3 3059,58.9 3060,58.1 3061,60.9 3062,64.9 3063,62.7 3064,63 3065,53.8 3066,59.6 3067,61.3 3068,62.2 3069,61.2 3070,66.1 3071,45.2 3072,55.4 3073,54.8 3074,55.3 3075,53.6 3076,53.1 3077,45.7 3078,47.8 3079,50 3080,42.6 3081,48.7 3082,43.3 3083,49.4 3084,44.3 3085,47 3086,41.8 3087,46.4 3088,35 3089,40.9 3090,47.9 3091,44.4 3092,40.8 3093,39 3094,45.8 3095,46.7 3096,49.1 3097,50.9 3098,47.1 3099,47.6 3100,49.6 3101,49.9 3102,47.9 3103,45.3 3104,42.3 3105,16.1 3106,47.4 3107,37.7 3108,49.4 3109,41.1 3110,51 3111,36.3 3112,43.2 3113,55.4 3114,51.6 3115,53.5 3116,46.8 3117,57.7 3118,57.7 3119,55.2 3120,58.7 3121,41.9 3122,57.9 3123,56.9 3124,49.7 3125,41.6 3126,50.4 3127,51.9 3128,54.5 3129,48.5 3130,53.9 3131,48 3132,36 3133,31.8 3134,44.9 3135,44.7 3136,42.1 3137,49.4 3138,55.2 3139,56 3140,38.2 3141,44.5 3142,49.4 3143,57.9 3144,49.8 3145,55.9 3146,59 3147,55.2 3148,56.6 3149,61.3 3150,64.8 3151,62.2 3152,60.6 3153,57.1 3154,57.4 3155,61.9 3156,53.9 3157,62.1 3158,59.2 3159,58.4 3160,59.4 3161,52.5 3162,56.2 3163,41.3 3164,55.1 3165,48.8 3166,52 3167,55.7 3168,55.2 3169,50.8 3170,40.3 3171,50.6 3172,53.7 3173,44.3 3174,47.2 3175,51.3 3176,51.1 3177,50.5 3178,50.5 3179,47.2 3180,53.5 3181,38.3 3182,38.7 3183,55.9 3184,53.8 3185,43.3 3186,49.6 3187,45 3188,43.7 3189,43.1 3190,39.4 3190,70.7 3189,60.2 3188,64.5 3187,64.5 3186,67.9 3185,72.4 3184,73 3183,76.8 3182,69 3181,87.8 3180,72.5 3179,76.8 3178,71.5 3177,67 3176,69.1 3175,70.1 3174,76 3173,66.9 3172,67.9 3171,72.3 3170,64.8 3169,72.6 3168,70.4 3167,73.1 3166,69.3 3165,71.4 3164,72 3163,82.4 3162,69.5 3161,79.6 3160,74.6 3159,77.6 3158,76.8 3157,91.2 3156,88 3155,84.1 3154,77.9 3153,81.2 3152,77.3 3151,80.9 3150,90.4 3149,87.2 3148,83.3 3147,84.3 3146,77.7 3145,81.2 3144,76.4 3143,85.1 3142,84.1 3141,70.4 3140,71.8 3139,73.8 3138,76.7 3137,72.7 3136,66.6 3135,71.6 3134,74.8 3133,69.9 3132,65.4 3131,68 3130,74.9 3129,65.7 3128,73.7 3127,79.7 3126,77.4 3125,75.3 3124,77.2 3123,83.6 3122,80.4 3121,77.1 3120,81.4 3119,82 3118,74 3117,73.4 3116,82.8 3115,70.7 3114,77.3 3113,70 3112,75 3111,73.6 3110,72.9 3109,64 3108,69.7 3107,79.8 3106,66.1 3105,67.1 3104,64.6 3103,64 3102,70.4 3101,66.3 3100,74.1 3099,72.6 3098,66.1 3097,64.7 3096,67.6 3095,66.3 3094,80.6 3093,69.9 3092,68.1 3091,68.1 3090,65.4 3089,63.4 3088,74.5 3087,74.6 3086,84.6 3085,72.9 3084,66.4 3083,71.3 3082,80.7 3081,82 3080,76.2 3079,79.5 3078,73.6 3077,73.3 3076,78.3 3075,72.6 3074,73.4 3073,84.2 3072,80.3 3071,80.9 3070,88.4 3069,79.1 3068,82.2 3067,78.4 3066,93.1 3065,80 3064,88.3 3063,84.9 3062,80.9 3061,82.8 3060,76.8 3059,83.9 3058,74.7 3057,75.9 3056,78.7 3055,76 3054,80 3053,75.9 3052,71.7 3051,78 3050,72.8 3049,71.3 3048,81.4 3047,78.2 3046,80.9 3045,80.8 3044,79.4 3043,91.1 3042,88.7 3041,96.1 3040,108.4 3039,122.8 3038,146.1 3037,143.2 3036,150.8 3035,163.4 3034,178.3 3033,186.9 3032,198.6 3031,211.9 3030,222.8 3029,236.9 3028,246.8 3027,252.2 3026,271.4 3025,297.8 3024,301.2 3023,309.5 3022,322.2 3021,320.5 3020,339.4 3019,343.9 3018,342.5 3017,346.7 3016,352.5 3015,350.9 3014,349.4 3013,355 3012,347 3011,344.9 3010,344.1 3009,352.9 3008,345.3 3007,347.2 3006,342.3 3005,348.6 3004,361.1 3003,343.9 3002,343.2 3001,347.1 3000,351 2999,342.1 2998,347.6 2997,348.2 2996,362.2 2995,356.3 2994,358.3 2993,356.8 2992,350.7 2991,355.5 2990,350.5 2989,351.2 2988,350.4 2987,353.6 2986,353.7 2985,347.3 2984,347.1 2983,347.6 2982,341.7 2981,345.7 2980,352.8 2979,348.7 2978,352.7 2977,351.9 2976,349.4 2975,345 2974,346.3 2973,342.5 2972,349.6 2971,353.9 2970,349.8 2969,351.9 2968,351.7 2967,347.4 2966,355.9 2965,355.2 2964,348.4 2963,348.1 2962,352 2961,351.3 2960,353.8 2959,352.4 2958,350.4 2957,353.6 2956,353 2955,347.6 2954,349.9 2953,345.4 2952,355.1 2951,359.8 2950,352.3 2949,362.5 2948,357.3 2947,348.8 2946,345.1 2945,342.9 2944,350.5 2943,343.8 2942,345.6 2941,349 2940,351.9 2939,349.5 2938,356.1 2937,353 2936,352.2 2935,356.8 2934,354.5 2933,353.3 2932,351.2 2931,353.2 2930,351.3 2929,363.5 2928,356.5 2927,357 2926,368.8 2925,348.1 2924,345 2923,352.3 2922,357.8 2921,348.8 2920,344.3 2919,351.4 2918,348.4 2917,345.8 2916,345.9 2915,358.4 2914,345.8 2913,360.1 2912,351.2 2911,349.8 2910,350.8 2909,352 2908,363.8 2907,356.3 2906,352.4 2905,361.1 2904,353.3 2903,360 2902,348.2 2901,349.9 2900,355.1 2899,348.5 2898,353.5 2897,353.9 2896,342.2 2895,345.1 2894,344.3 2893,342 2892,339.8 2891,339.8 2890,341.4 2889,350.9 2888,344.7 2887,345.9 2886,340.8 2885,346.8 2884,352.2 2883,345.9 2882,351.8 2881,348.7 2880,349 2879,348.8 2878,346.9 2877,349.3 2876,351.1 2875,351.5 2874,365.8 2873,348.9 2872,345.2 2871,351.3 2870,351.4 2869,349.4 2868,361 2867,352.6 2866,344.8 2865,348.1 2864,352.8 2863,350.1 2862,349.6 2861,343.3 2860,350.6 2859,346.7 2858,348 2857,352.6 2856,349.7 2855,365 2854,357.9 2853,345.3 2852,347.9 2851,358.2 2850,352.5 2849,349.3 2848,350.9 2847,368.6 2846,345.9 2845,348.3 2844,354.4 2843,354.1 2842,348.7 2841,352.5 2840,346.7 2839,347.6 2838,348.9 2837,349.1 2836,353.3 2835,351.8 2834,358.6 2833,351 2832,352.8 2831,348.6 2830,356.5 2829,352.8 2828,357.9 2827,345.1 2826,361.4 2825,332.6 2824,315 2823,304 2822,316.4 2821,333.5 2820,341.1 2819,361.8 2818,348.7 2817,350.8 2816,358 2815,346.9 2814,352.5 2813,349.5 2812,352.5 2811,350.2 2810,350.4 2809,358.2 2808,349.5 2807,355.2 2806,360.9 2805,352.7 2804,350 2803,348 2802,345.2 2801,350.1 2800,348.9 2799,339.6 2798,341.4 2797,344.6 2796,348.5 2795,342.2 2794,348.3 2793,352.1 2792,344.9 2791,340.5 2790,342.4 2789,343.2 2788,348.2 2787,359.1 2786,344.4 2785,342.6 2784,343.4 2783,337.6 2782,348.8 2781,340.4 2780,349.1 2779,339.9 2778,339 2777,359.7 2776,345.8 2775,344.3 2774,341.9 2773,342.7 2772,354.6 2771,343.6 2770,344.8 2769,345.2 2768,354.6 2767,344.2 2766,344.6 2765,353.7 2764,344.6 2763,342.7 2762,346.6 2761,347.6 2760,349.8 2759,343.6 2758,346.3 2757,361.4 2756,354 2755,350.8 2754,362.9 2753,345.7 2752,344.7 2751,346.4 2750,343.8 2749,340.3 2748,339.2 2747,329.1 2746,332.1 2745,325.1 2744,321.4 2743,311.8 2742,302.2 2741,294.6 2740,293.2 2739,267.1 2738,262.8 2737,260.6 2736,243.4 2735,225.6 2734,220.6 2733,209.4 2732,199.5 2731,188.9 2730,178 2729,167.2 2728,154.9 2727,148.5 2726,134.3 2725,124.6 2724,108.3 2723,93.1 2722,84.3 2721,78.9 2720,74.6 2719,70.6 2718,86.9 2717,76.4 2716,69.3 2715,67.6 2714,71.1 2713,70.4 2712,71.1 2711,71.7 2710,68.4 2709,69.4 2708,71.1 2707,87.7 2706,68.5 2705,70.1 2704,67.4 2703,70.7 2702,77.2 2701,74.9 2700,75.7 2699,75 2698,68.3 2697,74.7 2696,73.3 2695,80.1 2694,69.5 2693,69.1 2692,69.3 2691,85.4 2690,89.9 2689,72.9 2688,72.9 2687,72.6 2686,68.2 2685,66.3 2684,69.3 2683,76.2 2682,89.4 2681,73.6 2680,67.1 2679,80.3 2678,70.6 2677,75.4 2676,71.3 2675,74.8 2674,73.2 2673,75.7 2672,72.1 2671,73.6 2670,75 2669,77 2668,73.9 2667,79.9 2666,79.7 2665,84 2664,85.4 2663,80 2662,88.1 2661,82.4 2660,74.4 2659,88.4 2658,77.4 2657,73.3 2656,76.6 2655,73.5 2654,72.3 2653,72.4 2652,73.4 2651,81.3 2650,77.6 2649,71.1 2648,76.5 2647,75 2646,92.4 2645,70.9 2644,71.8 2643,72.7 2642,75.1 2641,77.2 2640,81 2639,79.1 2638,74.5 2637,72.8 2636,75.4 2635,88.7 2634,74.8 2633,74.5 2632,77.5 2631,79.8 2630,70.5 2629,72.8 2628,72.1 2627,66.7 2626,70.1 2625,65.1 2624,63.1 2623,70.1 2622,64.4 2621,64.5 2620,63.1 2619,84 2618,66 2617,72.4 2616,76 2615,67.9 2614,75 2613,64.2 2612,70.7 2611,72 2610,76.1 2609,67 2608,73.1 2607,69.3 2606,72.8 2605,65.2 2604,64.5 2603,63.2 2602,66.7 2601,72.5 2600,70.6 2599,67 2598,72.1 2597,67 2596,68.4 2595,70.2 2594,71.2 2593,66.4 2592,68.4 2591,70.2 2590,73.6 2589,75.4 2588,76.2 2587,79.8 2586,79.3 2585,66.9 2584,68.5 2583,65.8 2582,68.1 2581,76.1 2580,74 2579,63.8 2578,79.6 2577,80.6 2576,71.9 2575,68.7 2574,73.6 2573,75.6 2572,74.2 2571,69.3 2570,77.3 2569,80.1 2568,76 2567,78 2566,86.2 2565,83.3 2564,75.9 2563,78.6 2562,69.7 2561,73.3 2560,81.3 2559,73.7 2558,82.4 2557,70.8 2556,69.7 2555,79.5 2554,67 2553,66.9 2552,77.3 2551,72.9 2550,68.1 2549,68.7 2548,73 2547,73.3 2546,75.3 2545,64.6 2544,65.3 2543,68.6 2542,70.8 2541,70.8 2540,73.4 2539,71.3 2538,71.1 2537,68.9 2536,69.6 2535,62.1 2534,70.1 2533,72.5 2532,66 2531,68.3 2530,70.8 2529,64 2528,64.4 2527,67.2 2526,80.4 2525,67.6 2524,71.3 2523,73.3 2522,77.1 2521,82.3 2520,80.5 2519,72.6 2518,75.8 2517,87.7 2516,78.1 2515,78.5 2514,83.1 2513,77.6 2512,84.5 2511,90.2 2510,79.4 2509,79.7 2508,83.5 2507,77.2 2506,76.5 2505,85.4 2504,76.4 2503,86.8 2502,84.8 2501,80.9 2500,95.3 2499,101 2498,107.5 2497,114.9 2496,122.9 2495,124.9 2494,144.9 2493,148.8 2492,158.9 2491,175.2 2490,187.9 2489,201.2 2488,217.4 2487,221.6 2486,223.7 2485,237.2 2484,257.7 2483,259.7 2482,270 2481,285 2480,288 2479,296.6 2478,311.6 2477,314.1 2476,322.4 2475,337 2474,335.6 2473,340.3 2472,356.1 2471,348.3 2470,346 2469,354.7 2468,356.8 2467,347.3 2466,360.7 2465,357 2464,356.7 2463,349.8 2462,351.5 2461,353.8 2460,353.3 2459,350.9 2458,351 2457,356.3 2456,356.2 2455,347 2454,349.4 2453,344.9 2452,352 2451,352.9 2450,358.9 2449,360 2448,357.8 2447,355.5 2446,357.3 2445,355.9 2444,372.8 2443,363.2 2442,368.1 2441,354.5 2440,358.8 2439,353.2 2438,347.7 2437,355.7 2436,353.8 2435,352.9 2434,351.7 2433,345.3 2432,341.9 2431,349.5 2430,343.7 2429,345.3 2428,343.1 2427,344.9 2426,359.1 2425,354.4 2424,348.8 2423,353.2 2422,346.3 2421,348.8 2420,355.3 2419,351.5 2418,353 2417,359.4 2416,359 2415,360.4 2414,360.7 2413,360.7 2412,366.4 2411,355.8 2410,361.6 2409,358.5 2408,363.5 2407,360.8 2406,373.3 2405,358.3 2404,358.5 2403,358.1 2402,353.7 2401,357 2400,352.3 2399,353.7 2398,366.6 2397,357.2 2396,353.2 2395,354.9 2394,353.9 2393,362.1 2392,356.6 2391,351.7 2390,369.1 2389,356.2 2388,358.8 2387,366.9 2386,358.6 2385,348 2384,351.2 2383,347.7 2382,354 2381,360.2 2380,350.3 2379,358.3 2378,353.5 2377,346.3 2376,347.1 2375,363.6 2374,356.6 2373,358.4 2372,350 2371,358.6 2370,357.4 2369,358.3 2368,358.5 2367,357.7 2366,350.5 2365,350.2 2364,351.3 2363,350.4 2362,360.1 2361,354.5 2360,359.8 2359,352.8 2358,363.2 2357,358.3 2356,348.3 2355,363.2 2354,352.8 2353,351.7 2352,360.2 2351,346.2 2350,356.5 2349,350.8 2348,358.1 2347,346.4 2346,350.3 2345,342.1 2344,342.9 2343,343.4 2342,345.7 2341,359 2340,351.9 2339,349.4 2338,355.7 2337,348.1 2336,350 2335,351.6 2334,353.1 2333,347.5 2332,353.3 2331,360.9 2330,349.5 2329,356.3 2328,365.4 2327,356.9 2326,354.3 2325,349.4 2324,344.7 2323,355.2 2322,348.5 2321,344.2 2320,344.1 2319,342.8 2318,342.7 2317,343.1 2316,338.1 2315,345.3 2314,346.5 2313,342.1 2312,349.3 2311,342.8 2310,360.2 2309,353.3 2308,352.1 2307,344.8 2306,347.7 2305,351.3 2304,344.1 2303,347.2 2302,345.5 2301,344.9 2300,348.5 2299,345.5 2298,352 2297,346 2296,341.9 2295,350.7 2294,340.7 2293,343.7 2292,352.8 2291,348.9 2290,345.2 2289,345.1 2288,352.4 2287,353.4 2286,359 2285,351 2284,356.1 2283,350.9 2282,348.7 2281,338.2 2280,315.4 2279,307 2278,327.5 2277,341.5 2276,348.9 2275,360 2274,352.1 2273,358 2272,354.7 2271,346.9 2270,346.2 2269,350.5 2268,349.2 2267,350.5 2266,347.9 2265,363.4 2264,349.5 2263,363.4 2262,340.7 2261,347 2260,348.4 2259,346.5 2258,343.6 2257,348.9 2256,348.8 2255,347.6 2254,345.5 2253,345.2 2252,348.7 2251,349.8 2250,363 2249,342.4 2248,346.3 2247,352.3 2246,355.1 2245,352.2 2244,348.3 2243,350.5 2242,348.8 2241,354.8 2240,346.1 2239,353.4 2238,360.6 2237,343.3 2236,345.7 2235,364.3 2234,344.7 2233,349.1 2232,347.9 2231,344.5 2230,347.6 2229,347.5 2228,352.2 2227,341.8 2226,345.7 2225,346.4 2224,351.8 2223,354.4 2222,343.2 2221,344 2220,352 2219,348.8 2218,341.3 2217,338.7 2216,344.8 2215,344.6 2214,343.6 2213,343.8 2212,357.6 2211,346.9 2210,367 2209,337.5 2208,339 2207,345.2 2206,350.4 2205,357.4 2204,344.7 2203,336.9 2202,338.9 2201,341.2 2200,333.8 2199,320.6 2198,316 2197,307.9 2196,289.8 2195,281.8 2194,289.8 2193,261.8 2192,243.6 2191,234.9 2190,229 2189,214.1 2188,195.1 2187,182.9 2186,175.5 2185,156.7 2184,154.5 2183,135.6 2182,128.7 2181,113.5 2180,102.9 2179,88.5 2178,83.5 2177,77.7 2176,71.4 2175,70.2 2174,74.8 2173,69.3 2172,69.6 2171,79.6 2170,68.9 2169,77 2168,80.4 2167,73.5 2166,68.1 2165,68.1 2164,70.2 2163,69.5 2162,62.7 2161,68 2160,75.7 2159,67.6 2158,69.1 2157,68.7 2156,66.7 2155,68.3 2154,68.9 2153,67.6 2152,68.9 2151,71.4 2150,69.9 2149,84.1 2148,72 2147,69.3 2146,67.4 2145,66 2144,64.7 2143,65.7 2142,73 2141,66.8 2140,74.1 2139,66.2 2138,70.1 2137,66.6 2136,76.6 2135,73.9 2134,66 2133,68.7 2132,70.6 2131,76.8 2130,73.1 2129,79.9 2128,96.6 2127,80.1 2126,86.6 2125,73.2 2124,73.8 2123,86.7 2122,77.1 2121,90.7 2120,76.7 2119,83.2 2118,75 2117,74.8 2116,80.4 2115,78.6 2114,79.5 2113,71.7 2112,72.7 2111,70.6 2110,82.9 2109,78.8 2108,75.5 2107,83.2 2106,74 2105,75.7 2104,80.1 2103,92.2 2102,80.1 2101,80.9 2100,80.8 2099,86.7 2098,81.5 2097,76 2096,72.9 2095,70.2 2094,72.6 2093,73.4 2092,78.5 2091,77.7 2090,67.5 2089,68.1 2088,69.4 2087,67.2 2086,73.4 2085,76.7 2084,82.4 2083,92.6 2082,77.5 2081,76.4 2080,76.4 2079,80.1 2078,75.1 2077,72.7 2076,79 2075,75.2 2074,76.7 2073,77.3 2072,79 2071,76 2070,69.3 2069,69.3 2068,68.2 2067,81.3 2066,74.6 2065,72.8 2064,69.9 2063,70.5 2062,72.9 2061,74.9 2060,83.5 2059,73.4 2058,79.6 2057,71.5 2056,82.9 2055,77.6 2054,75.4 2053,83.6 2052,80.3 2051,79.9 2050,80.5 2049,76.9 2048,72.6 2047,81 2046,74.4 2045,75.1 2044,74.9 2043,87.3 2042,72.1 2041,71.5 2040,80.9 2039,109.8 2038,71.2 2037,77.8 2036,71.5 2035,74.5 2034,78.6 2033,75.1 2032,73.3 2031,71.1 2030,71.7 2029,72 2028,66.5 2027,69.3 2026,81.3 2025,68.2 2024,68.5 2023,67.2 2022,66.4 2021,65.9 2020,66.3 2019,65.6 2018,73.2 2017,69.6 2016,78.9 2015,71 2014,90.8 2013,78 2012,74.6 2011,86.4 2010,73.4 2009,80.5 2008,81 2007,73.2 2006,79.6 2005,69.8 2004,72.7 2003,67.3 2002,69.4 2001,76.9 2000,73.3 1999,71.6 1998,84.1 1997,76.2 1996,77.8 1995,73.7 1994,70.7 1993,78.5 1992,87.6 1991,85 1990,73.5 1989,77.5 1988,75.8 1987,77.7 1986,74.7 1985,75.7 1984,90.8 1983,73.6 1982,82.5 1981,69.5 1980,69 1979,72 1978,74.7 1977,74.4 1976,75.7 1975,74.7 1974,68.4 1973,67.2 1972,66.5 1971,68 1970,72.2 1969,67.4 1968,77.2 1967,68.1 1966,70 1965,64.5 1964,71.3 1963,69.2 1962,67.6 1961,77.3 1960,68.9 1959,75 1958,76.4 1957,80 1956,82.9 1955,96.1 1954,99 1953,117.4 1952,122.2 1951,141.9 1950,148.4 1949,165 1948,173.4 1947,186.4 1946,192.3 1945,202.7 1944,214.6 1943,229.7 1942,236.2 1941,246.1 1940,260.5 1939,275.5 1938,277.3 1937,284.1 1936,307.9 1935,305 1934,325.4 1933,329.6 1932,332.9 1931,335.7 1930,351.5 1929,345.9 1928,347.6 1927,346.3 1926,357.9 1925,361.7 1924,344.2 1923,346.2 1922,347.3 1921,355.4 1920,343.5 1919,357.7 1918,355.3 1917,349.2 1916,357.1 1915,363 1914,353.1 1913,358.1 1912,351 1911,349.1 1910,350 1909,353.9 1908,353.6 1907,354.1 1906,361.8 1905,354 1904,348.4 1903,349.8 1902,345 1901,361.4 1900,356.4 1899,352.8 1898,349.1 1897,350.9 1896,348.6 1895,354.2 1894,357.2 1893,345.5 1892,342.8 1891,341.3 1890,350.3 1889,349 1888,350.6 1887,349.8 1886,345.2 1885,347.1 1884,351.4 1883,355.5 1882,341.2 1881,354.9 1880,352.7 1879,362.6 1878,350.7 1877,356.9 1876,364.5 1875,356.1 1874,356.4 1873,357.3 1872,353.2 1871,359.8 1870,354.7 1869,354.7 1868,356.3 1867,359.8 1866,351.7 1865,350.7 1864,349.8 1863,356.6 1862,349.1 1861,349.5 1860,348.4 1859,346.2 1858,342.2 1857,351.5 1856,356.9 1855,346.6 1854,339.8 1853,352.3 1852,335.5 1851,341.4 1850,334.3 1849,335.3 1848,339.5 1847,334.7 1846,331.8 1845,341.1 1844,334.7 1843,343.5 1842,340.1 1841,336.9 1840,338.5 1839,337.1 1838,359.1 1837,343.5 1836,354 1835,349.2 1834,362.2 1833,349.1 1832,357.1 1831,359.7 1830,354.8 1829,360.4 1828,362.3 1827,351.2 1826,347.3 1825,347.8 1824,348.7 1823,349.1 1822,353.2 1821,351.3 1820,355.6 1819,347 1818,349 1817,341.5 1816,352.7 1815,355.8 1814,351.2 1813,349.8 1812,351.2 1811,361.6 1810,353.9 1809,348.1 1808,349.8 1807,347.3 1806,350.9 1805,346.7 1804,354.2 1803,347 1802,347 1801,350.1 1800,360.9 1799,343.1 1798,342.1 1797,343.7 1796,338.6 1795,352.5 1794,352.5 1793,345.8 1792,347.8 1791,355.6 1790,346.6 1789,355.6 1788,357 1787,344.3 1786,345.1 1785,342.8 1784,344.4 1783,348.5 1782,352 1781,346.6 1780,349.2 1779,342.6 1778,343.4 1777,349.6 1776,353 1775,369.9 1774,348.9 1773,346.9 1772,346.9 1771,362 1770,351.1 1769,346 1768,348.8 1767,349.1 1766,357.6 1765,358.7 1764,347.7 1763,349.4 1762,352.8 1761,366.8 1760,350.7 1759,347.8 1758,345.4 1757,349 1756,348.6 1755,354.6 1754,357 1753,345.9 1752,347 1751,351.2 1750,349 1749,350.6 1748,347.1 1747,346.3 1746,345.5 1745,356 1744,348.8 1743,356.1 1742,348.8 1741,343.1 1740,340.3 1739,341.2 1738,351.8 1737,343.4 1736,327.2 1735,309.3 1734,304.8 1733,317.1 1732,336.5 1731,344.2 1730,344.9 1729,348.9 1728,356.9 1727,347.4 1726,350.3 1725,356.8 1724,351.8 1723,357.2 1722,354.9 1721,353 1720,351.1 1719,358.4 1718,355.7 1717,352.7 1716,352.4 1715,351.2 1714,352.5 1713,357.7 1712,351.4 1711,359.3 1710,359.6 1709,351.7 1708,351.3 1707,346 1706,354.5 1705,345 1704,343.1 1703,349.1 1702,346.9 1701,347.5 1700,350.2 1699,349.4 1698,351.5 1697,356 1696,346.5 1695,347.1 1694,345.8 1693,352.7 1692,351 1691,355.4 1690,354.7 1689,349.3 1688,359.8 1687,346.4 1686,354.1 1685,349.9 1684,347.2 1683,351.3 1682,352.7 1681,353.3 1680,350 1679,348.7 1678,352.8 1677,354.4 1676,355.6" fill="#00e4e4" stroke="#00e4e4" stroke-width="1" stroke-linejoin="round" />
<polygon points="1676,338.2 1677,339.4 1678,344.1 1679,337.7 1680,341.3 1681,340.2 1682,340.1 1683,336.1 1684,346.9 1685,351.5 1686,350.4 1687,350.8 1688,347.1 1689,348.4 1690,345.7 1691,352.9 1692,342.2 1693,359.3 1694,356.2 1695,352.4 1696,350.8 1697,345.3 1698,340.7 1699,353.1 1700,353.8 1701,354 1702,349.3 1703,354 1704,350.8 1705,353.4 1706,352.9 1707,349.7 1708,347.6 1709,356.2 1710,357.3 1711,358.3 1712,359.9 1713,350.1 1714,351.6 1715,349.6 1716,358.3 1717,358.8 1718,353.4 1719,345.8 1720,350.9 1721,349 1722,348.1 1723,336.5 1724,343.8 1725,350.1 1726,352.5 1727,351.6 1728,343.7 1729,341.9 1730,343.8 1731,335.8 1732,349.1 1733,342.6 1734,327.8 1735,319.4 1736,317.6 1737,338.2 1738,351.3 1739,339.2 1740,352.6 1741,353 1742,338.5 1743,345.6 1744,350.4 1745,346.4 1746,355.1 1747,354 1748,347.3 1749,338.3 1750,349.3 1751,346.1 1752,351.3 1753,351.1 1754,346.2 1755,347.7 1756,341.7 1757,347.5 1758,356.9 1759,352.8 1760,356.5 1761,356.6 1762,357.3 1763,336.5 1764,354 1765,333.3 1766,355.1 1767,358.6 1768,354.3 1769,355.2 1770,345.8 1771,346.9 1772,338.1 1773,336.8 1774,341.4 1775,353.6 1776,344.8 1777,342.9 1778,352.1 1779,340.3 1780,346.4 1781,348.8 1782,332.7 1783,346 1784,348.6 1785,355.9 1786,356.1 1787,352 1788,346.1 1789,347.4 1790,348.7 1791,348.4 1792,347.5 1793,339.6 1794,349.3 1795,351.1 1796,347.7 1797,350.8 1798,348.1 1799,345.6 1800,322.8 1801,348.5 1802,348.4 1803,348.3 1804,353.2 1805,348 1806,349.3 1807,333.4 1808,352 1809,355.6 1810,342.2 1811,354.6 1812,357.1 1813,356.7 1814,348.5 1815,359.7 1816,356.6 1817,350.5 1818,352.7 1819,352.3 1820,351.7 1821,350.7 1822,351.8 1823,339.2 1824,343.9 1825,351.9 1826,348 1827,349.3 1828,354 1829,344.6 1830,343.9 1831,353 1832,340.2 1833,349.6 1834,351.4 1835,349.9 1836,344.9 1837,341.5 1838,343.1 1839,338.9 1840,352.6 1841,344.9 1842,345.9 1843,330.7 1844,351.3 1845,348.3 1846,345.6 1847,334.3 1848,350.4 1849,330.5 1850,355.9 1851,354.1 1852,355.6 1853,351.6 1854,357.3 1855,354 1856,354.5 1857,339 1858,351 1859,347.4 1860,351.1 1861,350.9 1862,357.2 1863,358.6 1864,343.8 1865,351.6 1866,347.5 1867,332.8 1868,346.8 1869,340.4 1870,344.5 1871,349.8 1872,354.9 1873,340.9 1874,349.4 1875,347.5 1876,336.1 1877,349.4 1878,350.5 1879,343 1880,348.7 1881,349 1882,353.2 1883,353.3 1884,355.2 1885,355 1886,348 1887,355.5 1888,358.7 1889,363.3 1890,363.6 1891,358.3 1892,356.7 1893,362.5 1894,350 1895,352.2 1896,347.1 1897,354.2 1898,350.9 1899,355.6 1900,346.1 1901,354.1 1902,351.2 1903,339.1 1904,352 1905,338.5 1906,342.7 1907,346.6 1908,345.5 1909,348.8 1910,337.4 1911,347.9 1912,353.5 1913,345.8 1914,347 1915,346.7 1916,349.8 1917,352.1 1918,351.1 1919,352.5 1920,351.9 1921,354.5 1922,352.6 1923,353.9 1924,353.5 1925,347 1926,350.1 1927,348.8 1928,349.3 1929,351.5 1930,345.5 1931,346.9 1932,349.2 1933,352.8 1934,345.1 1935,328.2 1936,328.5 1937,327 1938,319.7 1939,303.3 1940,288 1941,290.4 1942,274.2 1943,265.2 1944,260.1 1945,248.6 1946,235 1947,226.2 1948,209.5 1949,197.2 1950,191.6 1951,189.8 1952,175.2 1953,158.2 1954,156.2 1955,131.8 1956,127.6 1957,122.9 1958,108.9 1959,111.3 1960,97 1961,80 1962,100.5 1963,98.3 1964,99.6 1965,83.9 1966,88.4 1967,92 1968,96.4 1969,76.6 1970,91.7 1971,78.1 1972,83.9 1973,81.7 1974,86.4 1975,74.9 1976,79.8 1977,80.2 1978,69.8 1979,77.9 1980,79 1981,69.1 1982,63.5 1983,64.1 1984,50.8 1985,69.2 1986,69.7 1987,67.3 1988,70.3 1989,70.2 1990,67.7 1991,70.7 1992,74 1993,80.7 1994,73.5 1995,61.3 1996,71.9 1997,75 1998,77.1 1999,73.4 2000,58.5 2001,67.1 2002,59.6 2003,63.1 2004,65 2005,74.6 2006,76.9 2007,65.3 2008,62.6 2009,68.6 2010,68.6 2011,69.4 2012,64.8 2013,40.4 2014,66.5 2015,68.3 2016,66.6 2017,46.3 2018,62.3 2019,65.3 2020,62.1 2021,67.2 2022,58.5 2023,49.5 2024,7.4 2025,72.2 2026,68.4 2027,59.5 2028,64.4 2029,51.2 2030,65.6 2031,67.5 2032,39.7 2033,63 2034,69 2035,46 2036,68.7 2037,70.7 2038,69.5 2039,71.8 2040,68.2 2041,62.5 2042,69.1 2043,81.5 2044,85.1 2045,79.4 2046,79.5 2047,75.6 2048,70.6 2049,64.5 2050,77.1 2051,80.9 2052,76.3 2053,67.3 2054,77.4 2055,70.6 2056,68.7 2057,78.5 2058,68.4 2059,77.8 2060,70.3 2061,71.8 2062,70.5 2063,78.9 2064,79 2065,79.3 2066,67.5 2067,66.2 2068,76.7 2069,27.8 2070,76.3 2071,66.9 2072,57 2073,60.3 2074,60.5 2075,56.2 2076,71.3 2077,71.5 2078,60.8 2079,68 2080,74.5 2081,72.6 2082,62.9 2083,59 2084,74.5 2085,65.5 2086,78.4 2087,68 2088,60.7 2089,77.9 2090,66.1 2091,75.3 2092,74.4 2093,74.6 2094,43.3 2095,65.4 2096,63.2 2097,73.2 2098,70.7 2099,71.5 2100,65.1 2101,55.1 2102,66.9 2103,61.8 2104,72.6 2105,68.1 2106,70.5 2107,71.1 2108,68.2 2109,55 2110,71.1 2111,67.1 2112,70.6 2113,63.1 2114,79.5 2115,83.7 2116,86.1 2117,100.3 2118,100.5 2119,127.3 2120,142 2121,148.2 2122,162.2 2123,176.2 2124,167.4 2125,202 2126,202 2127,218.9 2128,238.1 2129,253.2 2130,258.2 2131,274.2 2132,290.8 2133,300.5 2134,303.3 2135,310.6 2136,319.6 2137,332.5 2138,333.4 2139,311 2140,341.3 2141,327.2 2142,321.1 2143,335.8 2144,340.7 2145,341.1 2146,341.2 2147,334.2 2148,336 2149,344.2 2150,334.9 2151,339.9 2152,345.8 2153,343.9 2154,345 2155,345.6 2156,347.4 2157,344.9 2158,354.3 2159,354.1 2160,356.9 2161,350.6 2162,349.3 2163,349.6 2164,341.4 2165,352.3 2166,349.4 2167,345.2 2168,349.7 2169,349.2 2170,348.9 2171,353.5 2172,353.5 2173,353.6 2174,348.5 2175,354.6 2176,353.9 2177,352.9 2178,345.7 2179,355.8 2180,352 2181,355.5 2182,354.9 2183,352.4 2184,352.5 2185,350.6 2186,352.6 2187,347.7 2188,352.8 2189,347.2 2190,351.8 2191,356.7 2192,351.2 2193,357.1 2194,349.5 2195,355.6 2196,347.4 2197,351.1 2198,356.9 2199,349.6 2200,351.3 2201,344.7 2202,353.8 2203,340.4 2204,336.1 2205,359.6 2206,350.8 2207,356.3 2208,360.7 2209,352.1 2210,341.6 2211,361.7 2212,356.8 2213,361.8 2214,351 2215,351.3 2216,359.7 2217,357 2218,360.1 2219,355 2220,344.1 2221,347.5 2222,345.9 2223,352.3 2224,350.1 2225,357.9 2226,349.6 2227,355.2 2228,358 2229,356.5 2230,359.6 2231,360.8 2232,359.2 2233,349.4 2234,356.2 2235,353.7 2236,355.5 2237,361.9 2238,361.6 2239,355.3 2240,355.6 2241,364.2 2242,340.5 2243,358.4 2244,363.7 2245,359.1 2246,363.3 2247,363.4 2248,351.9 2249,360.8 2250,356.7 2251,356 2252,355 2253,354.4 2254,331.7 2255,344.3 2256,340.4 2257,350 2258,345.2 2259,347.9 2260,345.8 2261,350.1 2262,344 2263,343.3 2264,350.2 2265,352.6 2266,348.7 2267,355 2268,357.4 2269,357.7 2270,358 2271,358.5 2272,347.7 2273,346.2 2274,359 2275,346.8 2276,356 2277,355.7 2278,343 2279,332 2280,318.3 2281,333.9 2282,348.1 2283,346.9 2284,353.5 2285,357.8 2286,357.8 2287,358.2 2288,361 2289,360.3 2290,361.2 2291,358.3 2292,360.8 2293,353.2 2294,348.2 2295,351.3 2296,353.6 2297,343.9 2298,352.7 2299,342.2 2300,344.7 2301,346.5 2302,344.9 2303,349.2 2304,350.6 2305,355.3 2306,352.2 2307,353.9 2308,354.1 2309,357.1 2310,357.5 2311,351 2312,350.5 2313,354.1 2314,350 2315,344 2316,348.4 2317,352.2 2318,344.3 2319,347 2320,340.8 2321,343.2 2322,355.6 2323,351.5 2324,348.9 2325,357.1 2326,349.7 2327,353.9 2328,352.9 2329,356.5 2330,340.9 2331,350 2332,351.6 2333,358.8 2334,358.2 2335,342.7 2336,349.1 2337,347.7 2338,335.2 2339,351.9 2340,348.8 2341,352.3 2342,350.1 2343,341.8 2344,356.6 2345,348.4 2346,344.7 2347,352.1 2348,347.3 2349,345 2350,355.6 2351,355.4 2352,355.8 2353,355.6 2354,357.2 2355,357.5 2356,354.3 2357,358.3 2358,351.4 2359,358.5 2360,356.1 2361,349.8 2362,350.8 2363,358.1 2364,357.7 2365,349.5 2366,358.2 2367,359.1 2368,352.6 2369,354.4 2370,346.2 2371,349.7 2372,357.3 2373,357.2 2374,354.7 2375,356.5 2376,357.2 2377,353.9 2378,352.6 2379,355.1 2380,357.7 2381,358.2 2382,360.3 2383,354 2384,349.3 2385,357.7 2386,357.6 2387,342.3 2388,357.5 2389,352.5 2390,353 2391,343.8 2392,347.3 2393,354.7 2394,351.9 2395,352.6 2396,348 2397,344.5 2398,345.1 2399,346.7 2400,346.2 2401,336.6 2402,355 2403,350.6 2404,343.6 2405,336.2 2406,353.3 2407,352.4 2408,346 2409,357.1 2410,353.4 2411,354.5 2412,351.9 2413,345.1 2414,348.2 2415,354.3 2416,335.9 2417,349.4 2418,354.6 2419,339.9 2420,350.3 2421,339.8 2422,348 2423,350.2 2424,351.4 2425,349.5 2426,341 2427,345.2 2428,349.6 2429,344.5 2430,356.3 2431,349.5 2432,349.6 2433,352.9 2434,354.8 2435,340.3 2436,358.1 2437,352.3 2438,350.7 2439,339.6 2440,353.8 2441,358.3 2442,354.9 2443,351.3 2444,339.8 2445,351.7 2446,353.8 2447,352.3 2448,344.3 2449,351.2 2450,355.6 2451,348.4 2452,347.5 2453,353.3 2454,348 2455,346.5 2456,345.5 2457,345.9 2458,336.9 2459,353.5 2460,351.1 2461,349.1 2462,352.5 2463,352.8 2464,338.2 2465,350.7 2466,343.4 2467,337.3 2468,354.2 2469,346.7 2470,339.1 2471,344.4 2472,349.6 2473,349.5 2474,347.7 2475,344.8 2476,343.5 2477,348.3 2478,341.8 2479,343.2 2480,327.3 2481,320.3 2482,303 2483,300.1 2484,292 2485,292.3 2486,277.7 2487,246.6 2488,269.7 2489,236.9 2490,237.1 2491,237.8 2492,217.7 2493,204.1 2494,209 2495,182.7 2496,171.8 2497,171 2498,162.4 2499,155.1 2500,135.6 2501,129.4 2502,113.2 2503,105.4 2504,100.9 2505,100.2 2506,103.6 2507,92.4 2508,95.9 2509,100.5 2510,92.5 2511,93.7 2512,77.9 2513,90.8 2514,90.4 2515,83.5 2516,78.8 2517,86.5 2518,86.7 2519,77.2 2520,84.1 2521,85 2522,70.2 2523,81.6 2524,82.7 2525,77.9 2526,80.7 2527,67.8 2528,79.1 2529,80.8 2530,77.9 2531,74.5 2532,81.2 2533,74.6 2534,59.8 2535,65.5 2536,69.5 2537,53.4 2538,70 2539,71.9 2540,70.7 2541,62.2 2542,66.2 2543,73.5 2544,73.7 2545,55 2546,69.3 2547,68.9 2548,70 2549,55.9 2550,52.7 2551,69.7 2552,64.8 2553,67.8 2554,66.8 2555,65.2 2556,36.1 2557,64.8 2558,58.6 2559,66.7 2560,61 2561,47.2 2562,67.2 2563,63.6 2564,61 2565,67.8 2566,67.2 2567,43.8 2568,65.3 2569,73.6 2570,74.2 2571,61.8 2572,66.7 2573,62.9 2574,71.6 2575,64.3 2576,77.1 2577,69.1 2578,74.7 2579,71.8 2580,69.6 2581,75.4 2582,61.7 2583,71 2584,78.7 2585,80.2 2586,72.9 2587,63.9 2588,67.6 2589,70.3 2590,65.9 2591,73 2592,56.2 2593,76.1 2594,83.5 2595,75.1 2596,86.3 2597,79.9 2598,69.5 2599,84 2600,90.9 2601,79 2602,82.1 2603,73.1 2604,82.4 2605,80.3 2606,85.5 2607,87.4 2608,76.2 2609,84.9 2610,79.1 2611,77.2 2612,75.7 2613,73 2614,80.5 2615,69.3 2616,60.3 2617,75.3 2618,58.6 2619,48.9 2620,72 2621,76.9 2622,74.2 2623,70 2624,67.8 2625,76.2 2626,74.6 2627,74.2 2628,70.8 2629,77.2 2630,75.9 2631,72 2632,74.2 2633,73.8 2634,67.6 2635,67.2 2636,75.6 2637,73.5 2638,68.4 2639,66.2 2640,63.5 2641,57.5 2642,66.6 2643,65.8 2644,67.2 2645,69.7 2646,63.5 2647,72.2 2648,59.3 2649,65.5 2650,70.2 2651,71.9 2652,70.7 2653,67.9 2654,56.3 2655,53.1 2656,33.9 2657,71.5 2658,63.9 2659,83.2 2660,95.4 2661,85.9 2662,106.6 2663,135.7 2664,140.1 2665,162.8 2666,177.5 2667,185.5 2668,187.4 2669,208.7 2670,224.5 2671,236.8 2672,246.6 2673,261.4 2674,272 2675,275.5 2676,289.2 2677,304.6 2678,311.5 2679,324.8 2680,321.1 2681,334.1 2682,338.7 2683,328.9 2684,339.9 2685,334.2 2686,339.2 2687,342.9 2688,340.8 2689,343.5 2690,339.4 2691,346.3 2692,347.5 2693,339.7 2694,336 2695,344.7 2696,341 2697,352.1 2698,338.4 2699,342.7 2700,345.3 2701,355.9 2702,342.6 2703,354.9 2704,353.6 2705,353.9 2706,349 2707,353.1 2708,350.2 2709,360 2710,353.7 2711,359.1 2712,354.5 2713,354.7 2714,351.5 2715,356.1 2716,355.6 2717,348 2718,359.1 2719,359 2720,349.5 2721,336.2 2722,350.3 2723,357 2724,350.9 2725,340.9 2726,356 2727,354.7 2728,352.2 2729,354.9 2730,353.9 2731,354.4 2732,355.1 2733,360.8 2734,352.7 2735,364.5 2736,359.9 2737,365.6 2738,359 2739,364.3 2740,354.6 2741,358.1 2742,363.9 2743,347.7 2744,356 2745,356 2746,357.7 2747,360.4 2748,358.6 2749,356.6 2750,356.3 2751,338.2 2752,348.3 2753,355.1 2754,341.7 2755,351.2 2756,358.9 2757,350.6 2758,356.4 2759,348.8 2760,359.7 2761,350.7 2762,352.9 2763,357.7 2764,349.3 2765,350.1 2766,358.3 2767,354.6 2768,360.7 2769,358.3 2770,348.4 2771,356 2772,354.4 2773,339.6 2774,346.9 2775,340.9 2776,346.7 2777,348 2778,355.6 2779,351.3 2780,351.3 2781,345.2 2782,351 2783,351.3 2784,352.7 2785,349 2786,352.2 2787,354.8 2788,353.5 2789,356.3 2790,358.3 2791,357.9 2792,358.7 2793,357.9 2794,360.6 2795,356.5 2796,357.1 2797,351 2798,350.7 2799,347.8 2800,355.3 2801,341.3 2802,356.2 2803,340.5 2804,347.2 2805,352.3 2806,348.3 2807,342.6 2808,354.4 2809,348.9 2810,358.4 2811,356.6 2812,354.3 2813,356.5 2814,358.3 2815,342.2 2816,350.9 2817,352.7 2818,352.4 2819,352 2820,354 2821,351.4 2822,339.8 2823,325.1 2824,306 2825,317 2826,329.8 2827,341.1 2828,346.6 2829,350.6 2830,345.8 2831,337.4 2832,340.2 2833,347.8 2834,348.3 2835,349.3 2836,346.6 2837,346.5 2838,355.8 2839,353.4 2840,352.4 2841,348.2 2842,354.1 2843,349.8 2844,329.6 2845,347.5 2846,348.5 2847,342.2 2848,349.6 2849,340.9 2850,348.3 2851,332.1 2852,342.5 2853,330.5 2854,350.4 2855,352.7 2856,346.5 2857,341.6 2858,348 2859,343.5 2860,347.5 2861,347.3 2862,349.5 2863,352 2864,348.7 2865,345.5 2866,331.7 2867,351.1 2868,351.1 2869,354.1 2870,348.3 2871,345.8 2872,341 2873,354.5 2874,339.3 2875,349.7 2876,355 2877,346.9 2878,350.5 2879,353.1 2880,348.5 2881,337 2882,348.1 2883,347.4 2884,353.3 2885,356.4 2886,354.6 2887,355.8 2888,358.1 2889,360.6 2890,348.9 2891,355.1 2892,353.5 2893,347.9 2894,350.8 2895,347.5 2896,351.1 2897,351.7 2898,353 2899,341.1 2900,348.4 2901,325.6 2902,348.1 2903,347.9 2904,352.3 2905,340.6 2906,355.2 2907,350.6 2908,353 2909,353.1 2910,349.1 2911,348.2 2912,337.1 2913,355.6 2914,345.7 2915,351.4 2916,356.8 2917,349.2 2918,335.6 2919,341.7 2920,350.6 2921,343.5 2922,354.3 2923,350.2 2924,350.3 2925,352.1 2926,356.6 2927,356 2928,355.1 2929,353.8 2930,356 2931,356.3 2932,358.1 2933,361 2934,360.6 2935,356.4 2936,361.4 2937,355.9 2938,353.2 2939,359.3 2940,356.6 2941,350 2942,348.8 2943,344.4 2944,350.1 2945,344.3 2946,351.2 2947,349.3 2948,341.6 2949,353.2 2950,347.7 2951,349.7 2952,349.6 2953,348.3 2954,356.8 2955,352.8 2956,347.1 2957,353.7 2958,357.2 2959,360.2 2960,356.4 2961,359.7 2962,354.4 2963,351.2 2964,358.2 2965,357.7 2966,353.9 2967,351.9 2968,330.1 2969,352.6 2970,355.5 2971,355.9 2972,356.8 2973,357.5 2974,352.2 2975,333.1 2976,357 2977,352.5 2978,355.6 2979,350.7 2980,354.5 2981,356.4 2982,353.3 2983,343.7 2984,332.7 2985,345.1 2986,350.1 2987,346.9 2988,350.8 2989,338 2990,350.3 2991,350.5 2992,348.8 2993,345.3 2994,347 2995,342.6 2996,347.8 2997,343.6 2998,348.5 2999,354.8 3000,345.2 3001,345.9 3002,348.3 3003,352.9 3004,344.8 3005,346.5 3006,357.5 3007,356.9 3008,356.6 3009,352.6 3010,348.1 3011,352.3 3012,342.8 3013,345.9 3014,352.5 3015,358.6 3016,358 3017,352.7 3018,345.4 3019,351.9 3020,350.6 3021,346 3022,338.3 3023,323.7 3024,323.4 3025,314.2 3026,298.7 3027,294.1 3028,282.2 3029,263.2 3030,263 3031,253.7 3032,245.2 3033,236.4 3034,220 3035,211.4 3036,209.3 3037,193.4 3038,192.4 3039,170.4 3040,165.7 3041,148.2 3042,146.5 3043,143.4 3044,127.9 3045,121.3 3046,111.2 3047,108.3 3048,98.7 3049,92.3 3050,84.7 3051,93.6 3052,89.4 3053,93.3 3054,88.7 3055,88.6 3056,90 3057,82.9 3058,61.2 3059,83 3060,82 3061,63.9 3062,80.7 3063,70.3 3064,87.3 3065,85.1 3066,87.1 3067,81.8 3068,84 3069,82.5 3070,75.6 3071,81.7 3072,80.5 3073,87.5 3074,76.8 3075,67.1 3076,65.6 3077,83.5 3078,81.4 3079,68.3 3080,74.5 3081,79.6 3082,61.1 3083,62.3 3084,78.6 3085,80.7 3086,76.3 3087,71.6 3088,76.9 3089,80.5 3090,73.1 3091,67.6 3092,76.9 3093,71.1 3094,65 3095,67.2 3096,70 3097,67.2 3098,70.3 3099,67.6 3100,60.9 3101,64.5 3102,66.7 3103,54.8 3104,52.3 3105,54.1 3106,63.8 3107,67.9 3108,56.4 3109,51.1 3110,70.2 3111,71.6 3112,57.9 3113,50.8 3114,63.3 3115,69 3116,59.4 3117,71.9 3118,60.6 3119,57.4 3120,72.5 3121,78.5 3122,77.4 3123,77.5 3124,66.3 3125,74.6 3126,70.3 3127,70.7 3128,68.1 3129,68.9 3130,50.4 3131,72.1 3132,65 3133,77.5 3134,76.5 3135,62.2 3136,71.4 3137,68.4 3138,68.6 3139,74.2 3140,71.9 3141,64.6 3142,67.4 3143,72.5 3144,69.6 3145,43.9 3146,69.3 3147,69.2 3148,51.1 3149,59.3 3150,65.4 3151,46.3 3152,49.8 3153,64.4 3154,62.5 3155,54.2 3156,56.7 3157,66.1 3158,71.8 3159,70.3 3160,77.8 3161,68.9 3162,65.5 3163,72.4 3164,77.7 3165,72.8 3166,61.2 3167,72.2 3168,69.4 3169,79.3 3170,72.3 3171,75 3172,76 3173,72.8 3174,60.4 3175,75.4 3176,65.2 3177,74.6 3178,69.5 3179,53.6 3180,80.5 3181,73 3182,62.6 3183,79.1 3184,70.7 3185,70.7 3186,76.6 3187,63.3 3188,71.6 3189,45 3190,63.9 3190,90.9 3189,93 3188,92.1 3187,107.7 3186,103 3185,97 3184,103.2 3183,107.4 3182,106 3181,104 3180,99 3179,102 3178,109.6 3177,98.7 3176,107.5 3175,100.4 3174,95.6 3173,106.2 3172,98.4 3171,139.6 3170,111.6 3169,105.3 3168,124.9 3167,116 3166,100.4 3165,106.9 3164,98.4 3163,106.4 3162,99.5 3161,101.6 3160,112.4 3159,98.3 3158,105.6 3157,91.8 3156,90.9 3155,90.4 3154,96 3153,92.5 3152,92.2 3151,85.9 3150,105 3149,86.9 3148,107.5 3147,93.5 3146,90.9 3145,87.8 3144,93.9 3143,106.6 3142,94.7 3141,99.5 3140,99.8 3139,104.9 3138,99.1 3137,99.9 3136,111.5 3135,104.3 3134,99.4 3133,99.8 3132,101.9 3131,100.1 3130,106.1 3129,98.7 3128,100.3 3127,98 3126,104.3 3125,112.2 3124,100.2 3123,105.9 3122,102.1 3121,112.9 3120,107 3119,97.3 3118,111.5 3117,95.4 3116,103.3 3115,100.2 3114,106.9 3113,100.9 3112,123.1 3111,106.7 3110,99.5 3109,98.5 3108,93.5 3107,106.5 3106,98.9 3105,89.2 3104,93.9 3103,92.7 3102,112.7 3101,92.8 3100,92 3099,93.8 3098,94.9 3097,106.2 3096,94.7 3095,111.5 3094,97.6 3093,104.5 3092,101.5 3091,97.5 3090,107.9 3089,99.1 3088,115.5 3087,98.7 3086,106.8 3085,108.6 3084,107.6 3083,121.9 3082,113.2 3081,102.9 3080,102.7 3079,102.1 3078,102.4 3077,102 3076,126.5 3075,121.6 3074,119.3 3073,106.7 3072,111.1 3071,120.2 3070,109.1 3069,108.7 3068,123.2 3067,123.5 3066,110.7 3065,104 3064,121.3 3063,111.9 3062,111 3061,109.5 3060,121.2 3059,116 3058,109.6 3057,129.7 3056,123.3 3055,125.7 3054,126.5 3053,123.8 3052,118.1 3051,134.9 3050,129.7 3049,123.5 3048,125.8 3047,143.1 3046,145.6 3045,161.2 3044,166.7 3043,160.6 3042,176.4 3041,202.4 3040,201 3039,203.4 3038,226 3037,226.3 3036,228.6 3035,242.7 3034,248.7 3033,257.3 3032,263.6 3031,277 3030,292 3029,301.4 3028,314.9 3027,318.3 3026,327.6 3025,333.9 3024,350 3023,352.2 3022,365.7 3021,374.5 3020,374.2 3019,379.4 3018,375.5 3017,378 3016,375 3015,374.4 3014,390.3 3013,375.1 3012,379.4 3011,373.9 3010,370.9 3009,378.4 3008,385.4 3007,378.2 3006,376.8 3005,372.9 3004,376.5 3003,370.3 3002,367.3 3001,367.9 3000,372.1 2999,380 2998,370.5 2997,368.6 2996,366.3 2995,362.8 2994,377.5 2993,362.3 2992,362.1 2991,367.6 2990,371.2 2989,372.7 2988,363.5 2987,366.2 2986,368.1 2985,373.8 2984,369.6 2983,383.5 2982,374.2 2981,379.7 2980,386.4 2979,372.6 2978,374.7 2977,377.6 2976,378.1 2975,379.5 2974,376.9 2973,370.1 2972,379.1 2971,371.7 2970,377.7 2969,377.6 2968,379.8 2967,376.7 2966,374.4 2965,373.2 2964,370.5 2963,381.9 2962,382.4 2961,374.6 2960,374.8 2959,375.2 2958,384.2 2957,387.3 2956,383.3 2955,377.7 2954,380.5 2953,376.6 2952,370.1 2951,364.8 2950,375.2 2949,369.3 2948,374 2947,375.8 2946,385.6 2945,369.5 2944,369.2 2943,369.5 2942,370.6 2941,372.2 2940,381 2939,377.4 2938,372.5 2937,386.1 2936,376.9 2935,372.4 2934,379.8 2933,382.7 2932,375.2 2931,378.9 2930,373.6 2929,374.8 2928,393.5 2927,373.9 2926,391 2925,374.8 2924,381 2923,381.2 2922,368.8 2921,369.6 2920,374.4 2919,369.2 2918,373.1 2917,370.5 2916,372.9 2915,380.7 2914,377.2 2913,373.7 2912,373.4 2911,366.7 2910,370.3 2909,376.5 2908,371.9 2907,379.2 2906,375.5 2905,377.4 2904,371.2 2903,363 2902,363.7 2901,367.8 2900,367.1 2899,366.5 2898,369.7 2897,372.3 2896,376.2 2895,385.8 2894,376.8 2893,375.5 2892,378.6 2891,371.4 2890,370.1 2889,381.9 2888,377.6 2887,387.8 2886,387.6 2885,373.9 2884,371 2883,372.8 2882,367.2 2881,394.6 2880,378.1 2879,387.2 2878,378.3 2877,373.3 2876,373.7 2875,370.2 2874,371.8 2873,386.1 2872,375.9 2871,375.6 2870,369.3 2869,373.2 2868,378.7 2867,377 2866,374.3 2865,368.1 2864,369.3 2863,376.9 2862,371.1 2861,366.2 2860,376.2 2859,373.4 2858,377.1 2857,366.6 2856,365.9 2855,369.3 2854,373.5 2853,368.2 2852,368.8 2851,368.7 2850,363.5 2849,362.8 2848,366 2847,375.3 2846,367.2 2845,365.7 2844,379.9 2843,369.5 2842,373.9 2841,382.1 2840,371.3 2839,373.8 2838,372.4 2837,372.2 2836,381.2 2835,370.2 2834,363.7 2833,367.5 2832,376.4 2831,364 2830,363 2829,368 2828,366.8 2827,368 2826,360.5 2825,338.6 2824,337.3 2823,346.7 2822,369.2 2821,373.2 2820,400.7 2819,375.3 2818,375.1 2817,379.3 2816,372.9 2815,375.3 2814,377.3 2813,383.3 2812,376.7 2811,384.8 2810,379.7 2809,374.8 2808,375.5 2807,379 2806,377 2805,372.6 2804,375.4 2803,377.8 2802,375.8 2801,369.9 2800,378 2799,370.7 2798,373.8 2797,374.8 2796,376.2 2795,383.9 2794,380.2 2793,378.1 2792,378.8 2791,377 2790,375.1 2789,376.6 2788,375.8 2787,377.9 2786,372.2 2785,374 2784,368.9 2783,372.7 2782,379.5 2781,366.7 2780,374.9 2779,368.5 2778,380.8 2777,371.4 2776,369 2775,373.3 2774,374 2773,376.3 2772,373.3 2771,377.7 2770,371.6 2769,387.9 2768,386.2 2767,378.4 2766,385.1 2765,375.5 2764,370.2 2763,378.1 2762,371.8 2761,378.4 2760,374.1 2759,378.8 2758,378.8 2757,380.4 2756,379.3 2755,376.2 2754,371.7 2753,376.8 2752,382 2751,379.4 2750,376.2 2749,384.1 2748,377.6 2747,377.6 2746,391.8 2745,375.3 2744,375.5 2743,387.3 2742,397.2 2741,387.2 2740,378 2739,378.9 2738,387.7 2737,389 2736,384.5 2735,386.3 2734,379.3 2733,378.6 2732,374.8 2731,384 2730,377 2729,379.5 2728,372.1 2727,380.2 2726,369.3 2725,372.5 2724,376.2 2723,372.5 2722,372.6 2721,374 2720,382.9 2719,375.7 2718,374.6 2717,375.2 2716,381.6 2715,378.8 2714,380.3 2713,377.5 2712,383.7 2711,378.1 2710,373.3 2709,386.6 2708,381.7 2707,377.2 2706,376 2705,373.5 2704,375.6 2703,377.3 2702,373.5 2701,381.2 2700,374.1 2699,365.1 2698,373.1 2697,366.6 2696,372.4 2695,372.1 2694,366.7 2693,365 2692,367.7 2691,369 2690,361.1 2689,357.6 2688,363.7 2687,358.2 2686,370.5 2685,360.9 2684,363.6 2683,360 2682,352 2681,347.9 2680,345.3 2679,348.2 2678,328.2 2677,325.5 2676,310.8 2675,302.8 2674,289.5 2673,277.1 2672,267.4 2671,255.7 2670,245.5 2669,234.4 2668,220.1 2667,210.6 2666,194.9 2665,189.8 2664,171.4 2663,157.5 2662,150.3 2661,148.5 2660,128.2 2659,120.7 2658,101.1 2657,105 2656,96.6 2655,97 2654,103.5 2653,99.5 2652,102.8 2651,96.3 2650,91.5 2649,97 2648,97.4 2647,100.3 2646,98.4 2645,89.8 2644,93.9 2643,103.5 2642,96.2 2641,110.2 2640,92 2639,106.9 2638,100.8 2637,99.2 2636,99.8 2635,107.4 2634,98.6 2633,109.9 2632,107.5 2631,114.8 2630,100.8 2629,99.6 2628,118.5 2627,106.9 2626,117.9 2625,106.7 2624,102.5 2623,99.8 2622,109.1 2621,97.4 2620,109.5 2619,97.1 2618,111.1 2617,132.2 2616,108.7 2615,120.5 2614,106.3 2613,106.9 2612,105.1 2611,106 2610,107.8 2609,126.3 2608,107.9 2607,111.2 2606,112.3 2605,127.6 2604,128.7 2603,119.5 2602,119.9 2601,122.5 2600,111.7 2599,114.5 2598,111.1 2597,122.4 2596,114.4 2595,110.7 2594,106.7 2593,113.8 2592,110.7 2591,98.9 2590,109.2 2589,98.1 2588,119.9 2587,107.6 2586,107.2 2585,100.2 2584,100.6 2583,103.4 2582,96 2581,94.4 2580,113.2 2579,125.4 2578,101.8 2577,98.8 2576,100.2 2575,105.6 2574,104.8 2573,101.1 2572,97.8 2571,95.3 2570,113.8 2569,97 2568,102.9 2567,98.6 2566,96.9 2565,99.6 2564,93.5 2563,97.1 2562,91.3 2561,85.7 2560,96.8 2559,95.9 2558,95.8 2557,93.2 2556,93.7 2555,107.4 2554,92.7 2553,101.6 2552,97.8 2551,94 2550,100.7 2549,92.9 2548,100.4 2547,94.2 2546,104.7 2545,93.7 2544,93.2 2543,93.9 2542,99 2541,104 2540,96 2539,96.4 2538,94.2 2537,99.7 2536,100 2535,98 2534,99.7 2533,119.2 2532,109.4 2531,111.1 2530,109 2529,119.9 2528,116.6 2527,108.4 2526,115.5 2525,109.2 2524,105.6 2523,104.5 2522,116.6 2521,114 2520,116.9 2519,109.9 2518,115.6 2517,114.1 2516,110.5 2515,113.8 2514,109.8 2513,113.5 2512,114.9 2511,127.1 2510,121.6 2509,129.5 2508,126.9 2507,132.1 2506,138.3 2505,135.9 2504,138.2 2503,136.2 2502,151 2501,156.1 2500,162.8 2499,182.2 2498,196.1 2497,202.4 2496,210.5 2495,222.2 2494,232.9 2493,251.6 2492,258.3 2491,254.6 2490,263.2 2489,272.8 2488,284.3 2487,297.2 2486,299.4 2485,320.7 2484,316.8 2483,330.9 2482,341.4 2481,347.4 2480,352.2 2479,362.8 2478,361.9 2477,368.1 2476,366.4 2475,368.8 2474,364.2 2473,365.6 2472,363.9 2471,371 2470,366.4 2469,367.8 2468,372.6 2467,369.4 2466,367.9 2465,366.7 2464,369.2 2463,377 2462,365.3 2461,379.8 2460,367.9 2459,368.6 2458,369.6 2457,375.6 2456,370.3 2455,368.7 2454,366.7 2453,372.9 2452,370.5 2451,372.5 2450,371.4 2449,379.1 2448,378 2447,377 2446,371.4 2445,373.5 2444,377.2 2443,370.5 2442,380.6 2441,383.6 2440,371.8 2439,384.2 2438,373 2437,370.5 2436,372.3 2435,378.8 2434,384.6 2433,375.1 2432,369.9 2431,373.6 2430,371.2 2429,367.8 2428,365.7 2427,366.9 2426,378 2425,371 2424,367.5 2423,367.4 2422,371.9 2421,368.2 2420,376.7 2419,367.8 2418,373.1 2417,368.8 2416,377.3 2415,371.2 2414,375 2413,371.3 2412,377.1 2411,369.8 2410,375.6 2409,377.2 2408,376.5 2407,382.4 2406,368.8 2405,376.9 2404,369.3 2403,374.9 2402,370.4 2401,385.4 2400,369.7 2399,365.6 2398,371.9 2397,370.9 2396,368 2395,370.7 2394,390.2 2393,401.3 2392,371.4 2391,373 2390,389.8 2389,377.5 2388,375.9 2387,377.2 2386,379.2 2385,379.3 2384,374.7 2383,373.4 2382,382.4 2381,375.6 2380,370.9 2379,371.3 2378,379.5 2377,382.5 2376,377.4 2375,377.7 2374,374.6 2373,382.5 2372,381 2371,378.7 2370,374 2369,370.2 2368,372.9 2367,378.2 2366,380.4 2365,383 2364,381.3 2363,378.9 2362,383.8 2361,374.6 2360,385 2359,377.1 2358,372.6 2357,392.9 2356,380.8 2355,373.9 2354,385.5 2353,376.2 2352,377 2351,374 2350,373.3 2349,372.2 2348,374.8 2347,379.3 2346,368.6 2345,385.1 2344,372.6 2343,366.5 2342,383.5 2341,368 2340,370.3 2339,374.6 2338,369.9 2337,371.9 2336,382.6 2335,371.8 2334,374.7 2333,381 2332,384.2 2331,377.3 2330,369.5 2329,376 2328,376.1 2327,374.9 2326,377.9 2325,372.2 2324,374.4 2323,379.8 2322,371 2321,365.9 2320,366.2 2319,380.2 2318,375 2317,367.6 2316,377 2315,369.8 2314,373.6 2313,370.7 2312,377 2311,370.4 2310,378.1 2309,377.8 2308,375.6 2307,376.5 2306,377.3 2305,374.5 2304,379.5 2303,373.7 2302,375.7 2301,375.5 2300,366.2 2299,379.6 2298,378.5 2297,385.2 2296,368.7 2295,372.6 2294,374.6 2293,377.7 2292,376.8 2291,374.1 2290,385.4 2289,378.7 2288,379.4 2287,377.5 2286,385.6 2285,381 2284,375.5 2283,379.8 2282,367.1 2281,356.9 2280,354.1 2279,347.8 2278,362.8 2277,376 2276,379.9 2275,374.4 2274,379.9 2273,381.2 2272,371 2271,374.5 2270,378.4 2269,376.6 2268,373.3 2267,370.7 2266,369.1 2265,379 2264,368.7 2263,371.5 2262,367.5 2261,375.6 2260,373 2259,368.8 2258,367.6 2257,371.1 2256,366.6 2255,371.3 2254,367.6 2253,377.2 2252,377 2251,380.3 2250,383.9 2249,376.4 2248,374 2247,383.9 2246,379.1 2245,379.7 2244,383.7 2243,380.3 2242,385.5 2241,386.2 2240,377.1 2239,381.6 2238,377.8 2237,385 2236,383 2235,383.3 2234,381.1 2233,377.4 2232,381.7 2231,375.7 2230,382.3 2229,376.5 2228,377.8 2227,371.9 2226,376.9 2225,380.4 2224,373.8 2223,370.6 2222,372.7 2221,371.7 2220,378.5 2219,372.9 2218,375.9 2217,382.7 2216,373.5 2215,379.3 2214,378.6 2213,384.9 2212,380.6 2211,386.4 2210,376.6 2209,376.9 2208,382.2 2207,388.4 2206,372.4 2205,378.7 2204,376.8 2203,376 2202,371.3 2201,373.5 2200,389.6 2199,381.6 2198,375.1 2197,380.8 2196,374.3 2195,391.5 2194,372.4 2193,375.6 2192,373.5 2191,378.6 2190,384.3 2189,374.6 2188,377.9 2187,375.2 2186,376.6 2185,387.5 2184,369.8 2183,371.7 2182,379.3 2181,382.8 2180,373.4 2179,376.3 2178,375.6 2177,374.9 2176,379.6 2175,375.3 2174,368.5 2173,378.7 2172,370.4 2171,368.6 2170,373.2 2169,369.8 2168,381.9 2167,373.3 2166,369.4 2165,374.2 2164,376.9 2163,407.9 2162,382.2 2161,377.8 2160,394.8 2159,378.7 2158,374.2 2157,378.4 2156,371.8 2155,366.4 2154,367.9 2153,362 2152,361.7 2151,368.6 2150,362.7 2149,358.2 2148,379.7 2147,364.6 2146,362.7 2145,362.8 2144,354 2143,362.7 2142,357.9 2141,352.2 2140,357.1 2139,355.3 2138,353.2 2137,352.5 2136,343.4 2135,335 2134,340.1 2133,325.9 2132,303.1 2131,294.3 2130,290 2129,272 2128,258.7 2127,242.9 2126,232 2125,225.5 2124,217.6 2123,198.9 2122,184.7 2121,177.6 2120,165.9 2119,159.8 2118,157.2 2117,141.5 2116,120.3 2115,108.9 2114,101.4 2113,96.8 2112,102.9 2111,92.5 2110,104.2 2109,97.4 2108,91.9 2107,101.4 2106,110.1 2105,97.1 2104,96.2 2103,96.6 2102,96.7 2101,95.1 2100,94 2099,104.4 2098,94.4 2097,98 2096,105.6 2095,98.8 2094,100.9 2093,99 2092,99.8 2091,101.5 2090,118.7 2089,105.3 2088,106.9 2087,101.8 2086,101.8 2085,115.7 2084,97.7 2083,103.6 2082,92.6 2081,105.4 2080,100.4 2079,92.6 2078,97.5 2077,98 2076,102.4 2075,99.7 2074,95.9 2073,94.3 2072,90.7 2071,95.7 2070,99.6 2069,104.6 2068,101.4 2067,102.7 2066,104.4 2065,98.4 2064,109 2063,100.3 2062,114 2061,116.7 2060,103.1 2059,99.3 2058,111.4 2057,108.9 2056,96.9 2055,100.1 2054,100.4 2053,110 2052,104.7 2051,103 2050,121.2 2049,103.2 2048,110.9 2047,107.8 2046,137.6 2045,109.8 2044,109.5 2043,107.5 2042,104.9 2041,101.8 2040,103.4 2039,96.5 2038,101.2 2037,108.9 2036,125.2 2035,103.1 2034,87.3 2033,89 2032,90 2031,90.9 2030,95.3 2029,94.4 2028,90.6 2027,94.3 2026,98.9 2025,107.5 2024,105.9 2023,97.7 2022,101.6 2021,96.4 2020,94.5 2019,93.2 2018,96.2 2017,93.9 2016,104.7 2015,101.3 2014,116.2 2013,95.5 2012,109.5 2011,103.1 2010,96.6 2009,110 2008,98.6 2007,102.5 2006,100.2 2005,112.3 2004,98.1 2003,92.8 2002,105.7 2001,95.9 2000,102.3 1999,102.2 1998,96.2 1997,100 1996,111.1 1995,104.7 1994,101.5 1993,103.7 1992,101.9 1991,108.8 1990,115.4 1989,102.7 1988,104.7 1987,110.1 1986,106.5 1985,101.8 1984,102.5 1983,102.6 1982,107.1 1981,116.4 1980,117.5 1979,98.2 1978,117.9 1977,113.9 1976,113.4 1975,110.9 1974,114.4 1973,111.4 1972,119.1 1971,115.4 1970,112.3 1969,121.5 1968,118.8 1967,122.5 1966,122.2 1965,121.6 1964,125.2 1963,127.3 1962,125.2 1961,126 1960,125.1 1959,130.8 1958,146.6 1957,158.2 1956,154 1955,185 1954,183.2 1953,205.1 1952,195.3 1951,211.7 1950,221.4 1949,230.2 1948,241.2 1947,251.3 1946,255.9 1945,274.6 1944,278.1 1943,291.5 1942,302.5 1941,313.4 1940,316.7 1939,330.6 1938,335.8 1937,345.7 1936,347.7 1935,358.5 1934,363.7 1933,372 1932,374.2 1931,367.7 1930,373.1 1929,377.4 1928,366.6 1927,367 1926,369.1 1925,378.2 1924,372.7 1923,371.3 1922,383.8 1921,372.5 1920,387.2 1919,380 1918,371.5 1917,373.7 1916,388.4 1915,375.6 1914,369.5 1913,370.1 1912,367.3 1911,365.1 1910,370.1 1909,365 1908,368.3 1907,376.4 1906,363.3 1905,373 1904,370.4 1903,374.6 1902,375.8 1901,370.6 1900,369.6 1899,380.8 1898,372.4 1897,381.7 1896,372.1 1895,372.7 1894,372.3 1893,376.8 1892,380.7 1891,377.1 1890,379.4 1889,387.7 1888,384.1 1887,375.3 1886,380 1885,371 1884,377.1 1883,375.2 1882,372.5 1881,377.6 1880,372.1 1879,368 1878,366 1877,370.3 1876,367.9 1875,376.9 1874,363.4 1873,372.3 1872,370.2 1871,377 1870,368.5 1869,369.9 1868,375.7 1867,369.5 1866,363.7 1865,376.9 1864,373.6 1863,383.3 1862,378.8 1861,374.3 1860,375.4 1859,370.6 1858,373.1 1857,374.3 1856,376.1 1855,379.4 1854,379.2 1853,375.6 1852,381.8 1851,373.6 1850,370 1849,371.7 1848,369.1 1847,369.4 1846,370.7 1845,367 1844,371.3 1843,368.4 1842,366.7 1841,366.3 1840,371 1839,391.8 1838,364.6 1837,372.6 1836,372 1835,366.4 1834,376.4 1833,370 1832,369 1831,367.6 1830,371.2 1829,383.7 1828,366.7 1827,368.6 1826,365.3 1825,374.4 1824,377 1823,367 1822,370.1 1821,367.1 1820,371.6 1819,368.1 1818,376.7 1817,377.2 1816,375.2 1815,375.4 1814,386.7 1813,375.5 1812,376.3 1811,369.3 1810,378.6 1809,376 1808,382.6 1807,372.7 1806,368.6 1805,367.5 1804,372.4 1803,374.4 1802,369.2 1801,368.1 1800,362.1 1799,369.5 1798,363.2 1797,373.3 1796,369.3 1795,378.5 1794,372.5 1793,367.7 1792,373.1 1791,375.3 1790,373.6 1789,368.2 1788,371.4 1787,371.2 1786,372.3 1785,372.2 1784,372.8 1783,369.2 1782,365.2 1781,364.8 1780,377.9 1779,368.8 1778,373.6 1777,369.5 1776,369.9 1775,372.8 1774,368.9 1773,377.8 1772,368.8 1771,364.6 1770,367.7 1769,383.6 1768,373.6 1767,384.7 1766,376.3 1765,374 1764,372 1763,373 1762,370.4 1761,378 1760,381.6 1759,376.1 1758,376.6 1757,381.6 1756,379.5 1755,380 1754,369.2 1753,376 1752,371.1 1751,373.7 1750,370.5 1749,371.3 1748,368.6 1747,372.2 1746,373.1 1745,368.4 1744,371.7 1743,369.4 1742,368 1741,368.7 1740,380.4 1739,378.6 1738,368.2 1737,360.8 1736,344.2 1735,336.9 1734,346.9 1733,366 1732,372.3 1731,378.3 1730,376.1 1729,366.8 1728,383.6 1727,368.3 1726,373.3 1725,373.7 1724,367.2 1723,373.9 1722,369.3 1721,369.5 1720,366.4 1719,370.3 1718,381.9 1717,380.7 1716,384.1 1715,377.4 1714,374.9 1713,384.4 1712,375.5 1711,376 1710,375.9 1709,375.2 1708,373.6 1707,367.3 1706,378.2 1705,371.2 1704,380.1 1703,368.8 1702,377.8 1701,367.6 1700,376.1 1699,374.4 1698,370.4 1697,374.3 1696,370 1695,378.7 1694,375.9 1693,382.1 1692,367.6 1691,370.2 1690,375.5 1689,379.1 1688,373.4 1687,376.6 1686,371.5 1685,365.4 1684,369.8 1683,363.9 1682,360.3 1681,357.9 1680,359.4 1679,356.5 1678,364.9 1677,365.8 1676,361.5" fill="#eeee00" stroke="#eeee00" stroke-width="1" stroke-linejoin="round" />
</g>
<rect x="2999.8" y="92.6" width="136" height="262" fill="none" stroke="#a4a400" stroke-width="3.2" stroke-dasharray="3.4 3" opacity="0.85"/>
<rect x="2998" y="353.4" width="139.4" height="14" fill="#ffff00"/>
<path d="M3025.4 70V367" stroke="#00e4e4" stroke-width="1.6" opacity="0.75"/>
<path d="M3028.6 70V367" stroke="#00e4e4" stroke-width="2.4" stroke-dasharray="6 3.4"/>
<path d="M2999.4 217L3053.4 271M2999.4 271L3053.4 217" stroke="#00d4d4" stroke-width="2.4" opacity="0.95" />
<path d="M3001.4 214L3055.4 268M3001.4 268L3055.4 214" stroke="#00c0c0" stroke-width="2.2" opacity="0.8" stroke-dasharray="7 3"/>
<polygon points="3012.4,44.5 3040.4,44.5 3026.4,71.5" fill="#ff9c00"/>
<path d="M1676.2 184.7a11.5 21 0 0 1 0 42z" fill="#ff9c00"/>
<path d="M1676.2 189.7a6.5 16 0 0 1 0 32z" fill="#ffe400"/>
<path d="M1676.2 205.7H1696.2" stroke="#ffff00" stroke-width="4"/>
<polygon points="1695.2,192.7 1714.2,205.7 1695.2,218.7" fill="#ffff00"/>
<g clip-path="url(#cB2)">
<path d="M1667.6 1321.7C1668.8 1329.7 1674 1358.1 1676.8 1381.4C1679.5 1404.7 1685.2 1493.3 1688.3 1496.3C1691.3 1499.4 1696.7 1413 1699.7 1404.4C1702.8 1395.8 1708.5 1431.4 1711.2 1432C1714 1432.6 1717.4 1400.4 1720.4 1409C1723.5 1417.6 1730.2 1502.1 1734.2 1496.3C1738.2 1490.5 1746.6 1377 1750.3 1365.3C1754 1353.7 1758.7 1407.2 1761.8 1409C1764.8 1410.8 1769.9 1365 1773.3 1379.1C1776.6 1393.2 1783.4 1512.6 1787.1 1514.7C1790.7 1516.9 1797.9 1409 1800.8 1395.2C1803.8 1381.4 1806.8 1411.9 1809.1 1411.3C1811.4 1410.7 1815.1 1381.4 1818.3 1390.6C1821.5 1399.8 1829 1479.9 1833 1480.2C1837 1480.5 1844.5 1394.8 1848.2 1392.9C1851.9 1391.1 1857.2 1475.2 1860.6 1466.5C1864 1457.7 1870.1 1331.8 1873.5 1327.2C1876.8 1322.6 1882.7 1430.3 1885.9 1432C1889.1 1433.7 1893.7 1338.5 1897.4 1340.1C1901 1341.6 1909.9 1433.4 1913.4 1443.5C1917 1453.6 1920.6 1411 1924 1415.9C1927.4 1420.8 1935.2 1481.2 1938.7 1480.2C1942.2 1479.3 1946.8 1401.3 1950.2 1409C1953.6 1416.7 1960.7 1530.3 1964 1537.7C1967.2 1545 1971.8 1469.4 1974.6 1464.2C1977.3 1458.9 1982.1 1494.6 1984.7 1498.6C1987.2 1502.6 1991.1 1491.9 1993.9 1494C1996.6 1496.2 2001.7 1521.4 2005.3 1514.7C2009 1508 2017.1 1443.8 2021.4 1443.5C2025.7 1443.2 2031.1 1519.6 2037.5 1512.4C2044 1505.2 2063.4 1398.9 2069.7 1389.7C2076 1380.5 2080.6 1443.4 2084.9 1443.5C2089.1 1443.6 2098.7 1397.7 2101.9 1390.6C2105 1383.6 2105.7 1393.7 2108.8 1390.6C2111.8 1387.6 2121.5 1370.4 2124.8 1367.6C2128.2 1364.9 2130.2 1383.5 2134 1369.9C2137.9 1356.3 2149.3 1276.7 2153.8 1265.6C2158.3 1254.6 2162.9 1302.1 2167.6 1287.2C2172.3 1272.3 2183.8 1171.7 2189.2 1154C2194.5 1136.2 2203.4 1165.9 2207.6 1154C2211.7 1142 2216.8 1080.6 2220 1064.3C2223.1 1048.1 2227.9 1042.1 2230.9 1032.4C2233.9 1022.6 2239.7 1003.3 2242.4 991C2245.2 978.8 2249.8 948.8 2251.6 940.5C2253.4 932.2 2254.9 927.8 2256.2 929C2257.5 930.2 2260.2 947.5 2261.7 949.7C2263.2 951.8 2265.1 953.7 2267.7 945.1C2270.3 936.5 2278.2 889.6 2281.5 885.4C2284.7 881.1 2289.3 919 2292 912.9C2294.8 906.8 2299.9 859 2302.1 839.4C2304.4 819.8 2306.9 769.9 2309 765.9C2311.2 761.9 2315.5 812.6 2318.2 809.5C2321 806.5 2327.4 754.3 2329.7 742.9C2332 731.6 2333.1 721.5 2335.2 724.6C2337.4 727.6 2343.2 775.1 2345.8 765.9C2348.4 756.7 2352.7 680.3 2355 655.6C2357.2 631 2360.9 583.7 2362.8 581.2C2364.6 578.8 2366.9 620.3 2368.8 637.3C2370.7 654.2 2374.6 710.9 2377 708.5C2379.5 706 2384.6 636.2 2387.1 618.9C2389.7 601.6 2393.6 580 2396.3 578.5C2399.1 576.9 2404.4 610.6 2407.8 607.4C2411.2 604.2 2418.5 567.1 2421.6 554.6C2424.7 542 2428 518.1 2430.8 513.2C2433.5 508.3 2438.9 523 2442.3 517.8C2445.6 512.6 2452.7 476.5 2456 474.2C2459.4 471.9 2464.2 502.5 2467.5 500.4C2470.9 498.2 2477.6 467.4 2481.3 458.1C2485 448.8 2492.3 438.5 2495.1 430.5C2497.8 422.6 2500.3 405.7 2502 398.4C2503.6 391 2506.1 375.4 2507.5 375.4C2508.9 375.4 2510.8 383.1 2512.6 398.4C2514.3 413.7 2518.3 483.5 2520.4 490.3C2522.4 497 2526.3 458.1 2528.2 448.9C2530 439.7 2532.1 425.5 2534.1 421.3C2536.2 417.2 2540.9 420.7 2543.3 417.7C2545.8 414.6 2550.4 404 2552.5 398.4C2554.7 392.7 2556 378.5 2559.4 375.4C2562.8 372.3 2573.5 373.6 2577.8 375.4C2582.1 377.2 2589.1 385.2 2591.6 389.2C2594 393.2 2594.8 405.3 2596.2 405.3C2597.5 405.3 2599.2 393.2 2601.7 389.2C2604.1 385.2 2612.8 377.2 2614.6 375.4" fill="none" stroke="#00e4e4" stroke-width="2.4" stroke-linejoin="round" />
<path d="M1667.6 1477.9C1668.8 1480.1 1674.6 1492.8 1676.8 1494C1678.9 1495.3 1681.3 1483.8 1683.7 1487.1C1686 1490.5 1690.9 1518.4 1694.2 1519.3C1697.6 1520.2 1705.3 1500.8 1708.9 1494C1712.6 1487.3 1718.4 1468.4 1721.8 1468.8C1725.2 1469.1 1731.3 1500 1734.2 1496.3C1737.1 1492.6 1740.8 1455.9 1743.4 1441.2C1746 1426.5 1751.1 1386 1753.5 1386C1756 1386 1759.5 1424.9 1761.8 1441.2C1764.1 1457.4 1768.2 1503.5 1771 1507.8C1773.7 1512.1 1779.4 1478.9 1782.5 1473.3C1785.5 1467.8 1790.3 1464 1794 1466.5C1797.6 1468.9 1805.3 1482.8 1810 1491.7C1814.8 1500.6 1824.4 1532.5 1829.3 1533.1C1834.2 1533.7 1841.9 1505 1846.8 1496.3C1851.7 1487.6 1861.5 1464.8 1866.1 1467.8C1870.7 1470.9 1877.4 1521.6 1881.3 1519.3C1885.1 1517 1891.1 1449.8 1895.1 1450.4C1899 1451 1905.6 1521.4 1911.1 1523.9C1916.7 1526.3 1930.9 1470 1936.4 1468.8C1941.9 1467.5 1949.1 1506.1 1952.5 1514.7C1955.9 1523.3 1959.2 1525.1 1961.7 1533.1C1964.1 1541.1 1968.1 1580.6 1970.9 1574.4C1973.6 1568.3 1979.9 1502.8 1982.4 1487.1C1984.8 1471.5 1986.5 1455.7 1989.3 1457.3C1992 1458.8 1999.9 1500.2 2003.1 1498.6C2006.2 1497.1 2009.8 1437.2 2013.2 1445.8C2016.5 1454.4 2024.2 1559.6 2028.3 1563C2032.5 1566.3 2041.3 1483 2044.4 1471C2047.5 1459.1 2048.5 1469.4 2051.3 1473.3C2054.1 1477.3 2061.7 1502.8 2065.1 1500.9C2068.5 1499.1 2073.2 1455.3 2076.6 1459.6C2080 1463.8 2086.6 1540.4 2090.4 1533.1C2094.2 1525.7 2101.1 1414.5 2105.1 1404.4C2109.1 1394.3 2116.7 1460.3 2120.2 1457.3C2123.8 1454.2 2128.5 1399.2 2131.7 1381.4C2135 1363.7 2140.4 1327.1 2144.6 1324C2148.8 1320.9 2158.9 1363.4 2163 1358.5C2167.1 1353.6 2172.5 1297 2175.4 1287.2C2178.3 1277.4 2181.3 1305.1 2184.6 1284.9C2187.8 1264.7 2196.1 1146.6 2199.7 1135.6C2203.4 1124.5 2209 1207.7 2212.2 1202.2C2215.3 1196.7 2220.6 1112 2223.6 1094.2C2226.7 1076.4 2233.2 1073.5 2235.1 1068.9C2237 1064.4 2235.1 1066 2237.8 1059.9C2240.6 1053.8 2251.9 1041.6 2256.2 1023.2C2260.5 1004.8 2267.2 943.2 2270 922.1C2272.7 901 2275 869.6 2276.9 864.7C2278.7 859.8 2281.6 874.9 2283.8 885.4C2285.9 895.8 2289.9 948.9 2293 942.8C2296 936.7 2304 858.4 2306.7 839.4C2309.5 820.4 2311.8 800.4 2313.6 800.4C2315.5 800.4 2318.5 826.9 2320.5 839.4C2322.5 852 2326.6 894.5 2328.8 894.5C2330.9 894.5 2334.8 851 2336.6 839.4C2338.4 827.8 2340.6 807.9 2342.1 807.3C2343.6 806.6 2346.1 842.8 2348.1 834.8C2350.1 826.9 2354.9 772 2357.3 747.5C2359.6 723 2363.7 657.2 2365.5 651.1C2367.4 644.9 2369.4 688.4 2371.1 701.6C2372.7 714.8 2376.1 749.8 2377.9 749.8C2379.8 749.8 2382.7 716 2384.8 701.6C2387 687.2 2391.6 652.6 2394 641.9C2396.5 631.1 2400.1 624.3 2403.2 621.2C2406.3 618.1 2413.9 624.7 2417 618.9C2420.1 613.1 2423.4 588.9 2426.2 577.5C2428.9 566.2 2434.9 535.4 2437.7 533.9C2440.4 532.4 2444.2 570 2446.9 566.1C2449.5 562.1 2455.3 505.6 2457.4 504C2459.6 502.5 2461.3 541.4 2462.9 554.6C2464.6 567.7 2468 607.7 2469.8 602.8C2471.7 597.9 2474.9 541.4 2476.7 517.8C2478.6 494.2 2481.8 429.6 2483.6 425.9C2485.4 422.3 2488.7 475.9 2490.5 490.3C2492.3 504.7 2495.1 536 2497.4 533.9C2499.7 531.8 2505.5 477.5 2508 474.2C2510.4 470.8 2513.8 499.8 2515.8 508.6C2517.7 517.5 2520.5 544.5 2522.7 540.8C2524.8 537.1 2529.6 493.3 2531.8 481.1C2534.1 468.8 2536.6 448.6 2539.7 448.9C2542.7 449.2 2551.4 473 2554.8 483.4C2558.2 493.8 2562.5 530.4 2564.9 527C2567.4 523.6 2571 476.5 2573.2 458.1C2575.4 439.7 2579.5 400.2 2581.5 389.2C2583.4 378.2 2586.2 370.5 2587.9 375.4C2589.5 380.3 2592.2 412.8 2593.9 425.9C2595.6 439.1 2598.9 474.2 2600.8 474.2C2602.6 474.2 2605.9 439.1 2607.6 425.9C2609.4 412.8 2612.1 382 2613.6 375.4C2615.1 368.8 2616.9 373.9 2618.9 376.7C2620.8 379.5 2625.5 390.1 2628.1 396.7C2630.7 403.3 2635.7 425.9 2638.4 425.9C2641.2 425.9 2643 403.3 2648.8 396.7C2654.6 390.1 2672.5 376.7 2681.8 376.7C2691.2 376.7 2712.4 389.2 2718.8 396.7C2725.3 404.2 2727.3 432.8 2730.3 432.8C2733.4 432.8 2740 404.2 2741.8 396.7C2743.5 389.2 2742.5 376.7 2743.5 376.7C2744.5 376.7 2747.2 390.4 2749.3 396.7C2751.4 403 2756.6 423.6 2759.2 423.6C2761.9 423.6 2767.7 403 2769.2 396.7C2770.5 390.4 2769.6 376.7 2770.5 376.7C2771.3 376.7 2773.5 389.5 2775.7 396.7C2777.9 403.9 2783.8 430.5 2786.8 430.5C2789.8 430.5 2796.1 401.2 2797.9 396.7C2799.7 392.2 2798.1 389.7 2800.3 396.7C2802.5 403.7 2810.6 448.9 2814.4 448.9C2818.1 448.9 2821.5 406.3 2828.4 396.7C2835.3 387.1 2855.3 376.7 2865.8 376.7C2876.4 376.7 2900.7 392 2907.3 396.7C2913.9 401.4 2913.3 412.2 2915.4 412.2C2917.6 412.2 2922.1 401.4 2923.6 396.7C2925 392 2925 376.7 2926.3 376.7C2927.5 376.7 2930.1 386.6 2933 396.7C2935.8 406.8 2943.7 452.6 2947.6 452.6C2951.5 452.6 2960 406.8 2962.2 396.7C2964.4 386.6 2963.3 376.7 2964.4 376.7C2965.5 376.7 2968.2 389.2 2970.6 396.7C2972.9 404.2 2979 432.8 2982 432.8C2985.1 432.8 2992 401.5 2993.5 396.7C2993.4 391.9 2993.4 391 2993.4 396.7C2995 402.4 3002.6 439.7 3005.9 439.7C3009.3 439.7 3016.3 402.4 3018.5 396.7C3020.6 391 3019.5 388.8 3022 396.7C3024.5 404.6 3033.1 455.8 3037.2 455.8C3041.2 455.8 3050 404.6 3052.3 396.7C3054.5 388.8 3053 393.7 3054.5 396.7C3056.1 399.7 3061.3 419 3063.8 419C3066.3 419 3071.1 399.7 3073 396.7C3075 393.7 3076.7 395.6 3078.3 396.7C3080 397.8 3083.5 405.3 3085.4 405.3C3087.3 405.3 3090.7 397.8 3092.4 396.7C3094.2 395.6 3095.2 387.3 3098.3 396.7C3101.3 406.1 3110.7 467.3 3115.2 467.3C3119.8 467.3 3128.6 408.8 3132.2 396.7C3135.8 384.6 3138.9 376.7 3142.1 376.7C3145.3 376.7 3152.9 391.4 3156 396.7C3159 402 3162.5 416.7 3164.9 416.7C3167.2 416.7 3169.7 401.8 3173.7 396.7C3177.8 391.6 3192.2 381.1 3195 378.7" fill="none" stroke="#eeee00" stroke-width="2.4" stroke-linejoin="round" />
</g>
<path d="M2242.2 399V1697" stroke="#00e4e4" stroke-width="2.6"/>
<path d="M2247.8 399V1697" stroke="#00e4e4" stroke-width="2.6" stroke-dasharray="6 3.4"/>
<path d="M2215.2 993L2269.2 1047M2215.2 1047L2269.2 993" stroke="#00dede" stroke-width="2.4" opacity="0.95" />
<path d="M2220.8 958L2274.8 1012M2220.8 1012L2274.8 958" stroke="#00c8c8" stroke-width="2.2" opacity="0.85" stroke-dasharray="8 3"/>
<polygon points="2173.5,399.5 2201.5,399.5 2187.5,426.5" fill="#ff9c00"/>
<path d="M1676.2 838.4a11.5 21 0 0 1 0 42z" fill="#ff9c00"/>
<path d="M1676.2 843.4a6.5 16 0 0 1 0 32z" fill="#ffe400"/>
<path d="M1676.2 859.4H1696.2" stroke="#ffff00" stroke-width="4"/>
<polygon points="1695.2,846.4 1714.2,859.4 1695.2,872.4" fill="#ffff00"/>
<polygon points="2274,1051.6 2306,1034.6 2306,1043.9 2342.4,1043.9 2342.4,1059.3 2306,1059.3 2306,1068.6" fill="#000" stroke="#fff" stroke-width="7" stroke-linejoin="miter"/>
<text x="2357" y="1082.8" font-size="86" fill="#fff" text-anchor="start" font-weight="normal" class="fs" textLength="299" lengthAdjust="spacingAndGlyphs" stroke="#000" stroke-width="1.6">9.951ps</text>
<rect x="1676.2" y="1724" width="1513.8" height="8.8" fill="#c47800"/>
<rect x="1676.2" y="1732.6" width="1513.8" height="7.4" fill="#5468a8"/>
<rect x="1688.4" y="1746.8" width="758" height="249.4" rx="13" fill="none" stroke="#b4b4b4" stroke-width="2.4"/>
<rect x="1710.6" y="1765.6" width="88.2" height="35.6" rx="17.8" fill="url(#gb)" stroke="#343434" stroke-width="3"/>
<rect x="1713.6" y="1769.1" width="82.2" height="28.6" rx="14.3" fill="url(#gy)"/>
<text x="1754.7" y="1792" font-size="24" fill="#111" text-anchor="middle" font-weight="bold" class="fs" >C1</text>
<rect x="1710.6" y="1822.2" width="88.2" height="35.6" rx="17.8" fill="url(#gb)" stroke="#343434" stroke-width="3"/>
<rect x="1713.6" y="1825.7" width="82.2" height="28.6" rx="14.3" fill="url(#gc)"/>
<text x="1754.7" y="1848.6" font-size="24" fill="#111" text-anchor="middle" font-weight="bold" class="fs" >C2</text>
<rect x="1710.6" y="1879" width="88.2" height="35.6" rx="17.8" fill="url(#gb)" stroke="#343434" stroke-width="3"/>
<rect x="1713.6" y="1882.5" width="82.2" height="28.6" rx="14.3" fill="url(#gy)"/>
<text x="1754.7" y="1905.4" font-size="24" fill="#111" text-anchor="middle" font-weight="bold" class="fs" >Z1C1</text>
<rect x="1710.6" y="1936" width="88.2" height="35.6" rx="17.8" fill="url(#gb)" stroke="#343434" stroke-width="3"/>
<rect x="1713.6" y="1939.5" width="82.2" height="28.6" rx="14.3" fill="url(#gc)"/>
<text x="1754.7" y="1962.4" font-size="24" fill="#111" text-anchor="middle" font-weight="bold" class="fs" >Z1C2</text>
<text x="1813.4" y="1791.6" font-size="33" fill="#fff" text-anchor="start" font-weight="bold" class="fs" >50.0mV</text>
<text x="1948" y="1791.6" font-size="33.2" fill="#a4a4a4" text-anchor="start" font-weight="bold" class="fs" >Offset:222.0mV</text>
<text x="2205.4" y="1791.6" font-size="33" fill="#fff" text-anchor="start" font-weight="bold" class="fs" >50Ω</text>
<text x="2293" y="1791.6" font-size="33" fill="#fff" font-weight="bold" class="fs"><tspan font-size="21" dy="-8">B</tspan><tspan font-size="27" dy="18" dx="-3">W</tspan><tspan dy="-10">:23.0G</tspan></text>
<path d="M2319 1761.6l-3 9" stroke="#fff" stroke-width="2.2"/>
<text x="1813.4" y="1848.2" font-size="33" fill="#fff" text-anchor="start" font-weight="bold" class="fs" >50.0mV</text>
<text x="1948" y="1848.2" font-size="33.2" fill="#a4a4a4" text-anchor="start" font-weight="bold" class="fs" >Offset:226.0mV</text>
<text x="2205.4" y="1848.2" font-size="33" fill="#fff" text-anchor="start" font-weight="bold" class="fs" >50Ω</text>
<text x="2293" y="1848.2" font-size="33" fill="#fff" font-weight="bold" class="fs"><tspan font-size="21" dy="-8">B</tspan><tspan font-size="27" dy="18" dx="-3">W</tspan><tspan dy="-10">:23.0G</tspan></text>
<path d="M2319 1818.2l-3 9" stroke="#fff" stroke-width="2.2"/>
<text x="1813.4" y="1905" font-size="33" fill="#fff" text-anchor="start" font-weight="bold" class="fs" >50.0mV</text>
<text x="1948" y="1905" font-size="33" fill="#fff" text-anchor="start" font-weight="bold" class="fs" >497.5ps</text>
<text x="2096.6" y="1905" font-size="33" fill="#fff" text-anchor="start" font-weight="bold" class="fs" textLength="236" lengthAdjust="spacingAndGlyphs">-945.4ps4.03ns</text>
<text x="1813.4" y="1962" font-size="33" fill="#fff" text-anchor="start" font-weight="bold" class="fs" >50.0mV</text>
<text x="1948" y="1962" font-size="33" fill="#fff" text-anchor="start" font-weight="bold" class="fs" >497.5ps</text>
<text x="2096.6" y="1962" font-size="33" fill="#fff" text-anchor="start" font-weight="bold" class="fs" textLength="236" lengthAdjust="spacingAndGlyphs">-945.4ps4.03ns</text>
<rect x="2458.4" y="1747.6" width="730.4" height="248.2" rx="13" fill="none" stroke="#b4b4b4" stroke-width="2.4"/>
<rect x="2583" y="1763" width="230" height="227.6" fill="none" stroke="#b8b8b8" stroke-width="2.2"/>
<path d="M2583 1819.8H2813M2583 1876.8H2813M2583 1933.8H2813" stroke="#b8b8b8" stroke-width="2.2" fill="none" />
<rect x="2934.6" y="1763" width="230" height="227.6" fill="none" stroke="#b8b8b8" stroke-width="2.2"/>
<path d="M2934.6 1819.8H3164.6M2934.6 1876.8H3164.6M2934.6 1933.8H3164.6" stroke="#b8b8b8" stroke-width="2.2" fill="none" />
<rect x="2481.6" y="1770.4" width="91.4" height="36" rx="18" fill="url(#gb)" stroke="#343434" stroke-width="3"/>
<rect x="2484.6" y="1773.9" width="85.4" height="29" rx="14.5" fill="url(#gc)"/>
<text x="2527.3" y="1797" font-size="24" fill="#111" text-anchor="middle" font-weight="bold" class="fs" >V1</text>
<rect x="2833.6" y="1770.4" width="90.4" height="36" rx="18" fill="url(#gb)" stroke="#343434" stroke-width="3"/>
<rect x="2836.6" y="1773.9" width="84.4" height="29" rx="14.5" fill="url(#gc)"/>
<text x="2878.8" y="1797" font-size="24" fill="#111" text-anchor="middle" font-weight="bold" class="fs" >t1</text>
<text x="2589.6" y="1798.8" font-size="32.4" fill="#fff" text-anchor="start" font-weight="bold" class="fs" >163.03mV</text>
<text x="2939.6" y="1798.8" font-size="32.4" fill="#fff" text-anchor="start" font-weight="bold" class="fs" >99.41ps</text>
<rect x="2481.6" y="1827.3" width="91.4" height="36" rx="18" fill="url(#gb)" stroke="#343434" stroke-width="3"/>
<rect x="2484.6" y="1830.8" width="85.4" height="29" rx="14.5" fill="url(#gc)"/>
<text x="2527.3" y="1853.9" font-size="24" fill="#111" text-anchor="middle" font-weight="bold" class="fs" >V2</text>
<rect x="2833.6" y="1827.3" width="90.4" height="36" rx="18" fill="url(#gb)" stroke="#343434" stroke-width="3"/>
<rect x="2836.6" y="1830.8" width="84.4" height="29" rx="14.5" fill="url(#gc)"/>
<text x="2878.8" y="1853.9" font-size="24" fill="#111" text-anchor="middle" font-weight="bold" class="fs" >t2</text>
<text x="2589.6" y="1855.7" font-size="32.4" fill="#fff" text-anchor="start" font-weight="bold" class="fs" >176.91mV</text>
<text x="2939.6" y="1855.7" font-size="32.4" fill="#fff" text-anchor="start" font-weight="bold" class="fs" >109.361ps</text>
<rect x="2481.6" y="1884.3" width="91.4" height="36" rx="18" fill="url(#gb)" stroke="#343434" stroke-width="3"/>
<rect x="2484.6" y="1887.8" width="85.4" height="29" rx="14.5" fill="url(#gc)"/>
<text x="2527.3" y="1910.9" font-size="24" fill="#111" text-anchor="middle" font-weight="bold" class="fs" >ΔV</text>
<rect x="2833.6" y="1884.3" width="90.4" height="36" rx="18" fill="url(#gb)" stroke="#343434" stroke-width="3"/>
<rect x="2836.6" y="1887.8" width="84.4" height="29" rx="14.5" fill="url(#gc)"/>
<text x="2878.8" y="1910.9" font-size="24" fill="#111" text-anchor="middle" font-weight="bold" class="fs" >Δt</text>
<text x="2589.6" y="1912.7" font-size="32.4" fill="#fff" text-anchor="start" font-weight="bold" class="fs" >13.88mV</text>
<text x="2939.6" y="1912.7" font-size="32.4" fill="#fff" text-anchor="start" font-weight="bold" class="fs" >9.951ps</text>
<rect x="2481.6" y="1941.2" width="91.4" height="36" rx="18" fill="url(#gb)" stroke="#343434" stroke-width="3"/>
<rect x="2484.6" y="1944.7" width="85.4" height="29" rx="14.5" fill="url(#gc)"/>
<text x="2527.3" y="1967.5" font-size="23" fill="#111" text-anchor="middle" font-weight="bold" class="fs" >ΔV/Δt</text>
<rect x="2833.6" y="1941.2" width="90.4" height="36" rx="18" fill="url(#gb)" stroke="#343434" stroke-width="3"/>
<rect x="2836.6" y="1944.7" width="84.4" height="29" rx="14.5" fill="url(#gc)"/>
<text x="2878.8" y="1967.8" font-size="24" fill="#111" text-anchor="middle" font-weight="bold" class="fs" >1/Δt</text>
<text x="2589.6" y="1969.6" font-size="32.4" fill="#fff" text-anchor="start" font-weight="bold" class="fs" >1.395GV/s</text>
<text x="2939.6" y="1969.6" font-size="32.4" fill="#fff" text-anchor="start" font-weight="bold" class="fs" >100.494GHz</text>
<text x="2435.5" y="2089" font-size="84.5" letter-spacing="-1.6" text-anchor="middle" class="fr" fill="#000">(<tspan font-weight="bold">b</tspan>)</text>
</svg></body></html>
